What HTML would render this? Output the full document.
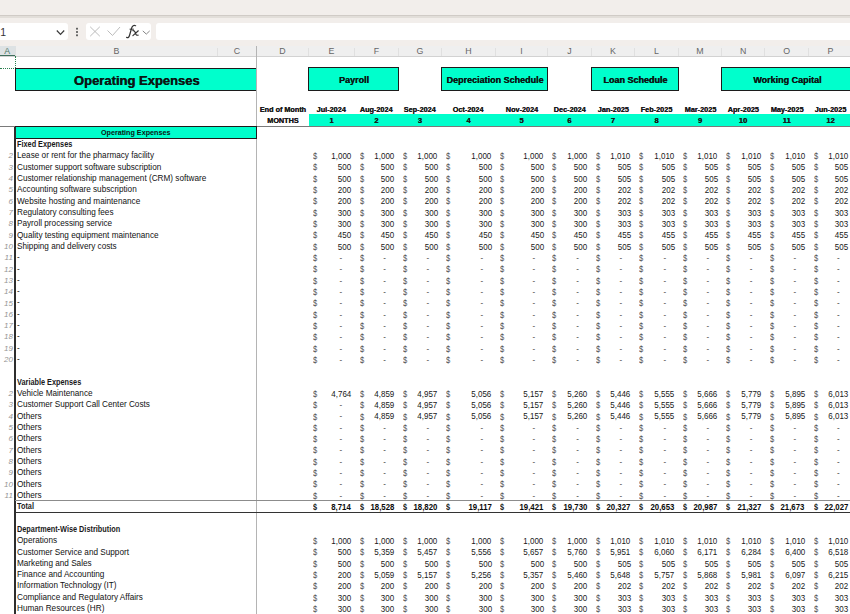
<!DOCTYPE html><html><head><meta charset="utf-8"><style>
*{margin:0;padding:0;box-sizing:border-box}
html,body{width:850px;height:614px;overflow:hidden;background:#fff;position:relative}
body{font-family:"Liberation Sans",sans-serif;color:#1a1a1a}
.a{position:absolute;white-space:pre}
.r{position:absolute}
</style></head><body>
<div class="r" style="left:0;top:0;width:850px;height:46px;background:#f2eeeb"></div>
<div class="r" style="left:0;top:14.6px;width:850px;height:1.4px;background:#d0cbc6"></div>
<div class="r" style="left:0;top:16px;width:850px;height:1.6px;background:#e2ded9"></div>
<div class="r" style="left:-6px;top:22.7px;width:74px;height:17.3px;background:#fff;border-radius:3px"></div>
<div class="a" style="left:0.20px;top:27.31px;font-size:10.5px;line-height:10.5px;color:#333;">1</div>
<svg class="r" style="left:55px;top:29px" width="11" height="7" viewBox="0 0 11 7"><path d="M1.8 1.5 L5.5 5.3 L9.2 1.5" fill="none" stroke="#3a3a3a" stroke-width="1.2"/></svg>
<svg class="r" style="left:75px;top:27px" width="4" height="10" viewBox="0 0 4 10"><rect x="1.1" y="0.8" width="1.8" height="1.8" fill="#555"/><rect x="1.1" y="4.1" width="1.8" height="1.8" fill="#555"/><rect x="1.1" y="7.4" width="1.8" height="1.8" fill="#555"/></svg>
<div class="r" style="left:86px;top:22.7px;width:65px;height:17.3px;background:#fff;border-radius:3px"></div>
<svg class="r" style="left:89px;top:26px" width="12" height="11" viewBox="0 0 12 11"><path d="M1.2 0.8 L10.8 10.2 M10.8 0.8 L1.2 10.2" fill="none" stroke="#b4b4b4" stroke-width="0.9"/></svg>
<svg class="r" style="left:106px;top:26px" width="15" height="11" viewBox="0 0 15 11"><path d="M1.5 4.5 L6.5 9.5 L14 1" fill="none" stroke="#b4b4b4" stroke-width="0.9"/></svg>
<svg class="r" style="left:120px;top:20px" width="35" height="22" viewBox="120 20 35 22"><path d="M126.6 37.3 C127.8 38.3 129 37.6 129.8 34.5 L131.6 28.2 C132.4 25.6 133.8 24.9 135.6 25.7" fill="none" stroke="#333" stroke-width="1.25" stroke-linecap="round"/><path d="M129.6 29.2 L133.9 29.2" stroke="#333" stroke-width="1"/><path d="M132.9 30.6 C134.4 30.2 134.9 31 135.4 32.8 C135.9 34.8 136.6 35.6 138.1 35.1 M138.3 30.8 L132.9 35.6" fill="none" stroke="#333" stroke-width="1.2" stroke-linecap="round"/></svg>
<svg class="r" style="left:142px;top:29.5px" width="9" height="6" viewBox="0 0 9 6"><path d="M0.8 0.9 L4.3 4.1 L7.7 0.9" fill="none" stroke="#777" stroke-width="0.9"/></svg>
<div class="r" style="left:156px;top:22.7px;width:700px;height:17.3px;background:#fff;border-radius:3px"></div>
<div class="r" style="left:0;top:46px;width:850px;height:10.4px;background:#efefef"></div>
<div class="r" style="left:0;top:55.6px;width:850px;height:0.8px;background:#d2d2d2"></div>
<div class="r" style="left:0;top:46px;width:15.6px;height:9.6px;background:#dde2e4"></div>
<div class="r" style="left:0;top:55.2px;width:15.6px;height:1.2px;background:#3f6e5c"></div>
<div class="a" style="left:-0.60px;top:46.55px;font-size:8.8px;line-height:8.8px;width:15.60px;text-align:center;color:#4a7566;">A</div>
<div class="a" style="left:15.60px;top:46.55px;font-size:8.8px;line-height:8.8px;width:201.70px;text-align:center;color:#666;">B</div>
<div class="r" style="left:15.30px;top:48px;width:0.6px;height:7.6px;background:#e0e0e0"></div>
<div class="a" style="left:217.30px;top:46.55px;font-size:8.8px;line-height:8.8px;width:39.20px;text-align:center;color:#666;">C</div>
<div class="r" style="left:217.00px;top:48px;width:0.6px;height:7.6px;background:#e0e0e0"></div>
<div class="a" style="left:256.50px;top:46.55px;font-size:8.8px;line-height:8.8px;width:52.00px;text-align:center;color:#666;">D</div>
<div class="r" style="left:256.20px;top:48px;width:0.6px;height:7.6px;background:#e0e0e0"></div>
<div class="a" style="left:308.50px;top:46.55px;font-size:8.8px;line-height:8.8px;width:46.10px;text-align:center;color:#666;">E</div>
<div class="r" style="left:308.20px;top:48px;width:0.6px;height:7.6px;background:#e0e0e0"></div>
<div class="a" style="left:354.60px;top:46.55px;font-size:8.8px;line-height:8.8px;width:43.70px;text-align:center;color:#666;">F</div>
<div class="r" style="left:354.30px;top:48px;width:0.6px;height:7.6px;background:#e0e0e0"></div>
<div class="a" style="left:398.30px;top:46.55px;font-size:8.8px;line-height:8.8px;width:43.20px;text-align:center;color:#666;">G</div>
<div class="r" style="left:398.00px;top:48px;width:0.6px;height:7.6px;background:#e0e0e0"></div>
<div class="a" style="left:441.50px;top:46.55px;font-size:8.8px;line-height:8.8px;width:54.00px;text-align:center;color:#666;">H</div>
<div class="r" style="left:441.20px;top:48px;width:0.6px;height:7.6px;background:#e0e0e0"></div>
<div class="a" style="left:495.50px;top:46.55px;font-size:8.8px;line-height:8.8px;width:52.00px;text-align:center;color:#666;">I</div>
<div class="r" style="left:495.20px;top:48px;width:0.6px;height:7.6px;background:#e0e0e0"></div>
<div class="a" style="left:547.50px;top:46.55px;font-size:8.8px;line-height:8.8px;width:43.70px;text-align:center;color:#666;">J</div>
<div class="r" style="left:547.20px;top:48px;width:0.6px;height:7.6px;background:#e0e0e0"></div>
<div class="a" style="left:591.20px;top:46.55px;font-size:8.8px;line-height:8.8px;width:43.30px;text-align:center;color:#666;">K</div>
<div class="r" style="left:590.90px;top:48px;width:0.6px;height:7.6px;background:#e0e0e0"></div>
<div class="a" style="left:634.50px;top:46.55px;font-size:8.8px;line-height:8.8px;width:44.00px;text-align:center;color:#666;">L</div>
<div class="r" style="left:634.20px;top:48px;width:0.6px;height:7.6px;background:#e0e0e0"></div>
<div class="a" style="left:678.50px;top:46.55px;font-size:8.8px;line-height:8.8px;width:43.00px;text-align:center;color:#666;">M</div>
<div class="r" style="left:678.20px;top:48px;width:0.6px;height:7.6px;background:#e0e0e0"></div>
<div class="a" style="left:721.50px;top:46.55px;font-size:8.8px;line-height:8.8px;width:43.20px;text-align:center;color:#666;">N</div>
<div class="r" style="left:721.20px;top:48px;width:0.6px;height:7.6px;background:#e0e0e0"></div>
<div class="a" style="left:764.70px;top:46.55px;font-size:8.8px;line-height:8.8px;width:44.00px;text-align:center;color:#666;">O</div>
<div class="r" style="left:764.40px;top:48px;width:0.6px;height:7.6px;background:#e0e0e0"></div>
<div class="a" style="left:808.70px;top:46.55px;font-size:8.8px;line-height:8.8px;width:43.50px;text-align:center;color:#666;">P</div>
<div class="r" style="left:808.40px;top:48px;width:0.6px;height:7.6px;background:#e0e0e0"></div>
<div class="r" style="left:14.8px;top:56.4px;width:0;height:12px;border-left:0.9px dotted #2a8050"></div>
<div class="r" style="left:0;top:67.8px;width:15.6px;height:0;border-top:0.9px dotted #2a8050"></div>
<div class="r" style="left:14.6px;top:67.5px;width:242.20px;height:23.2px;background:#00FFCC;border:1.2px solid #1c1c1c"></div>
<div class="a" style="left:15.60px;top:73.60px;font-size:13px;line-height:13px;width:242.20px;text-align:center;font-weight:bold;color:#0a1714;text-shadow:0.4px 0 0 #0a1714">Operating Expenses</div>
<div class="r" style="left:308.10px;top:67.4px;width:90.70px;height:23.3px;background:#00FFCC;border:1.2px solid #1c1c1c"></div>
<div class="a" style="left:309.00px;top:75.78px;font-size:9px;line-height:9px;width:89.80px;text-align:center;font-weight:bold;color:#0a1714;text-shadow:0.35px 0 0 #0a1714">Payroll</div>
<div class="r" style="left:441.10px;top:67.4px;width:106.90px;height:23.3px;background:#00FFCC;border:1.2px solid #1c1c1c"></div>
<div class="a" style="left:442.00px;top:75.78px;font-size:9px;line-height:9px;width:106.00px;text-align:center;font-weight:bold;color:#0a1714;text-shadow:0.35px 0 0 #0a1714">Depreciation Schedule</div>
<div class="r" style="left:590.80px;top:67.4px;width:88.20px;height:23.3px;background:#00FFCC;border:1.2px solid #1c1c1c"></div>
<div class="a" style="left:591.70px;top:75.78px;font-size:9px;line-height:9px;width:87.30px;text-align:center;font-weight:bold;color:#0a1714;text-shadow:0.35px 0 0 #0a1714">Loan Schedule</div>
<div class="r" style="left:721.10px;top:67.4px;width:131.60px;height:23.3px;background:#00FFCC;border:1.2px solid #1c1c1c"></div>
<div class="a" style="left:722.00px;top:75.78px;font-size:9px;line-height:9px;width:130.70px;text-align:center;font-weight:bold;color:#0a1714;text-shadow:0.35px 0 0 #0a1714">Working Capital</div>
<div class="r" style="left:308.5px;top:114.2px;width:541.5px;height:11.5px;background:#00FFCC"></div>
<div class="a" style="left:256.50px;top:105.60px;font-size:7.8px;line-height:7.8px;width:52.00px;text-align:center;font-weight:bold;text-shadow:0.2px 0 0 #1a1a1a"><span style="display:inline-block;transform:scaleX(0.93);transform-origin:50% 0">End of Month</span></div>
<div class="a" style="left:256.50px;top:116.80px;font-size:7.8px;line-height:7.8px;width:52.00px;text-align:center;font-weight:bold;text-shadow:0.2px 0 0 #1a1a1a"><span style="display:inline-block;transform:scaleX(0.93);transform-origin:50% 0">MONTHS</span></div>
<div class="a" style="left:308.50px;top:105.97px;font-size:7.6px;line-height:7.6px;width:46.10px;text-align:center;font-weight:bold;text-shadow:0.2px 0 0 #1a1a1a"><span style="display:inline-block;transform:scaleX(0.96);transform-origin:50% 0">Jul-2024</span></div>
<div class="a" style="left:308.50px;top:117.27px;font-size:7.6px;line-height:7.6px;width:46.10px;text-align:center;font-weight:bold;text-shadow:0.2px 0 0 #1a1a1a">1</div>
<div class="a" style="left:354.60px;top:105.97px;font-size:7.6px;line-height:7.6px;width:43.70px;text-align:center;font-weight:bold;text-shadow:0.2px 0 0 #1a1a1a"><span style="display:inline-block;transform:scaleX(0.96);transform-origin:50% 0">Aug-2024</span></div>
<div class="a" style="left:354.60px;top:117.27px;font-size:7.6px;line-height:7.6px;width:43.70px;text-align:center;font-weight:bold;text-shadow:0.2px 0 0 #1a1a1a">2</div>
<div class="a" style="left:398.30px;top:105.97px;font-size:7.6px;line-height:7.6px;width:43.20px;text-align:center;font-weight:bold;text-shadow:0.2px 0 0 #1a1a1a"><span style="display:inline-block;transform:scaleX(0.96);transform-origin:50% 0">Sep-2024</span></div>
<div class="a" style="left:398.30px;top:117.27px;font-size:7.6px;line-height:7.6px;width:43.20px;text-align:center;font-weight:bold;text-shadow:0.2px 0 0 #1a1a1a">3</div>
<div class="a" style="left:441.50px;top:105.97px;font-size:7.6px;line-height:7.6px;width:54.00px;text-align:center;font-weight:bold;text-shadow:0.2px 0 0 #1a1a1a"><span style="display:inline-block;transform:scaleX(0.96);transform-origin:50% 0">Oct-2024</span></div>
<div class="a" style="left:441.50px;top:117.27px;font-size:7.6px;line-height:7.6px;width:54.00px;text-align:center;font-weight:bold;text-shadow:0.2px 0 0 #1a1a1a">4</div>
<div class="a" style="left:495.50px;top:105.97px;font-size:7.6px;line-height:7.6px;width:52.00px;text-align:center;font-weight:bold;text-shadow:0.2px 0 0 #1a1a1a"><span style="display:inline-block;transform:scaleX(0.96);transform-origin:50% 0">Nov-2024</span></div>
<div class="a" style="left:495.50px;top:117.27px;font-size:7.6px;line-height:7.6px;width:52.00px;text-align:center;font-weight:bold;text-shadow:0.2px 0 0 #1a1a1a">5</div>
<div class="a" style="left:547.50px;top:105.97px;font-size:7.6px;line-height:7.6px;width:43.70px;text-align:center;font-weight:bold;text-shadow:0.2px 0 0 #1a1a1a"><span style="display:inline-block;transform:scaleX(0.96);transform-origin:50% 0">Dec-2024</span></div>
<div class="a" style="left:547.50px;top:117.27px;font-size:7.6px;line-height:7.6px;width:43.70px;text-align:center;font-weight:bold;text-shadow:0.2px 0 0 #1a1a1a">6</div>
<div class="a" style="left:591.20px;top:105.97px;font-size:7.6px;line-height:7.6px;width:43.30px;text-align:center;font-weight:bold;text-shadow:0.2px 0 0 #1a1a1a"><span style="display:inline-block;transform:scaleX(0.96);transform-origin:50% 0">Jan-2025</span></div>
<div class="a" style="left:591.20px;top:117.27px;font-size:7.6px;line-height:7.6px;width:43.30px;text-align:center;font-weight:bold;text-shadow:0.2px 0 0 #1a1a1a">7</div>
<div class="a" style="left:634.50px;top:105.97px;font-size:7.6px;line-height:7.6px;width:44.00px;text-align:center;font-weight:bold;text-shadow:0.2px 0 0 #1a1a1a"><span style="display:inline-block;transform:scaleX(0.96);transform-origin:50% 0">Feb-2025</span></div>
<div class="a" style="left:634.50px;top:117.27px;font-size:7.6px;line-height:7.6px;width:44.00px;text-align:center;font-weight:bold;text-shadow:0.2px 0 0 #1a1a1a">8</div>
<div class="a" style="left:678.50px;top:105.97px;font-size:7.6px;line-height:7.6px;width:43.00px;text-align:center;font-weight:bold;text-shadow:0.2px 0 0 #1a1a1a"><span style="display:inline-block;transform:scaleX(0.96);transform-origin:50% 0">Mar-2025</span></div>
<div class="a" style="left:678.50px;top:117.27px;font-size:7.6px;line-height:7.6px;width:43.00px;text-align:center;font-weight:bold;text-shadow:0.2px 0 0 #1a1a1a">9</div>
<div class="a" style="left:721.50px;top:105.97px;font-size:7.6px;line-height:7.6px;width:43.20px;text-align:center;font-weight:bold;text-shadow:0.2px 0 0 #1a1a1a"><span style="display:inline-block;transform:scaleX(0.96);transform-origin:50% 0">Apr-2025</span></div>
<div class="a" style="left:721.50px;top:117.27px;font-size:7.6px;line-height:7.6px;width:43.20px;text-align:center;font-weight:bold;text-shadow:0.2px 0 0 #1a1a1a">10</div>
<div class="a" style="left:764.70px;top:105.97px;font-size:7.6px;line-height:7.6px;width:44.00px;text-align:center;font-weight:bold;text-shadow:0.2px 0 0 #1a1a1a"><span style="display:inline-block;transform:scaleX(0.96);transform-origin:50% 0">May-2025</span></div>
<div class="a" style="left:764.70px;top:117.27px;font-size:7.6px;line-height:7.6px;width:44.00px;text-align:center;font-weight:bold;text-shadow:0.2px 0 0 #1a1a1a">11</div>
<div class="a" style="left:808.70px;top:105.97px;font-size:7.6px;line-height:7.6px;width:43.50px;text-align:center;font-weight:bold;text-shadow:0.2px 0 0 #1a1a1a"><span style="display:inline-block;transform:scaleX(0.96);transform-origin:50% 0">Jun-2025</span></div>
<div class="a" style="left:808.70px;top:117.27px;font-size:7.6px;line-height:7.6px;width:43.50px;text-align:center;font-weight:bold;text-shadow:0.2px 0 0 #1a1a1a">12</div>
<div class="r" style="left:256.1px;top:46px;width:0.9px;height:570px;background:#b4b4b4"></div>
<div class="r" style="left:0;top:125.6px;width:850px;height:1.1px;background:#7a7a7a"></div>
<div class="r" style="left:14.6px;top:126.30px;width:242.20px;height:12.32px;background:#00FFCC;border:1.1px solid #1c1c1c"></div>
<div class="a" style="left:14.60px;top:129.41px;font-size:7.2px;line-height:7.2px;width:242.20px;text-align:center;font-weight:bold;color:#0a1714;">Operating Expenses</div>
<div class="r" style="left:14.2px;top:126.60px;width:1.9px;height:487.40px;background:#2e2e2e"></div>
<div class="a" style="left:17.00px;top:140.12px;font-size:8.5px;line-height:8.5px;font-weight:bold;color:#1a1a1a;"><span style="display:inline-block;transform:scaleX(0.86);transform-origin:0 0">Fixed Expenses</span></div>
<div class="a" style="left:0.00px;top:152.37px;font-size:8px;line-height:8px;width:12.90px;text-align:right;color:#959595;font-style:italic;">2</div>
<div class="a" style="left:17.00px;top:152.30px;font-size:8.2px;line-height:8.2px;color:#111;">Lease or rent for the pharmacy facility</div>
<div class="a" style="left:313.40px;top:152.16px;font-size:8.6px;line-height:8.6px;color:#505050;"><span style="display:inline-block;transform:scaleX(0.88);transform-origin:0 0">$</span></div>
<div class="a" style="left:308.50px;top:152.04px;font-size:8.5px;line-height:8.5px;width:42.30px;text-align:right;color:#181818;"><span style="display:inline-block;transform:scaleX(0.94);transform-origin:100% 0">1,000</span></div>
<div class="a" style="left:359.50px;top:152.16px;font-size:8.6px;line-height:8.6px;color:#505050;"><span style="display:inline-block;transform:scaleX(0.88);transform-origin:0 0">$</span></div>
<div class="a" style="left:354.60px;top:152.04px;font-size:8.5px;line-height:8.5px;width:39.90px;text-align:right;color:#181818;"><span style="display:inline-block;transform:scaleX(0.94);transform-origin:100% 0">1,000</span></div>
<div class="a" style="left:403.20px;top:152.16px;font-size:8.6px;line-height:8.6px;color:#505050;"><span style="display:inline-block;transform:scaleX(0.88);transform-origin:0 0">$</span></div>
<div class="a" style="left:398.30px;top:152.04px;font-size:8.5px;line-height:8.5px;width:39.40px;text-align:right;color:#181818;"><span style="display:inline-block;transform:scaleX(0.94);transform-origin:100% 0">1,000</span></div>
<div class="a" style="left:446.40px;top:152.16px;font-size:8.6px;line-height:8.6px;color:#505050;"><span style="display:inline-block;transform:scaleX(0.88);transform-origin:0 0">$</span></div>
<div class="a" style="left:441.50px;top:152.04px;font-size:8.5px;line-height:8.5px;width:50.20px;text-align:right;color:#181818;"><span style="display:inline-block;transform:scaleX(0.94);transform-origin:100% 0">1,000</span></div>
<div class="a" style="left:500.40px;top:152.16px;font-size:8.6px;line-height:8.6px;color:#505050;"><span style="display:inline-block;transform:scaleX(0.88);transform-origin:0 0">$</span></div>
<div class="a" style="left:495.50px;top:152.04px;font-size:8.5px;line-height:8.5px;width:48.20px;text-align:right;color:#181818;"><span style="display:inline-block;transform:scaleX(0.94);transform-origin:100% 0">1,000</span></div>
<div class="a" style="left:552.40px;top:152.16px;font-size:8.6px;line-height:8.6px;color:#505050;"><span style="display:inline-block;transform:scaleX(0.88);transform-origin:0 0">$</span></div>
<div class="a" style="left:547.50px;top:152.04px;font-size:8.5px;line-height:8.5px;width:39.90px;text-align:right;color:#181818;"><span style="display:inline-block;transform:scaleX(0.94);transform-origin:100% 0">1,000</span></div>
<div class="a" style="left:596.10px;top:152.16px;font-size:8.6px;line-height:8.6px;color:#505050;"><span style="display:inline-block;transform:scaleX(0.88);transform-origin:0 0">$</span></div>
<div class="a" style="left:591.20px;top:152.04px;font-size:8.5px;line-height:8.5px;width:39.50px;text-align:right;color:#181818;"><span style="display:inline-block;transform:scaleX(0.94);transform-origin:100% 0">1,010</span></div>
<div class="a" style="left:639.40px;top:152.16px;font-size:8.6px;line-height:8.6px;color:#505050;"><span style="display:inline-block;transform:scaleX(0.88);transform-origin:0 0">$</span></div>
<div class="a" style="left:634.50px;top:152.04px;font-size:8.5px;line-height:8.5px;width:40.20px;text-align:right;color:#181818;"><span style="display:inline-block;transform:scaleX(0.94);transform-origin:100% 0">1,010</span></div>
<div class="a" style="left:683.40px;top:152.16px;font-size:8.6px;line-height:8.6px;color:#505050;"><span style="display:inline-block;transform:scaleX(0.88);transform-origin:0 0">$</span></div>
<div class="a" style="left:678.50px;top:152.04px;font-size:8.5px;line-height:8.5px;width:39.20px;text-align:right;color:#181818;"><span style="display:inline-block;transform:scaleX(0.94);transform-origin:100% 0">1,010</span></div>
<div class="a" style="left:726.40px;top:152.16px;font-size:8.6px;line-height:8.6px;color:#505050;"><span style="display:inline-block;transform:scaleX(0.88);transform-origin:0 0">$</span></div>
<div class="a" style="left:721.50px;top:152.04px;font-size:8.5px;line-height:8.5px;width:39.40px;text-align:right;color:#181818;"><span style="display:inline-block;transform:scaleX(0.94);transform-origin:100% 0">1,010</span></div>
<div class="a" style="left:769.60px;top:152.16px;font-size:8.6px;line-height:8.6px;color:#505050;"><span style="display:inline-block;transform:scaleX(0.88);transform-origin:0 0">$</span></div>
<div class="a" style="left:764.70px;top:152.04px;font-size:8.5px;line-height:8.5px;width:40.20px;text-align:right;color:#181818;"><span style="display:inline-block;transform:scaleX(0.94);transform-origin:100% 0">1,010</span></div>
<div class="a" style="left:813.60px;top:152.16px;font-size:8.6px;line-height:8.6px;color:#505050;"><span style="display:inline-block;transform:scaleX(0.88);transform-origin:0 0">$</span></div>
<div class="a" style="left:808.70px;top:152.04px;font-size:8.5px;line-height:8.5px;width:39.70px;text-align:right;color:#181818;"><span style="display:inline-block;transform:scaleX(0.94);transform-origin:100% 0">1,010</span></div>
<div class="a" style="left:0.00px;top:163.69px;font-size:8px;line-height:8px;width:12.90px;text-align:right;color:#959595;font-style:italic;">3</div>
<div class="a" style="left:17.00px;top:163.62px;font-size:8.2px;line-height:8.2px;color:#111;">Customer support software subscription</div>
<div class="a" style="left:313.40px;top:163.48px;font-size:8.6px;line-height:8.6px;color:#505050;"><span style="display:inline-block;transform:scaleX(0.88);transform-origin:0 0">$</span></div>
<div class="a" style="left:308.50px;top:163.36px;font-size:8.5px;line-height:8.5px;width:42.30px;text-align:right;color:#181818;"><span style="display:inline-block;transform:scaleX(0.94);transform-origin:100% 0">500</span></div>
<div class="a" style="left:359.50px;top:163.48px;font-size:8.6px;line-height:8.6px;color:#505050;"><span style="display:inline-block;transform:scaleX(0.88);transform-origin:0 0">$</span></div>
<div class="a" style="left:354.60px;top:163.36px;font-size:8.5px;line-height:8.5px;width:39.90px;text-align:right;color:#181818;"><span style="display:inline-block;transform:scaleX(0.94);transform-origin:100% 0">500</span></div>
<div class="a" style="left:403.20px;top:163.48px;font-size:8.6px;line-height:8.6px;color:#505050;"><span style="display:inline-block;transform:scaleX(0.88);transform-origin:0 0">$</span></div>
<div class="a" style="left:398.30px;top:163.36px;font-size:8.5px;line-height:8.5px;width:39.40px;text-align:right;color:#181818;"><span style="display:inline-block;transform:scaleX(0.94);transform-origin:100% 0">500</span></div>
<div class="a" style="left:446.40px;top:163.48px;font-size:8.6px;line-height:8.6px;color:#505050;"><span style="display:inline-block;transform:scaleX(0.88);transform-origin:0 0">$</span></div>
<div class="a" style="left:441.50px;top:163.36px;font-size:8.5px;line-height:8.5px;width:50.20px;text-align:right;color:#181818;"><span style="display:inline-block;transform:scaleX(0.94);transform-origin:100% 0">500</span></div>
<div class="a" style="left:500.40px;top:163.48px;font-size:8.6px;line-height:8.6px;color:#505050;"><span style="display:inline-block;transform:scaleX(0.88);transform-origin:0 0">$</span></div>
<div class="a" style="left:495.50px;top:163.36px;font-size:8.5px;line-height:8.5px;width:48.20px;text-align:right;color:#181818;"><span style="display:inline-block;transform:scaleX(0.94);transform-origin:100% 0">500</span></div>
<div class="a" style="left:552.40px;top:163.48px;font-size:8.6px;line-height:8.6px;color:#505050;"><span style="display:inline-block;transform:scaleX(0.88);transform-origin:0 0">$</span></div>
<div class="a" style="left:547.50px;top:163.36px;font-size:8.5px;line-height:8.5px;width:39.90px;text-align:right;color:#181818;"><span style="display:inline-block;transform:scaleX(0.94);transform-origin:100% 0">500</span></div>
<div class="a" style="left:596.10px;top:163.48px;font-size:8.6px;line-height:8.6px;color:#505050;"><span style="display:inline-block;transform:scaleX(0.88);transform-origin:0 0">$</span></div>
<div class="a" style="left:591.20px;top:163.36px;font-size:8.5px;line-height:8.5px;width:39.50px;text-align:right;color:#181818;"><span style="display:inline-block;transform:scaleX(0.94);transform-origin:100% 0">505</span></div>
<div class="a" style="left:639.40px;top:163.48px;font-size:8.6px;line-height:8.6px;color:#505050;"><span style="display:inline-block;transform:scaleX(0.88);transform-origin:0 0">$</span></div>
<div class="a" style="left:634.50px;top:163.36px;font-size:8.5px;line-height:8.5px;width:40.20px;text-align:right;color:#181818;"><span style="display:inline-block;transform:scaleX(0.94);transform-origin:100% 0">505</span></div>
<div class="a" style="left:683.40px;top:163.48px;font-size:8.6px;line-height:8.6px;color:#505050;"><span style="display:inline-block;transform:scaleX(0.88);transform-origin:0 0">$</span></div>
<div class="a" style="left:678.50px;top:163.36px;font-size:8.5px;line-height:8.5px;width:39.20px;text-align:right;color:#181818;"><span style="display:inline-block;transform:scaleX(0.94);transform-origin:100% 0">505</span></div>
<div class="a" style="left:726.40px;top:163.48px;font-size:8.6px;line-height:8.6px;color:#505050;"><span style="display:inline-block;transform:scaleX(0.88);transform-origin:0 0">$</span></div>
<div class="a" style="left:721.50px;top:163.36px;font-size:8.5px;line-height:8.5px;width:39.40px;text-align:right;color:#181818;"><span style="display:inline-block;transform:scaleX(0.94);transform-origin:100% 0">505</span></div>
<div class="a" style="left:769.60px;top:163.48px;font-size:8.6px;line-height:8.6px;color:#505050;"><span style="display:inline-block;transform:scaleX(0.88);transform-origin:0 0">$</span></div>
<div class="a" style="left:764.70px;top:163.36px;font-size:8.5px;line-height:8.5px;width:40.20px;text-align:right;color:#181818;"><span style="display:inline-block;transform:scaleX(0.94);transform-origin:100% 0">505</span></div>
<div class="a" style="left:813.60px;top:163.48px;font-size:8.6px;line-height:8.6px;color:#505050;"><span style="display:inline-block;transform:scaleX(0.88);transform-origin:0 0">$</span></div>
<div class="a" style="left:808.70px;top:163.36px;font-size:8.5px;line-height:8.5px;width:39.70px;text-align:right;color:#181818;"><span style="display:inline-block;transform:scaleX(0.94);transform-origin:100% 0">505</span></div>
<div class="a" style="left:0.00px;top:175.01px;font-size:8px;line-height:8px;width:12.90px;text-align:right;color:#959595;font-style:italic;">4</div>
<div class="a" style="left:17.00px;top:174.94px;font-size:8.2px;line-height:8.2px;color:#111;">Customer relationship management (CRM) software</div>
<div class="a" style="left:313.40px;top:174.80px;font-size:8.6px;line-height:8.6px;color:#505050;"><span style="display:inline-block;transform:scaleX(0.88);transform-origin:0 0">$</span></div>
<div class="a" style="left:308.50px;top:174.68px;font-size:8.5px;line-height:8.5px;width:42.30px;text-align:right;color:#181818;"><span style="display:inline-block;transform:scaleX(0.94);transform-origin:100% 0">500</span></div>
<div class="a" style="left:359.50px;top:174.80px;font-size:8.6px;line-height:8.6px;color:#505050;"><span style="display:inline-block;transform:scaleX(0.88);transform-origin:0 0">$</span></div>
<div class="a" style="left:354.60px;top:174.68px;font-size:8.5px;line-height:8.5px;width:39.90px;text-align:right;color:#181818;"><span style="display:inline-block;transform:scaleX(0.94);transform-origin:100% 0">500</span></div>
<div class="a" style="left:403.20px;top:174.80px;font-size:8.6px;line-height:8.6px;color:#505050;"><span style="display:inline-block;transform:scaleX(0.88);transform-origin:0 0">$</span></div>
<div class="a" style="left:398.30px;top:174.68px;font-size:8.5px;line-height:8.5px;width:39.40px;text-align:right;color:#181818;"><span style="display:inline-block;transform:scaleX(0.94);transform-origin:100% 0">500</span></div>
<div class="a" style="left:446.40px;top:174.80px;font-size:8.6px;line-height:8.6px;color:#505050;"><span style="display:inline-block;transform:scaleX(0.88);transform-origin:0 0">$</span></div>
<div class="a" style="left:441.50px;top:174.68px;font-size:8.5px;line-height:8.5px;width:50.20px;text-align:right;color:#181818;"><span style="display:inline-block;transform:scaleX(0.94);transform-origin:100% 0">500</span></div>
<div class="a" style="left:500.40px;top:174.80px;font-size:8.6px;line-height:8.6px;color:#505050;"><span style="display:inline-block;transform:scaleX(0.88);transform-origin:0 0">$</span></div>
<div class="a" style="left:495.50px;top:174.68px;font-size:8.5px;line-height:8.5px;width:48.20px;text-align:right;color:#181818;"><span style="display:inline-block;transform:scaleX(0.94);transform-origin:100% 0">500</span></div>
<div class="a" style="left:552.40px;top:174.80px;font-size:8.6px;line-height:8.6px;color:#505050;"><span style="display:inline-block;transform:scaleX(0.88);transform-origin:0 0">$</span></div>
<div class="a" style="left:547.50px;top:174.68px;font-size:8.5px;line-height:8.5px;width:39.90px;text-align:right;color:#181818;"><span style="display:inline-block;transform:scaleX(0.94);transform-origin:100% 0">500</span></div>
<div class="a" style="left:596.10px;top:174.80px;font-size:8.6px;line-height:8.6px;color:#505050;"><span style="display:inline-block;transform:scaleX(0.88);transform-origin:0 0">$</span></div>
<div class="a" style="left:591.20px;top:174.68px;font-size:8.5px;line-height:8.5px;width:39.50px;text-align:right;color:#181818;"><span style="display:inline-block;transform:scaleX(0.94);transform-origin:100% 0">505</span></div>
<div class="a" style="left:639.40px;top:174.80px;font-size:8.6px;line-height:8.6px;color:#505050;"><span style="display:inline-block;transform:scaleX(0.88);transform-origin:0 0">$</span></div>
<div class="a" style="left:634.50px;top:174.68px;font-size:8.5px;line-height:8.5px;width:40.20px;text-align:right;color:#181818;"><span style="display:inline-block;transform:scaleX(0.94);transform-origin:100% 0">505</span></div>
<div class="a" style="left:683.40px;top:174.80px;font-size:8.6px;line-height:8.6px;color:#505050;"><span style="display:inline-block;transform:scaleX(0.88);transform-origin:0 0">$</span></div>
<div class="a" style="left:678.50px;top:174.68px;font-size:8.5px;line-height:8.5px;width:39.20px;text-align:right;color:#181818;"><span style="display:inline-block;transform:scaleX(0.94);transform-origin:100% 0">505</span></div>
<div class="a" style="left:726.40px;top:174.80px;font-size:8.6px;line-height:8.6px;color:#505050;"><span style="display:inline-block;transform:scaleX(0.88);transform-origin:0 0">$</span></div>
<div class="a" style="left:721.50px;top:174.68px;font-size:8.5px;line-height:8.5px;width:39.40px;text-align:right;color:#181818;"><span style="display:inline-block;transform:scaleX(0.94);transform-origin:100% 0">505</span></div>
<div class="a" style="left:769.60px;top:174.80px;font-size:8.6px;line-height:8.6px;color:#505050;"><span style="display:inline-block;transform:scaleX(0.88);transform-origin:0 0">$</span></div>
<div class="a" style="left:764.70px;top:174.68px;font-size:8.5px;line-height:8.5px;width:40.20px;text-align:right;color:#181818;"><span style="display:inline-block;transform:scaleX(0.94);transform-origin:100% 0">505</span></div>
<div class="a" style="left:813.60px;top:174.80px;font-size:8.6px;line-height:8.6px;color:#505050;"><span style="display:inline-block;transform:scaleX(0.88);transform-origin:0 0">$</span></div>
<div class="a" style="left:808.70px;top:174.68px;font-size:8.5px;line-height:8.5px;width:39.70px;text-align:right;color:#181818;"><span style="display:inline-block;transform:scaleX(0.94);transform-origin:100% 0">505</span></div>
<div class="a" style="left:0.00px;top:186.33px;font-size:8px;line-height:8px;width:12.90px;text-align:right;color:#959595;font-style:italic;">5</div>
<div class="a" style="left:17.00px;top:186.26px;font-size:8.2px;line-height:8.2px;color:#111;">Accounting software subscription</div>
<div class="a" style="left:313.40px;top:186.12px;font-size:8.6px;line-height:8.6px;color:#505050;"><span style="display:inline-block;transform:scaleX(0.88);transform-origin:0 0">$</span></div>
<div class="a" style="left:308.50px;top:186.00px;font-size:8.5px;line-height:8.5px;width:42.30px;text-align:right;color:#181818;"><span style="display:inline-block;transform:scaleX(0.94);transform-origin:100% 0">200</span></div>
<div class="a" style="left:359.50px;top:186.12px;font-size:8.6px;line-height:8.6px;color:#505050;"><span style="display:inline-block;transform:scaleX(0.88);transform-origin:0 0">$</span></div>
<div class="a" style="left:354.60px;top:186.00px;font-size:8.5px;line-height:8.5px;width:39.90px;text-align:right;color:#181818;"><span style="display:inline-block;transform:scaleX(0.94);transform-origin:100% 0">200</span></div>
<div class="a" style="left:403.20px;top:186.12px;font-size:8.6px;line-height:8.6px;color:#505050;"><span style="display:inline-block;transform:scaleX(0.88);transform-origin:0 0">$</span></div>
<div class="a" style="left:398.30px;top:186.00px;font-size:8.5px;line-height:8.5px;width:39.40px;text-align:right;color:#181818;"><span style="display:inline-block;transform:scaleX(0.94);transform-origin:100% 0">200</span></div>
<div class="a" style="left:446.40px;top:186.12px;font-size:8.6px;line-height:8.6px;color:#505050;"><span style="display:inline-block;transform:scaleX(0.88);transform-origin:0 0">$</span></div>
<div class="a" style="left:441.50px;top:186.00px;font-size:8.5px;line-height:8.5px;width:50.20px;text-align:right;color:#181818;"><span style="display:inline-block;transform:scaleX(0.94);transform-origin:100% 0">200</span></div>
<div class="a" style="left:500.40px;top:186.12px;font-size:8.6px;line-height:8.6px;color:#505050;"><span style="display:inline-block;transform:scaleX(0.88);transform-origin:0 0">$</span></div>
<div class="a" style="left:495.50px;top:186.00px;font-size:8.5px;line-height:8.5px;width:48.20px;text-align:right;color:#181818;"><span style="display:inline-block;transform:scaleX(0.94);transform-origin:100% 0">200</span></div>
<div class="a" style="left:552.40px;top:186.12px;font-size:8.6px;line-height:8.6px;color:#505050;"><span style="display:inline-block;transform:scaleX(0.88);transform-origin:0 0">$</span></div>
<div class="a" style="left:547.50px;top:186.00px;font-size:8.5px;line-height:8.5px;width:39.90px;text-align:right;color:#181818;"><span style="display:inline-block;transform:scaleX(0.94);transform-origin:100% 0">200</span></div>
<div class="a" style="left:596.10px;top:186.12px;font-size:8.6px;line-height:8.6px;color:#505050;"><span style="display:inline-block;transform:scaleX(0.88);transform-origin:0 0">$</span></div>
<div class="a" style="left:591.20px;top:186.00px;font-size:8.5px;line-height:8.5px;width:39.50px;text-align:right;color:#181818;"><span style="display:inline-block;transform:scaleX(0.94);transform-origin:100% 0">202</span></div>
<div class="a" style="left:639.40px;top:186.12px;font-size:8.6px;line-height:8.6px;color:#505050;"><span style="display:inline-block;transform:scaleX(0.88);transform-origin:0 0">$</span></div>
<div class="a" style="left:634.50px;top:186.00px;font-size:8.5px;line-height:8.5px;width:40.20px;text-align:right;color:#181818;"><span style="display:inline-block;transform:scaleX(0.94);transform-origin:100% 0">202</span></div>
<div class="a" style="left:683.40px;top:186.12px;font-size:8.6px;line-height:8.6px;color:#505050;"><span style="display:inline-block;transform:scaleX(0.88);transform-origin:0 0">$</span></div>
<div class="a" style="left:678.50px;top:186.00px;font-size:8.5px;line-height:8.5px;width:39.20px;text-align:right;color:#181818;"><span style="display:inline-block;transform:scaleX(0.94);transform-origin:100% 0">202</span></div>
<div class="a" style="left:726.40px;top:186.12px;font-size:8.6px;line-height:8.6px;color:#505050;"><span style="display:inline-block;transform:scaleX(0.88);transform-origin:0 0">$</span></div>
<div class="a" style="left:721.50px;top:186.00px;font-size:8.5px;line-height:8.5px;width:39.40px;text-align:right;color:#181818;"><span style="display:inline-block;transform:scaleX(0.94);transform-origin:100% 0">202</span></div>
<div class="a" style="left:769.60px;top:186.12px;font-size:8.6px;line-height:8.6px;color:#505050;"><span style="display:inline-block;transform:scaleX(0.88);transform-origin:0 0">$</span></div>
<div class="a" style="left:764.70px;top:186.00px;font-size:8.5px;line-height:8.5px;width:40.20px;text-align:right;color:#181818;"><span style="display:inline-block;transform:scaleX(0.94);transform-origin:100% 0">202</span></div>
<div class="a" style="left:813.60px;top:186.12px;font-size:8.6px;line-height:8.6px;color:#505050;"><span style="display:inline-block;transform:scaleX(0.88);transform-origin:0 0">$</span></div>
<div class="a" style="left:808.70px;top:186.00px;font-size:8.5px;line-height:8.5px;width:39.70px;text-align:right;color:#181818;"><span style="display:inline-block;transform:scaleX(0.94);transform-origin:100% 0">202</span></div>
<div class="a" style="left:0.00px;top:197.65px;font-size:8px;line-height:8px;width:12.90px;text-align:right;color:#959595;font-style:italic;">6</div>
<div class="a" style="left:17.00px;top:197.58px;font-size:8.2px;line-height:8.2px;color:#111;">Website hosting and maintenance</div>
<div class="a" style="left:313.40px;top:197.44px;font-size:8.6px;line-height:8.6px;color:#505050;"><span style="display:inline-block;transform:scaleX(0.88);transform-origin:0 0">$</span></div>
<div class="a" style="left:308.50px;top:197.32px;font-size:8.5px;line-height:8.5px;width:42.30px;text-align:right;color:#181818;"><span style="display:inline-block;transform:scaleX(0.94);transform-origin:100% 0">200</span></div>
<div class="a" style="left:359.50px;top:197.44px;font-size:8.6px;line-height:8.6px;color:#505050;"><span style="display:inline-block;transform:scaleX(0.88);transform-origin:0 0">$</span></div>
<div class="a" style="left:354.60px;top:197.32px;font-size:8.5px;line-height:8.5px;width:39.90px;text-align:right;color:#181818;"><span style="display:inline-block;transform:scaleX(0.94);transform-origin:100% 0">200</span></div>
<div class="a" style="left:403.20px;top:197.44px;font-size:8.6px;line-height:8.6px;color:#505050;"><span style="display:inline-block;transform:scaleX(0.88);transform-origin:0 0">$</span></div>
<div class="a" style="left:398.30px;top:197.32px;font-size:8.5px;line-height:8.5px;width:39.40px;text-align:right;color:#181818;"><span style="display:inline-block;transform:scaleX(0.94);transform-origin:100% 0">200</span></div>
<div class="a" style="left:446.40px;top:197.44px;font-size:8.6px;line-height:8.6px;color:#505050;"><span style="display:inline-block;transform:scaleX(0.88);transform-origin:0 0">$</span></div>
<div class="a" style="left:441.50px;top:197.32px;font-size:8.5px;line-height:8.5px;width:50.20px;text-align:right;color:#181818;"><span style="display:inline-block;transform:scaleX(0.94);transform-origin:100% 0">200</span></div>
<div class="a" style="left:500.40px;top:197.44px;font-size:8.6px;line-height:8.6px;color:#505050;"><span style="display:inline-block;transform:scaleX(0.88);transform-origin:0 0">$</span></div>
<div class="a" style="left:495.50px;top:197.32px;font-size:8.5px;line-height:8.5px;width:48.20px;text-align:right;color:#181818;"><span style="display:inline-block;transform:scaleX(0.94);transform-origin:100% 0">200</span></div>
<div class="a" style="left:552.40px;top:197.44px;font-size:8.6px;line-height:8.6px;color:#505050;"><span style="display:inline-block;transform:scaleX(0.88);transform-origin:0 0">$</span></div>
<div class="a" style="left:547.50px;top:197.32px;font-size:8.5px;line-height:8.5px;width:39.90px;text-align:right;color:#181818;"><span style="display:inline-block;transform:scaleX(0.94);transform-origin:100% 0">200</span></div>
<div class="a" style="left:596.10px;top:197.44px;font-size:8.6px;line-height:8.6px;color:#505050;"><span style="display:inline-block;transform:scaleX(0.88);transform-origin:0 0">$</span></div>
<div class="a" style="left:591.20px;top:197.32px;font-size:8.5px;line-height:8.5px;width:39.50px;text-align:right;color:#181818;"><span style="display:inline-block;transform:scaleX(0.94);transform-origin:100% 0">202</span></div>
<div class="a" style="left:639.40px;top:197.44px;font-size:8.6px;line-height:8.6px;color:#505050;"><span style="display:inline-block;transform:scaleX(0.88);transform-origin:0 0">$</span></div>
<div class="a" style="left:634.50px;top:197.32px;font-size:8.5px;line-height:8.5px;width:40.20px;text-align:right;color:#181818;"><span style="display:inline-block;transform:scaleX(0.94);transform-origin:100% 0">202</span></div>
<div class="a" style="left:683.40px;top:197.44px;font-size:8.6px;line-height:8.6px;color:#505050;"><span style="display:inline-block;transform:scaleX(0.88);transform-origin:0 0">$</span></div>
<div class="a" style="left:678.50px;top:197.32px;font-size:8.5px;line-height:8.5px;width:39.20px;text-align:right;color:#181818;"><span style="display:inline-block;transform:scaleX(0.94);transform-origin:100% 0">202</span></div>
<div class="a" style="left:726.40px;top:197.44px;font-size:8.6px;line-height:8.6px;color:#505050;"><span style="display:inline-block;transform:scaleX(0.88);transform-origin:0 0">$</span></div>
<div class="a" style="left:721.50px;top:197.32px;font-size:8.5px;line-height:8.5px;width:39.40px;text-align:right;color:#181818;"><span style="display:inline-block;transform:scaleX(0.94);transform-origin:100% 0">202</span></div>
<div class="a" style="left:769.60px;top:197.44px;font-size:8.6px;line-height:8.6px;color:#505050;"><span style="display:inline-block;transform:scaleX(0.88);transform-origin:0 0">$</span></div>
<div class="a" style="left:764.70px;top:197.32px;font-size:8.5px;line-height:8.5px;width:40.20px;text-align:right;color:#181818;"><span style="display:inline-block;transform:scaleX(0.94);transform-origin:100% 0">202</span></div>
<div class="a" style="left:813.60px;top:197.44px;font-size:8.6px;line-height:8.6px;color:#505050;"><span style="display:inline-block;transform:scaleX(0.88);transform-origin:0 0">$</span></div>
<div class="a" style="left:808.70px;top:197.32px;font-size:8.5px;line-height:8.5px;width:39.70px;text-align:right;color:#181818;"><span style="display:inline-block;transform:scaleX(0.94);transform-origin:100% 0">202</span></div>
<div class="a" style="left:0.00px;top:208.97px;font-size:8px;line-height:8px;width:12.90px;text-align:right;color:#959595;font-style:italic;">7</div>
<div class="a" style="left:17.00px;top:208.90px;font-size:8.2px;line-height:8.2px;color:#111;">Regulatory consulting fees</div>
<div class="a" style="left:313.40px;top:208.76px;font-size:8.6px;line-height:8.6px;color:#505050;"><span style="display:inline-block;transform:scaleX(0.88);transform-origin:0 0">$</span></div>
<div class="a" style="left:308.50px;top:208.64px;font-size:8.5px;line-height:8.5px;width:42.30px;text-align:right;color:#181818;"><span style="display:inline-block;transform:scaleX(0.94);transform-origin:100% 0">300</span></div>
<div class="a" style="left:359.50px;top:208.76px;font-size:8.6px;line-height:8.6px;color:#505050;"><span style="display:inline-block;transform:scaleX(0.88);transform-origin:0 0">$</span></div>
<div class="a" style="left:354.60px;top:208.64px;font-size:8.5px;line-height:8.5px;width:39.90px;text-align:right;color:#181818;"><span style="display:inline-block;transform:scaleX(0.94);transform-origin:100% 0">300</span></div>
<div class="a" style="left:403.20px;top:208.76px;font-size:8.6px;line-height:8.6px;color:#505050;"><span style="display:inline-block;transform:scaleX(0.88);transform-origin:0 0">$</span></div>
<div class="a" style="left:398.30px;top:208.64px;font-size:8.5px;line-height:8.5px;width:39.40px;text-align:right;color:#181818;"><span style="display:inline-block;transform:scaleX(0.94);transform-origin:100% 0">300</span></div>
<div class="a" style="left:446.40px;top:208.76px;font-size:8.6px;line-height:8.6px;color:#505050;"><span style="display:inline-block;transform:scaleX(0.88);transform-origin:0 0">$</span></div>
<div class="a" style="left:441.50px;top:208.64px;font-size:8.5px;line-height:8.5px;width:50.20px;text-align:right;color:#181818;"><span style="display:inline-block;transform:scaleX(0.94);transform-origin:100% 0">300</span></div>
<div class="a" style="left:500.40px;top:208.76px;font-size:8.6px;line-height:8.6px;color:#505050;"><span style="display:inline-block;transform:scaleX(0.88);transform-origin:0 0">$</span></div>
<div class="a" style="left:495.50px;top:208.64px;font-size:8.5px;line-height:8.5px;width:48.20px;text-align:right;color:#181818;"><span style="display:inline-block;transform:scaleX(0.94);transform-origin:100% 0">300</span></div>
<div class="a" style="left:552.40px;top:208.76px;font-size:8.6px;line-height:8.6px;color:#505050;"><span style="display:inline-block;transform:scaleX(0.88);transform-origin:0 0">$</span></div>
<div class="a" style="left:547.50px;top:208.64px;font-size:8.5px;line-height:8.5px;width:39.90px;text-align:right;color:#181818;"><span style="display:inline-block;transform:scaleX(0.94);transform-origin:100% 0">300</span></div>
<div class="a" style="left:596.10px;top:208.76px;font-size:8.6px;line-height:8.6px;color:#505050;"><span style="display:inline-block;transform:scaleX(0.88);transform-origin:0 0">$</span></div>
<div class="a" style="left:591.20px;top:208.64px;font-size:8.5px;line-height:8.5px;width:39.50px;text-align:right;color:#181818;"><span style="display:inline-block;transform:scaleX(0.94);transform-origin:100% 0">303</span></div>
<div class="a" style="left:639.40px;top:208.76px;font-size:8.6px;line-height:8.6px;color:#505050;"><span style="display:inline-block;transform:scaleX(0.88);transform-origin:0 0">$</span></div>
<div class="a" style="left:634.50px;top:208.64px;font-size:8.5px;line-height:8.5px;width:40.20px;text-align:right;color:#181818;"><span style="display:inline-block;transform:scaleX(0.94);transform-origin:100% 0">303</span></div>
<div class="a" style="left:683.40px;top:208.76px;font-size:8.6px;line-height:8.6px;color:#505050;"><span style="display:inline-block;transform:scaleX(0.88);transform-origin:0 0">$</span></div>
<div class="a" style="left:678.50px;top:208.64px;font-size:8.5px;line-height:8.5px;width:39.20px;text-align:right;color:#181818;"><span style="display:inline-block;transform:scaleX(0.94);transform-origin:100% 0">303</span></div>
<div class="a" style="left:726.40px;top:208.76px;font-size:8.6px;line-height:8.6px;color:#505050;"><span style="display:inline-block;transform:scaleX(0.88);transform-origin:0 0">$</span></div>
<div class="a" style="left:721.50px;top:208.64px;font-size:8.5px;line-height:8.5px;width:39.40px;text-align:right;color:#181818;"><span style="display:inline-block;transform:scaleX(0.94);transform-origin:100% 0">303</span></div>
<div class="a" style="left:769.60px;top:208.76px;font-size:8.6px;line-height:8.6px;color:#505050;"><span style="display:inline-block;transform:scaleX(0.88);transform-origin:0 0">$</span></div>
<div class="a" style="left:764.70px;top:208.64px;font-size:8.5px;line-height:8.5px;width:40.20px;text-align:right;color:#181818;"><span style="display:inline-block;transform:scaleX(0.94);transform-origin:100% 0">303</span></div>
<div class="a" style="left:813.60px;top:208.76px;font-size:8.6px;line-height:8.6px;color:#505050;"><span style="display:inline-block;transform:scaleX(0.88);transform-origin:0 0">$</span></div>
<div class="a" style="left:808.70px;top:208.64px;font-size:8.5px;line-height:8.5px;width:39.70px;text-align:right;color:#181818;"><span style="display:inline-block;transform:scaleX(0.94);transform-origin:100% 0">303</span></div>
<div class="a" style="left:0.00px;top:220.29px;font-size:8px;line-height:8px;width:12.90px;text-align:right;color:#959595;font-style:italic;">8</div>
<div class="a" style="left:17.00px;top:220.22px;font-size:8.2px;line-height:8.2px;color:#111;">Payroll processing service</div>
<div class="a" style="left:313.40px;top:220.08px;font-size:8.6px;line-height:8.6px;color:#505050;"><span style="display:inline-block;transform:scaleX(0.88);transform-origin:0 0">$</span></div>
<div class="a" style="left:308.50px;top:219.96px;font-size:8.5px;line-height:8.5px;width:42.30px;text-align:right;color:#181818;"><span style="display:inline-block;transform:scaleX(0.94);transform-origin:100% 0">300</span></div>
<div class="a" style="left:359.50px;top:220.08px;font-size:8.6px;line-height:8.6px;color:#505050;"><span style="display:inline-block;transform:scaleX(0.88);transform-origin:0 0">$</span></div>
<div class="a" style="left:354.60px;top:219.96px;font-size:8.5px;line-height:8.5px;width:39.90px;text-align:right;color:#181818;"><span style="display:inline-block;transform:scaleX(0.94);transform-origin:100% 0">300</span></div>
<div class="a" style="left:403.20px;top:220.08px;font-size:8.6px;line-height:8.6px;color:#505050;"><span style="display:inline-block;transform:scaleX(0.88);transform-origin:0 0">$</span></div>
<div class="a" style="left:398.30px;top:219.96px;font-size:8.5px;line-height:8.5px;width:39.40px;text-align:right;color:#181818;"><span style="display:inline-block;transform:scaleX(0.94);transform-origin:100% 0">300</span></div>
<div class="a" style="left:446.40px;top:220.08px;font-size:8.6px;line-height:8.6px;color:#505050;"><span style="display:inline-block;transform:scaleX(0.88);transform-origin:0 0">$</span></div>
<div class="a" style="left:441.50px;top:219.96px;font-size:8.5px;line-height:8.5px;width:50.20px;text-align:right;color:#181818;"><span style="display:inline-block;transform:scaleX(0.94);transform-origin:100% 0">300</span></div>
<div class="a" style="left:500.40px;top:220.08px;font-size:8.6px;line-height:8.6px;color:#505050;"><span style="display:inline-block;transform:scaleX(0.88);transform-origin:0 0">$</span></div>
<div class="a" style="left:495.50px;top:219.96px;font-size:8.5px;line-height:8.5px;width:48.20px;text-align:right;color:#181818;"><span style="display:inline-block;transform:scaleX(0.94);transform-origin:100% 0">300</span></div>
<div class="a" style="left:552.40px;top:220.08px;font-size:8.6px;line-height:8.6px;color:#505050;"><span style="display:inline-block;transform:scaleX(0.88);transform-origin:0 0">$</span></div>
<div class="a" style="left:547.50px;top:219.96px;font-size:8.5px;line-height:8.5px;width:39.90px;text-align:right;color:#181818;"><span style="display:inline-block;transform:scaleX(0.94);transform-origin:100% 0">300</span></div>
<div class="a" style="left:596.10px;top:220.08px;font-size:8.6px;line-height:8.6px;color:#505050;"><span style="display:inline-block;transform:scaleX(0.88);transform-origin:0 0">$</span></div>
<div class="a" style="left:591.20px;top:219.96px;font-size:8.5px;line-height:8.5px;width:39.50px;text-align:right;color:#181818;"><span style="display:inline-block;transform:scaleX(0.94);transform-origin:100% 0">303</span></div>
<div class="a" style="left:639.40px;top:220.08px;font-size:8.6px;line-height:8.6px;color:#505050;"><span style="display:inline-block;transform:scaleX(0.88);transform-origin:0 0">$</span></div>
<div class="a" style="left:634.50px;top:219.96px;font-size:8.5px;line-height:8.5px;width:40.20px;text-align:right;color:#181818;"><span style="display:inline-block;transform:scaleX(0.94);transform-origin:100% 0">303</span></div>
<div class="a" style="left:683.40px;top:220.08px;font-size:8.6px;line-height:8.6px;color:#505050;"><span style="display:inline-block;transform:scaleX(0.88);transform-origin:0 0">$</span></div>
<div class="a" style="left:678.50px;top:219.96px;font-size:8.5px;line-height:8.5px;width:39.20px;text-align:right;color:#181818;"><span style="display:inline-block;transform:scaleX(0.94);transform-origin:100% 0">303</span></div>
<div class="a" style="left:726.40px;top:220.08px;font-size:8.6px;line-height:8.6px;color:#505050;"><span style="display:inline-block;transform:scaleX(0.88);transform-origin:0 0">$</span></div>
<div class="a" style="left:721.50px;top:219.96px;font-size:8.5px;line-height:8.5px;width:39.40px;text-align:right;color:#181818;"><span style="display:inline-block;transform:scaleX(0.94);transform-origin:100% 0">303</span></div>
<div class="a" style="left:769.60px;top:220.08px;font-size:8.6px;line-height:8.6px;color:#505050;"><span style="display:inline-block;transform:scaleX(0.88);transform-origin:0 0">$</span></div>
<div class="a" style="left:764.70px;top:219.96px;font-size:8.5px;line-height:8.5px;width:40.20px;text-align:right;color:#181818;"><span style="display:inline-block;transform:scaleX(0.94);transform-origin:100% 0">303</span></div>
<div class="a" style="left:813.60px;top:220.08px;font-size:8.6px;line-height:8.6px;color:#505050;"><span style="display:inline-block;transform:scaleX(0.88);transform-origin:0 0">$</span></div>
<div class="a" style="left:808.70px;top:219.96px;font-size:8.5px;line-height:8.5px;width:39.70px;text-align:right;color:#181818;"><span style="display:inline-block;transform:scaleX(0.94);transform-origin:100% 0">303</span></div>
<div class="a" style="left:0.00px;top:231.61px;font-size:8px;line-height:8px;width:12.90px;text-align:right;color:#959595;font-style:italic;">9</div>
<div class="a" style="left:17.00px;top:231.54px;font-size:8.2px;line-height:8.2px;color:#111;">Quality testing equipment maintenance</div>
<div class="a" style="left:313.40px;top:231.40px;font-size:8.6px;line-height:8.6px;color:#505050;"><span style="display:inline-block;transform:scaleX(0.88);transform-origin:0 0">$</span></div>
<div class="a" style="left:308.50px;top:231.28px;font-size:8.5px;line-height:8.5px;width:42.30px;text-align:right;color:#181818;"><span style="display:inline-block;transform:scaleX(0.94);transform-origin:100% 0">450</span></div>
<div class="a" style="left:359.50px;top:231.40px;font-size:8.6px;line-height:8.6px;color:#505050;"><span style="display:inline-block;transform:scaleX(0.88);transform-origin:0 0">$</span></div>
<div class="a" style="left:354.60px;top:231.28px;font-size:8.5px;line-height:8.5px;width:39.90px;text-align:right;color:#181818;"><span style="display:inline-block;transform:scaleX(0.94);transform-origin:100% 0">450</span></div>
<div class="a" style="left:403.20px;top:231.40px;font-size:8.6px;line-height:8.6px;color:#505050;"><span style="display:inline-block;transform:scaleX(0.88);transform-origin:0 0">$</span></div>
<div class="a" style="left:398.30px;top:231.28px;font-size:8.5px;line-height:8.5px;width:39.40px;text-align:right;color:#181818;"><span style="display:inline-block;transform:scaleX(0.94);transform-origin:100% 0">450</span></div>
<div class="a" style="left:446.40px;top:231.40px;font-size:8.6px;line-height:8.6px;color:#505050;"><span style="display:inline-block;transform:scaleX(0.88);transform-origin:0 0">$</span></div>
<div class="a" style="left:441.50px;top:231.28px;font-size:8.5px;line-height:8.5px;width:50.20px;text-align:right;color:#181818;"><span style="display:inline-block;transform:scaleX(0.94);transform-origin:100% 0">450</span></div>
<div class="a" style="left:500.40px;top:231.40px;font-size:8.6px;line-height:8.6px;color:#505050;"><span style="display:inline-block;transform:scaleX(0.88);transform-origin:0 0">$</span></div>
<div class="a" style="left:495.50px;top:231.28px;font-size:8.5px;line-height:8.5px;width:48.20px;text-align:right;color:#181818;"><span style="display:inline-block;transform:scaleX(0.94);transform-origin:100% 0">450</span></div>
<div class="a" style="left:552.40px;top:231.40px;font-size:8.6px;line-height:8.6px;color:#505050;"><span style="display:inline-block;transform:scaleX(0.88);transform-origin:0 0">$</span></div>
<div class="a" style="left:547.50px;top:231.28px;font-size:8.5px;line-height:8.5px;width:39.90px;text-align:right;color:#181818;"><span style="display:inline-block;transform:scaleX(0.94);transform-origin:100% 0">450</span></div>
<div class="a" style="left:596.10px;top:231.40px;font-size:8.6px;line-height:8.6px;color:#505050;"><span style="display:inline-block;transform:scaleX(0.88);transform-origin:0 0">$</span></div>
<div class="a" style="left:591.20px;top:231.28px;font-size:8.5px;line-height:8.5px;width:39.50px;text-align:right;color:#181818;"><span style="display:inline-block;transform:scaleX(0.94);transform-origin:100% 0">455</span></div>
<div class="a" style="left:639.40px;top:231.40px;font-size:8.6px;line-height:8.6px;color:#505050;"><span style="display:inline-block;transform:scaleX(0.88);transform-origin:0 0">$</span></div>
<div class="a" style="left:634.50px;top:231.28px;font-size:8.5px;line-height:8.5px;width:40.20px;text-align:right;color:#181818;"><span style="display:inline-block;transform:scaleX(0.94);transform-origin:100% 0">455</span></div>
<div class="a" style="left:683.40px;top:231.40px;font-size:8.6px;line-height:8.6px;color:#505050;"><span style="display:inline-block;transform:scaleX(0.88);transform-origin:0 0">$</span></div>
<div class="a" style="left:678.50px;top:231.28px;font-size:8.5px;line-height:8.5px;width:39.20px;text-align:right;color:#181818;"><span style="display:inline-block;transform:scaleX(0.94);transform-origin:100% 0">455</span></div>
<div class="a" style="left:726.40px;top:231.40px;font-size:8.6px;line-height:8.6px;color:#505050;"><span style="display:inline-block;transform:scaleX(0.88);transform-origin:0 0">$</span></div>
<div class="a" style="left:721.50px;top:231.28px;font-size:8.5px;line-height:8.5px;width:39.40px;text-align:right;color:#181818;"><span style="display:inline-block;transform:scaleX(0.94);transform-origin:100% 0">455</span></div>
<div class="a" style="left:769.60px;top:231.40px;font-size:8.6px;line-height:8.6px;color:#505050;"><span style="display:inline-block;transform:scaleX(0.88);transform-origin:0 0">$</span></div>
<div class="a" style="left:764.70px;top:231.28px;font-size:8.5px;line-height:8.5px;width:40.20px;text-align:right;color:#181818;"><span style="display:inline-block;transform:scaleX(0.94);transform-origin:100% 0">455</span></div>
<div class="a" style="left:813.60px;top:231.40px;font-size:8.6px;line-height:8.6px;color:#505050;"><span style="display:inline-block;transform:scaleX(0.88);transform-origin:0 0">$</span></div>
<div class="a" style="left:808.70px;top:231.28px;font-size:8.5px;line-height:8.5px;width:39.70px;text-align:right;color:#181818;"><span style="display:inline-block;transform:scaleX(0.94);transform-origin:100% 0">455</span></div>
<div class="a" style="left:0.00px;top:242.93px;font-size:8px;line-height:8px;width:12.90px;text-align:right;color:#959595;font-style:italic;">10</div>
<div class="a" style="left:17.00px;top:242.86px;font-size:8.2px;line-height:8.2px;color:#111;">Shipping and delivery costs</div>
<div class="a" style="left:313.40px;top:242.72px;font-size:8.6px;line-height:8.6px;color:#505050;"><span style="display:inline-block;transform:scaleX(0.88);transform-origin:0 0">$</span></div>
<div class="a" style="left:308.50px;top:242.60px;font-size:8.5px;line-height:8.5px;width:42.30px;text-align:right;color:#181818;"><span style="display:inline-block;transform:scaleX(0.94);transform-origin:100% 0">500</span></div>
<div class="a" style="left:359.50px;top:242.72px;font-size:8.6px;line-height:8.6px;color:#505050;"><span style="display:inline-block;transform:scaleX(0.88);transform-origin:0 0">$</span></div>
<div class="a" style="left:354.60px;top:242.60px;font-size:8.5px;line-height:8.5px;width:39.90px;text-align:right;color:#181818;"><span style="display:inline-block;transform:scaleX(0.94);transform-origin:100% 0">500</span></div>
<div class="a" style="left:403.20px;top:242.72px;font-size:8.6px;line-height:8.6px;color:#505050;"><span style="display:inline-block;transform:scaleX(0.88);transform-origin:0 0">$</span></div>
<div class="a" style="left:398.30px;top:242.60px;font-size:8.5px;line-height:8.5px;width:39.40px;text-align:right;color:#181818;"><span style="display:inline-block;transform:scaleX(0.94);transform-origin:100% 0">500</span></div>
<div class="a" style="left:446.40px;top:242.72px;font-size:8.6px;line-height:8.6px;color:#505050;"><span style="display:inline-block;transform:scaleX(0.88);transform-origin:0 0">$</span></div>
<div class="a" style="left:441.50px;top:242.60px;font-size:8.5px;line-height:8.5px;width:50.20px;text-align:right;color:#181818;"><span style="display:inline-block;transform:scaleX(0.94);transform-origin:100% 0">500</span></div>
<div class="a" style="left:500.40px;top:242.72px;font-size:8.6px;line-height:8.6px;color:#505050;"><span style="display:inline-block;transform:scaleX(0.88);transform-origin:0 0">$</span></div>
<div class="a" style="left:495.50px;top:242.60px;font-size:8.5px;line-height:8.5px;width:48.20px;text-align:right;color:#181818;"><span style="display:inline-block;transform:scaleX(0.94);transform-origin:100% 0">500</span></div>
<div class="a" style="left:552.40px;top:242.72px;font-size:8.6px;line-height:8.6px;color:#505050;"><span style="display:inline-block;transform:scaleX(0.88);transform-origin:0 0">$</span></div>
<div class="a" style="left:547.50px;top:242.60px;font-size:8.5px;line-height:8.5px;width:39.90px;text-align:right;color:#181818;"><span style="display:inline-block;transform:scaleX(0.94);transform-origin:100% 0">500</span></div>
<div class="a" style="left:596.10px;top:242.72px;font-size:8.6px;line-height:8.6px;color:#505050;"><span style="display:inline-block;transform:scaleX(0.88);transform-origin:0 0">$</span></div>
<div class="a" style="left:591.20px;top:242.60px;font-size:8.5px;line-height:8.5px;width:39.50px;text-align:right;color:#181818;"><span style="display:inline-block;transform:scaleX(0.94);transform-origin:100% 0">505</span></div>
<div class="a" style="left:639.40px;top:242.72px;font-size:8.6px;line-height:8.6px;color:#505050;"><span style="display:inline-block;transform:scaleX(0.88);transform-origin:0 0">$</span></div>
<div class="a" style="left:634.50px;top:242.60px;font-size:8.5px;line-height:8.5px;width:40.20px;text-align:right;color:#181818;"><span style="display:inline-block;transform:scaleX(0.94);transform-origin:100% 0">505</span></div>
<div class="a" style="left:683.40px;top:242.72px;font-size:8.6px;line-height:8.6px;color:#505050;"><span style="display:inline-block;transform:scaleX(0.88);transform-origin:0 0">$</span></div>
<div class="a" style="left:678.50px;top:242.60px;font-size:8.5px;line-height:8.5px;width:39.20px;text-align:right;color:#181818;"><span style="display:inline-block;transform:scaleX(0.94);transform-origin:100% 0">505</span></div>
<div class="a" style="left:726.40px;top:242.72px;font-size:8.6px;line-height:8.6px;color:#505050;"><span style="display:inline-block;transform:scaleX(0.88);transform-origin:0 0">$</span></div>
<div class="a" style="left:721.50px;top:242.60px;font-size:8.5px;line-height:8.5px;width:39.40px;text-align:right;color:#181818;"><span style="display:inline-block;transform:scaleX(0.94);transform-origin:100% 0">505</span></div>
<div class="a" style="left:769.60px;top:242.72px;font-size:8.6px;line-height:8.6px;color:#505050;"><span style="display:inline-block;transform:scaleX(0.88);transform-origin:0 0">$</span></div>
<div class="a" style="left:764.70px;top:242.60px;font-size:8.5px;line-height:8.5px;width:40.20px;text-align:right;color:#181818;"><span style="display:inline-block;transform:scaleX(0.94);transform-origin:100% 0">505</span></div>
<div class="a" style="left:813.60px;top:242.72px;font-size:8.6px;line-height:8.6px;color:#505050;"><span style="display:inline-block;transform:scaleX(0.88);transform-origin:0 0">$</span></div>
<div class="a" style="left:808.70px;top:242.60px;font-size:8.5px;line-height:8.5px;width:39.70px;text-align:right;color:#181818;"><span style="display:inline-block;transform:scaleX(0.94);transform-origin:100% 0">505</span></div>
<div class="a" style="left:0.00px;top:254.25px;font-size:8px;line-height:8px;width:12.90px;text-align:right;color:#959595;font-style:italic;">11</div>
<div class="a" style="left:17.00px;top:254.18px;font-size:8.2px;line-height:8.2px;color:#111;">-</div>
<div class="a" style="left:313.40px;top:254.04px;font-size:8.6px;line-height:8.6px;color:#505050;"><span style="display:inline-block;transform:scaleX(0.88);transform-origin:0 0">$</span></div>
<div class="a" style="left:308.50px;top:253.95px;font-size:8.0px;line-height:8.0px;width:33.70px;text-align:right;color:#181818;">-</div>
<div class="a" style="left:359.50px;top:254.04px;font-size:8.6px;line-height:8.6px;color:#505050;"><span style="display:inline-block;transform:scaleX(0.88);transform-origin:0 0">$</span></div>
<div class="a" style="left:354.60px;top:253.95px;font-size:8.0px;line-height:8.0px;width:31.30px;text-align:right;color:#181818;">-</div>
<div class="a" style="left:403.20px;top:254.04px;font-size:8.6px;line-height:8.6px;color:#505050;"><span style="display:inline-block;transform:scaleX(0.88);transform-origin:0 0">$</span></div>
<div class="a" style="left:398.30px;top:253.95px;font-size:8.0px;line-height:8.0px;width:30.80px;text-align:right;color:#181818;">-</div>
<div class="a" style="left:446.40px;top:254.04px;font-size:8.6px;line-height:8.6px;color:#505050;"><span style="display:inline-block;transform:scaleX(0.88);transform-origin:0 0">$</span></div>
<div class="a" style="left:441.50px;top:253.95px;font-size:8.0px;line-height:8.0px;width:41.60px;text-align:right;color:#181818;">-</div>
<div class="a" style="left:500.40px;top:254.04px;font-size:8.6px;line-height:8.6px;color:#505050;"><span style="display:inline-block;transform:scaleX(0.88);transform-origin:0 0">$</span></div>
<div class="a" style="left:495.50px;top:253.95px;font-size:8.0px;line-height:8.0px;width:39.60px;text-align:right;color:#181818;">-</div>
<div class="a" style="left:552.40px;top:254.04px;font-size:8.6px;line-height:8.6px;color:#505050;"><span style="display:inline-block;transform:scaleX(0.88);transform-origin:0 0">$</span></div>
<div class="a" style="left:547.50px;top:253.95px;font-size:8.0px;line-height:8.0px;width:31.30px;text-align:right;color:#181818;">-</div>
<div class="a" style="left:596.10px;top:254.04px;font-size:8.6px;line-height:8.6px;color:#505050;"><span style="display:inline-block;transform:scaleX(0.88);transform-origin:0 0">$</span></div>
<div class="a" style="left:591.20px;top:253.95px;font-size:8.0px;line-height:8.0px;width:30.90px;text-align:right;color:#181818;">-</div>
<div class="a" style="left:639.40px;top:254.04px;font-size:8.6px;line-height:8.6px;color:#505050;"><span style="display:inline-block;transform:scaleX(0.88);transform-origin:0 0">$</span></div>
<div class="a" style="left:634.50px;top:253.95px;font-size:8.0px;line-height:8.0px;width:31.60px;text-align:right;color:#181818;">-</div>
<div class="a" style="left:683.40px;top:254.04px;font-size:8.6px;line-height:8.6px;color:#505050;"><span style="display:inline-block;transform:scaleX(0.88);transform-origin:0 0">$</span></div>
<div class="a" style="left:678.50px;top:253.95px;font-size:8.0px;line-height:8.0px;width:30.60px;text-align:right;color:#181818;">-</div>
<div class="a" style="left:726.40px;top:254.04px;font-size:8.6px;line-height:8.6px;color:#505050;"><span style="display:inline-block;transform:scaleX(0.88);transform-origin:0 0">$</span></div>
<div class="a" style="left:721.50px;top:253.95px;font-size:8.0px;line-height:8.0px;width:30.80px;text-align:right;color:#181818;">-</div>
<div class="a" style="left:769.60px;top:254.04px;font-size:8.6px;line-height:8.6px;color:#505050;"><span style="display:inline-block;transform:scaleX(0.88);transform-origin:0 0">$</span></div>
<div class="a" style="left:764.70px;top:253.95px;font-size:8.0px;line-height:8.0px;width:31.60px;text-align:right;color:#181818;">-</div>
<div class="a" style="left:813.60px;top:254.04px;font-size:8.6px;line-height:8.6px;color:#505050;"><span style="display:inline-block;transform:scaleX(0.88);transform-origin:0 0">$</span></div>
<div class="a" style="left:808.70px;top:253.95px;font-size:8.0px;line-height:8.0px;width:31.10px;text-align:right;color:#181818;">-</div>
<div class="a" style="left:0.00px;top:265.57px;font-size:8px;line-height:8px;width:12.90px;text-align:right;color:#959595;font-style:italic;">12</div>
<div class="a" style="left:17.00px;top:265.50px;font-size:8.2px;line-height:8.2px;color:#111;">-</div>
<div class="a" style="left:313.40px;top:265.36px;font-size:8.6px;line-height:8.6px;color:#505050;"><span style="display:inline-block;transform:scaleX(0.88);transform-origin:0 0">$</span></div>
<div class="a" style="left:308.50px;top:265.27px;font-size:8.0px;line-height:8.0px;width:33.70px;text-align:right;color:#181818;">-</div>
<div class="a" style="left:359.50px;top:265.36px;font-size:8.6px;line-height:8.6px;color:#505050;"><span style="display:inline-block;transform:scaleX(0.88);transform-origin:0 0">$</span></div>
<div class="a" style="left:354.60px;top:265.27px;font-size:8.0px;line-height:8.0px;width:31.30px;text-align:right;color:#181818;">-</div>
<div class="a" style="left:403.20px;top:265.36px;font-size:8.6px;line-height:8.6px;color:#505050;"><span style="display:inline-block;transform:scaleX(0.88);transform-origin:0 0">$</span></div>
<div class="a" style="left:398.30px;top:265.27px;font-size:8.0px;line-height:8.0px;width:30.80px;text-align:right;color:#181818;">-</div>
<div class="a" style="left:446.40px;top:265.36px;font-size:8.6px;line-height:8.6px;color:#505050;"><span style="display:inline-block;transform:scaleX(0.88);transform-origin:0 0">$</span></div>
<div class="a" style="left:441.50px;top:265.27px;font-size:8.0px;line-height:8.0px;width:41.60px;text-align:right;color:#181818;">-</div>
<div class="a" style="left:500.40px;top:265.36px;font-size:8.6px;line-height:8.6px;color:#505050;"><span style="display:inline-block;transform:scaleX(0.88);transform-origin:0 0">$</span></div>
<div class="a" style="left:495.50px;top:265.27px;font-size:8.0px;line-height:8.0px;width:39.60px;text-align:right;color:#181818;">-</div>
<div class="a" style="left:552.40px;top:265.36px;font-size:8.6px;line-height:8.6px;color:#505050;"><span style="display:inline-block;transform:scaleX(0.88);transform-origin:0 0">$</span></div>
<div class="a" style="left:547.50px;top:265.27px;font-size:8.0px;line-height:8.0px;width:31.30px;text-align:right;color:#181818;">-</div>
<div class="a" style="left:596.10px;top:265.36px;font-size:8.6px;line-height:8.6px;color:#505050;"><span style="display:inline-block;transform:scaleX(0.88);transform-origin:0 0">$</span></div>
<div class="a" style="left:591.20px;top:265.27px;font-size:8.0px;line-height:8.0px;width:30.90px;text-align:right;color:#181818;">-</div>
<div class="a" style="left:639.40px;top:265.36px;font-size:8.6px;line-height:8.6px;color:#505050;"><span style="display:inline-block;transform:scaleX(0.88);transform-origin:0 0">$</span></div>
<div class="a" style="left:634.50px;top:265.27px;font-size:8.0px;line-height:8.0px;width:31.60px;text-align:right;color:#181818;">-</div>
<div class="a" style="left:683.40px;top:265.36px;font-size:8.6px;line-height:8.6px;color:#505050;"><span style="display:inline-block;transform:scaleX(0.88);transform-origin:0 0">$</span></div>
<div class="a" style="left:678.50px;top:265.27px;font-size:8.0px;line-height:8.0px;width:30.60px;text-align:right;color:#181818;">-</div>
<div class="a" style="left:726.40px;top:265.36px;font-size:8.6px;line-height:8.6px;color:#505050;"><span style="display:inline-block;transform:scaleX(0.88);transform-origin:0 0">$</span></div>
<div class="a" style="left:721.50px;top:265.27px;font-size:8.0px;line-height:8.0px;width:30.80px;text-align:right;color:#181818;">-</div>
<div class="a" style="left:769.60px;top:265.36px;font-size:8.6px;line-height:8.6px;color:#505050;"><span style="display:inline-block;transform:scaleX(0.88);transform-origin:0 0">$</span></div>
<div class="a" style="left:764.70px;top:265.27px;font-size:8.0px;line-height:8.0px;width:31.60px;text-align:right;color:#181818;">-</div>
<div class="a" style="left:813.60px;top:265.36px;font-size:8.6px;line-height:8.6px;color:#505050;"><span style="display:inline-block;transform:scaleX(0.88);transform-origin:0 0">$</span></div>
<div class="a" style="left:808.70px;top:265.27px;font-size:8.0px;line-height:8.0px;width:31.10px;text-align:right;color:#181818;">-</div>
<div class="a" style="left:0.00px;top:276.89px;font-size:8px;line-height:8px;width:12.90px;text-align:right;color:#959595;font-style:italic;">13</div>
<div class="a" style="left:17.00px;top:276.82px;font-size:8.2px;line-height:8.2px;color:#111;">-</div>
<div class="a" style="left:313.40px;top:276.68px;font-size:8.6px;line-height:8.6px;color:#505050;"><span style="display:inline-block;transform:scaleX(0.88);transform-origin:0 0">$</span></div>
<div class="a" style="left:308.50px;top:276.59px;font-size:8.0px;line-height:8.0px;width:33.70px;text-align:right;color:#181818;">-</div>
<div class="a" style="left:359.50px;top:276.68px;font-size:8.6px;line-height:8.6px;color:#505050;"><span style="display:inline-block;transform:scaleX(0.88);transform-origin:0 0">$</span></div>
<div class="a" style="left:354.60px;top:276.59px;font-size:8.0px;line-height:8.0px;width:31.30px;text-align:right;color:#181818;">-</div>
<div class="a" style="left:403.20px;top:276.68px;font-size:8.6px;line-height:8.6px;color:#505050;"><span style="display:inline-block;transform:scaleX(0.88);transform-origin:0 0">$</span></div>
<div class="a" style="left:398.30px;top:276.59px;font-size:8.0px;line-height:8.0px;width:30.80px;text-align:right;color:#181818;">-</div>
<div class="a" style="left:446.40px;top:276.68px;font-size:8.6px;line-height:8.6px;color:#505050;"><span style="display:inline-block;transform:scaleX(0.88);transform-origin:0 0">$</span></div>
<div class="a" style="left:441.50px;top:276.59px;font-size:8.0px;line-height:8.0px;width:41.60px;text-align:right;color:#181818;">-</div>
<div class="a" style="left:500.40px;top:276.68px;font-size:8.6px;line-height:8.6px;color:#505050;"><span style="display:inline-block;transform:scaleX(0.88);transform-origin:0 0">$</span></div>
<div class="a" style="left:495.50px;top:276.59px;font-size:8.0px;line-height:8.0px;width:39.60px;text-align:right;color:#181818;">-</div>
<div class="a" style="left:552.40px;top:276.68px;font-size:8.6px;line-height:8.6px;color:#505050;"><span style="display:inline-block;transform:scaleX(0.88);transform-origin:0 0">$</span></div>
<div class="a" style="left:547.50px;top:276.59px;font-size:8.0px;line-height:8.0px;width:31.30px;text-align:right;color:#181818;">-</div>
<div class="a" style="left:596.10px;top:276.68px;font-size:8.6px;line-height:8.6px;color:#505050;"><span style="display:inline-block;transform:scaleX(0.88);transform-origin:0 0">$</span></div>
<div class="a" style="left:591.20px;top:276.59px;font-size:8.0px;line-height:8.0px;width:30.90px;text-align:right;color:#181818;">-</div>
<div class="a" style="left:639.40px;top:276.68px;font-size:8.6px;line-height:8.6px;color:#505050;"><span style="display:inline-block;transform:scaleX(0.88);transform-origin:0 0">$</span></div>
<div class="a" style="left:634.50px;top:276.59px;font-size:8.0px;line-height:8.0px;width:31.60px;text-align:right;color:#181818;">-</div>
<div class="a" style="left:683.40px;top:276.68px;font-size:8.6px;line-height:8.6px;color:#505050;"><span style="display:inline-block;transform:scaleX(0.88);transform-origin:0 0">$</span></div>
<div class="a" style="left:678.50px;top:276.59px;font-size:8.0px;line-height:8.0px;width:30.60px;text-align:right;color:#181818;">-</div>
<div class="a" style="left:726.40px;top:276.68px;font-size:8.6px;line-height:8.6px;color:#505050;"><span style="display:inline-block;transform:scaleX(0.88);transform-origin:0 0">$</span></div>
<div class="a" style="left:721.50px;top:276.59px;font-size:8.0px;line-height:8.0px;width:30.80px;text-align:right;color:#181818;">-</div>
<div class="a" style="left:769.60px;top:276.68px;font-size:8.6px;line-height:8.6px;color:#505050;"><span style="display:inline-block;transform:scaleX(0.88);transform-origin:0 0">$</span></div>
<div class="a" style="left:764.70px;top:276.59px;font-size:8.0px;line-height:8.0px;width:31.60px;text-align:right;color:#181818;">-</div>
<div class="a" style="left:813.60px;top:276.68px;font-size:8.6px;line-height:8.6px;color:#505050;"><span style="display:inline-block;transform:scaleX(0.88);transform-origin:0 0">$</span></div>
<div class="a" style="left:808.70px;top:276.59px;font-size:8.0px;line-height:8.0px;width:31.10px;text-align:right;color:#181818;">-</div>
<div class="a" style="left:0.00px;top:288.21px;font-size:8px;line-height:8px;width:12.90px;text-align:right;color:#959595;font-style:italic;">14</div>
<div class="a" style="left:17.00px;top:288.14px;font-size:8.2px;line-height:8.2px;color:#111;">-</div>
<div class="a" style="left:313.40px;top:288.00px;font-size:8.6px;line-height:8.6px;color:#505050;"><span style="display:inline-block;transform:scaleX(0.88);transform-origin:0 0">$</span></div>
<div class="a" style="left:308.50px;top:287.91px;font-size:8.0px;line-height:8.0px;width:33.70px;text-align:right;color:#181818;">-</div>
<div class="a" style="left:359.50px;top:288.00px;font-size:8.6px;line-height:8.6px;color:#505050;"><span style="display:inline-block;transform:scaleX(0.88);transform-origin:0 0">$</span></div>
<div class="a" style="left:354.60px;top:287.91px;font-size:8.0px;line-height:8.0px;width:31.30px;text-align:right;color:#181818;">-</div>
<div class="a" style="left:403.20px;top:288.00px;font-size:8.6px;line-height:8.6px;color:#505050;"><span style="display:inline-block;transform:scaleX(0.88);transform-origin:0 0">$</span></div>
<div class="a" style="left:398.30px;top:287.91px;font-size:8.0px;line-height:8.0px;width:30.80px;text-align:right;color:#181818;">-</div>
<div class="a" style="left:446.40px;top:288.00px;font-size:8.6px;line-height:8.6px;color:#505050;"><span style="display:inline-block;transform:scaleX(0.88);transform-origin:0 0">$</span></div>
<div class="a" style="left:441.50px;top:287.91px;font-size:8.0px;line-height:8.0px;width:41.60px;text-align:right;color:#181818;">-</div>
<div class="a" style="left:500.40px;top:288.00px;font-size:8.6px;line-height:8.6px;color:#505050;"><span style="display:inline-block;transform:scaleX(0.88);transform-origin:0 0">$</span></div>
<div class="a" style="left:495.50px;top:287.91px;font-size:8.0px;line-height:8.0px;width:39.60px;text-align:right;color:#181818;">-</div>
<div class="a" style="left:552.40px;top:288.00px;font-size:8.6px;line-height:8.6px;color:#505050;"><span style="display:inline-block;transform:scaleX(0.88);transform-origin:0 0">$</span></div>
<div class="a" style="left:547.50px;top:287.91px;font-size:8.0px;line-height:8.0px;width:31.30px;text-align:right;color:#181818;">-</div>
<div class="a" style="left:596.10px;top:288.00px;font-size:8.6px;line-height:8.6px;color:#505050;"><span style="display:inline-block;transform:scaleX(0.88);transform-origin:0 0">$</span></div>
<div class="a" style="left:591.20px;top:287.91px;font-size:8.0px;line-height:8.0px;width:30.90px;text-align:right;color:#181818;">-</div>
<div class="a" style="left:639.40px;top:288.00px;font-size:8.6px;line-height:8.6px;color:#505050;"><span style="display:inline-block;transform:scaleX(0.88);transform-origin:0 0">$</span></div>
<div class="a" style="left:634.50px;top:287.91px;font-size:8.0px;line-height:8.0px;width:31.60px;text-align:right;color:#181818;">-</div>
<div class="a" style="left:683.40px;top:288.00px;font-size:8.6px;line-height:8.6px;color:#505050;"><span style="display:inline-block;transform:scaleX(0.88);transform-origin:0 0">$</span></div>
<div class="a" style="left:678.50px;top:287.91px;font-size:8.0px;line-height:8.0px;width:30.60px;text-align:right;color:#181818;">-</div>
<div class="a" style="left:726.40px;top:288.00px;font-size:8.6px;line-height:8.6px;color:#505050;"><span style="display:inline-block;transform:scaleX(0.88);transform-origin:0 0">$</span></div>
<div class="a" style="left:721.50px;top:287.91px;font-size:8.0px;line-height:8.0px;width:30.80px;text-align:right;color:#181818;">-</div>
<div class="a" style="left:769.60px;top:288.00px;font-size:8.6px;line-height:8.6px;color:#505050;"><span style="display:inline-block;transform:scaleX(0.88);transform-origin:0 0">$</span></div>
<div class="a" style="left:764.70px;top:287.91px;font-size:8.0px;line-height:8.0px;width:31.60px;text-align:right;color:#181818;">-</div>
<div class="a" style="left:813.60px;top:288.00px;font-size:8.6px;line-height:8.6px;color:#505050;"><span style="display:inline-block;transform:scaleX(0.88);transform-origin:0 0">$</span></div>
<div class="a" style="left:808.70px;top:287.91px;font-size:8.0px;line-height:8.0px;width:31.10px;text-align:right;color:#181818;">-</div>
<div class="a" style="left:0.00px;top:299.53px;font-size:8px;line-height:8px;width:12.90px;text-align:right;color:#959595;font-style:italic;">15</div>
<div class="a" style="left:17.00px;top:299.46px;font-size:8.2px;line-height:8.2px;color:#111;">-</div>
<div class="a" style="left:313.40px;top:299.32px;font-size:8.6px;line-height:8.6px;color:#505050;"><span style="display:inline-block;transform:scaleX(0.88);transform-origin:0 0">$</span></div>
<div class="a" style="left:308.50px;top:299.23px;font-size:8.0px;line-height:8.0px;width:33.70px;text-align:right;color:#181818;">-</div>
<div class="a" style="left:359.50px;top:299.32px;font-size:8.6px;line-height:8.6px;color:#505050;"><span style="display:inline-block;transform:scaleX(0.88);transform-origin:0 0">$</span></div>
<div class="a" style="left:354.60px;top:299.23px;font-size:8.0px;line-height:8.0px;width:31.30px;text-align:right;color:#181818;">-</div>
<div class="a" style="left:403.20px;top:299.32px;font-size:8.6px;line-height:8.6px;color:#505050;"><span style="display:inline-block;transform:scaleX(0.88);transform-origin:0 0">$</span></div>
<div class="a" style="left:398.30px;top:299.23px;font-size:8.0px;line-height:8.0px;width:30.80px;text-align:right;color:#181818;">-</div>
<div class="a" style="left:446.40px;top:299.32px;font-size:8.6px;line-height:8.6px;color:#505050;"><span style="display:inline-block;transform:scaleX(0.88);transform-origin:0 0">$</span></div>
<div class="a" style="left:441.50px;top:299.23px;font-size:8.0px;line-height:8.0px;width:41.60px;text-align:right;color:#181818;">-</div>
<div class="a" style="left:500.40px;top:299.32px;font-size:8.6px;line-height:8.6px;color:#505050;"><span style="display:inline-block;transform:scaleX(0.88);transform-origin:0 0">$</span></div>
<div class="a" style="left:495.50px;top:299.23px;font-size:8.0px;line-height:8.0px;width:39.60px;text-align:right;color:#181818;">-</div>
<div class="a" style="left:552.40px;top:299.32px;font-size:8.6px;line-height:8.6px;color:#505050;"><span style="display:inline-block;transform:scaleX(0.88);transform-origin:0 0">$</span></div>
<div class="a" style="left:547.50px;top:299.23px;font-size:8.0px;line-height:8.0px;width:31.30px;text-align:right;color:#181818;">-</div>
<div class="a" style="left:596.10px;top:299.32px;font-size:8.6px;line-height:8.6px;color:#505050;"><span style="display:inline-block;transform:scaleX(0.88);transform-origin:0 0">$</span></div>
<div class="a" style="left:591.20px;top:299.23px;font-size:8.0px;line-height:8.0px;width:30.90px;text-align:right;color:#181818;">-</div>
<div class="a" style="left:639.40px;top:299.32px;font-size:8.6px;line-height:8.6px;color:#505050;"><span style="display:inline-block;transform:scaleX(0.88);transform-origin:0 0">$</span></div>
<div class="a" style="left:634.50px;top:299.23px;font-size:8.0px;line-height:8.0px;width:31.60px;text-align:right;color:#181818;">-</div>
<div class="a" style="left:683.40px;top:299.32px;font-size:8.6px;line-height:8.6px;color:#505050;"><span style="display:inline-block;transform:scaleX(0.88);transform-origin:0 0">$</span></div>
<div class="a" style="left:678.50px;top:299.23px;font-size:8.0px;line-height:8.0px;width:30.60px;text-align:right;color:#181818;">-</div>
<div class="a" style="left:726.40px;top:299.32px;font-size:8.6px;line-height:8.6px;color:#505050;"><span style="display:inline-block;transform:scaleX(0.88);transform-origin:0 0">$</span></div>
<div class="a" style="left:721.50px;top:299.23px;font-size:8.0px;line-height:8.0px;width:30.80px;text-align:right;color:#181818;">-</div>
<div class="a" style="left:769.60px;top:299.32px;font-size:8.6px;line-height:8.6px;color:#505050;"><span style="display:inline-block;transform:scaleX(0.88);transform-origin:0 0">$</span></div>
<div class="a" style="left:764.70px;top:299.23px;font-size:8.0px;line-height:8.0px;width:31.60px;text-align:right;color:#181818;">-</div>
<div class="a" style="left:813.60px;top:299.32px;font-size:8.6px;line-height:8.6px;color:#505050;"><span style="display:inline-block;transform:scaleX(0.88);transform-origin:0 0">$</span></div>
<div class="a" style="left:808.70px;top:299.23px;font-size:8.0px;line-height:8.0px;width:31.10px;text-align:right;color:#181818;">-</div>
<div class="a" style="left:0.00px;top:310.85px;font-size:8px;line-height:8px;width:12.90px;text-align:right;color:#959595;font-style:italic;">16</div>
<div class="a" style="left:17.00px;top:310.78px;font-size:8.2px;line-height:8.2px;color:#111;">-</div>
<div class="a" style="left:313.40px;top:310.64px;font-size:8.6px;line-height:8.6px;color:#505050;"><span style="display:inline-block;transform:scaleX(0.88);transform-origin:0 0">$</span></div>
<div class="a" style="left:308.50px;top:310.55px;font-size:8.0px;line-height:8.0px;width:33.70px;text-align:right;color:#181818;">-</div>
<div class="a" style="left:359.50px;top:310.64px;font-size:8.6px;line-height:8.6px;color:#505050;"><span style="display:inline-block;transform:scaleX(0.88);transform-origin:0 0">$</span></div>
<div class="a" style="left:354.60px;top:310.55px;font-size:8.0px;line-height:8.0px;width:31.30px;text-align:right;color:#181818;">-</div>
<div class="a" style="left:403.20px;top:310.64px;font-size:8.6px;line-height:8.6px;color:#505050;"><span style="display:inline-block;transform:scaleX(0.88);transform-origin:0 0">$</span></div>
<div class="a" style="left:398.30px;top:310.55px;font-size:8.0px;line-height:8.0px;width:30.80px;text-align:right;color:#181818;">-</div>
<div class="a" style="left:446.40px;top:310.64px;font-size:8.6px;line-height:8.6px;color:#505050;"><span style="display:inline-block;transform:scaleX(0.88);transform-origin:0 0">$</span></div>
<div class="a" style="left:441.50px;top:310.55px;font-size:8.0px;line-height:8.0px;width:41.60px;text-align:right;color:#181818;">-</div>
<div class="a" style="left:500.40px;top:310.64px;font-size:8.6px;line-height:8.6px;color:#505050;"><span style="display:inline-block;transform:scaleX(0.88);transform-origin:0 0">$</span></div>
<div class="a" style="left:495.50px;top:310.55px;font-size:8.0px;line-height:8.0px;width:39.60px;text-align:right;color:#181818;">-</div>
<div class="a" style="left:552.40px;top:310.64px;font-size:8.6px;line-height:8.6px;color:#505050;"><span style="display:inline-block;transform:scaleX(0.88);transform-origin:0 0">$</span></div>
<div class="a" style="left:547.50px;top:310.55px;font-size:8.0px;line-height:8.0px;width:31.30px;text-align:right;color:#181818;">-</div>
<div class="a" style="left:596.10px;top:310.64px;font-size:8.6px;line-height:8.6px;color:#505050;"><span style="display:inline-block;transform:scaleX(0.88);transform-origin:0 0">$</span></div>
<div class="a" style="left:591.20px;top:310.55px;font-size:8.0px;line-height:8.0px;width:30.90px;text-align:right;color:#181818;">-</div>
<div class="a" style="left:639.40px;top:310.64px;font-size:8.6px;line-height:8.6px;color:#505050;"><span style="display:inline-block;transform:scaleX(0.88);transform-origin:0 0">$</span></div>
<div class="a" style="left:634.50px;top:310.55px;font-size:8.0px;line-height:8.0px;width:31.60px;text-align:right;color:#181818;">-</div>
<div class="a" style="left:683.40px;top:310.64px;font-size:8.6px;line-height:8.6px;color:#505050;"><span style="display:inline-block;transform:scaleX(0.88);transform-origin:0 0">$</span></div>
<div class="a" style="left:678.50px;top:310.55px;font-size:8.0px;line-height:8.0px;width:30.60px;text-align:right;color:#181818;">-</div>
<div class="a" style="left:726.40px;top:310.64px;font-size:8.6px;line-height:8.6px;color:#505050;"><span style="display:inline-block;transform:scaleX(0.88);transform-origin:0 0">$</span></div>
<div class="a" style="left:721.50px;top:310.55px;font-size:8.0px;line-height:8.0px;width:30.80px;text-align:right;color:#181818;">-</div>
<div class="a" style="left:769.60px;top:310.64px;font-size:8.6px;line-height:8.6px;color:#505050;"><span style="display:inline-block;transform:scaleX(0.88);transform-origin:0 0">$</span></div>
<div class="a" style="left:764.70px;top:310.55px;font-size:8.0px;line-height:8.0px;width:31.60px;text-align:right;color:#181818;">-</div>
<div class="a" style="left:813.60px;top:310.64px;font-size:8.6px;line-height:8.6px;color:#505050;"><span style="display:inline-block;transform:scaleX(0.88);transform-origin:0 0">$</span></div>
<div class="a" style="left:808.70px;top:310.55px;font-size:8.0px;line-height:8.0px;width:31.10px;text-align:right;color:#181818;">-</div>
<div class="a" style="left:0.00px;top:322.17px;font-size:8px;line-height:8px;width:12.90px;text-align:right;color:#959595;font-style:italic;">17</div>
<div class="a" style="left:17.00px;top:322.10px;font-size:8.2px;line-height:8.2px;color:#111;">-</div>
<div class="a" style="left:313.40px;top:321.96px;font-size:8.6px;line-height:8.6px;color:#505050;"><span style="display:inline-block;transform:scaleX(0.88);transform-origin:0 0">$</span></div>
<div class="a" style="left:308.50px;top:321.87px;font-size:8.0px;line-height:8.0px;width:33.70px;text-align:right;color:#181818;">-</div>
<div class="a" style="left:359.50px;top:321.96px;font-size:8.6px;line-height:8.6px;color:#505050;"><span style="display:inline-block;transform:scaleX(0.88);transform-origin:0 0">$</span></div>
<div class="a" style="left:354.60px;top:321.87px;font-size:8.0px;line-height:8.0px;width:31.30px;text-align:right;color:#181818;">-</div>
<div class="a" style="left:403.20px;top:321.96px;font-size:8.6px;line-height:8.6px;color:#505050;"><span style="display:inline-block;transform:scaleX(0.88);transform-origin:0 0">$</span></div>
<div class="a" style="left:398.30px;top:321.87px;font-size:8.0px;line-height:8.0px;width:30.80px;text-align:right;color:#181818;">-</div>
<div class="a" style="left:446.40px;top:321.96px;font-size:8.6px;line-height:8.6px;color:#505050;"><span style="display:inline-block;transform:scaleX(0.88);transform-origin:0 0">$</span></div>
<div class="a" style="left:441.50px;top:321.87px;font-size:8.0px;line-height:8.0px;width:41.60px;text-align:right;color:#181818;">-</div>
<div class="a" style="left:500.40px;top:321.96px;font-size:8.6px;line-height:8.6px;color:#505050;"><span style="display:inline-block;transform:scaleX(0.88);transform-origin:0 0">$</span></div>
<div class="a" style="left:495.50px;top:321.87px;font-size:8.0px;line-height:8.0px;width:39.60px;text-align:right;color:#181818;">-</div>
<div class="a" style="left:552.40px;top:321.96px;font-size:8.6px;line-height:8.6px;color:#505050;"><span style="display:inline-block;transform:scaleX(0.88);transform-origin:0 0">$</span></div>
<div class="a" style="left:547.50px;top:321.87px;font-size:8.0px;line-height:8.0px;width:31.30px;text-align:right;color:#181818;">-</div>
<div class="a" style="left:596.10px;top:321.96px;font-size:8.6px;line-height:8.6px;color:#505050;"><span style="display:inline-block;transform:scaleX(0.88);transform-origin:0 0">$</span></div>
<div class="a" style="left:591.20px;top:321.87px;font-size:8.0px;line-height:8.0px;width:30.90px;text-align:right;color:#181818;">-</div>
<div class="a" style="left:639.40px;top:321.96px;font-size:8.6px;line-height:8.6px;color:#505050;"><span style="display:inline-block;transform:scaleX(0.88);transform-origin:0 0">$</span></div>
<div class="a" style="left:634.50px;top:321.87px;font-size:8.0px;line-height:8.0px;width:31.60px;text-align:right;color:#181818;">-</div>
<div class="a" style="left:683.40px;top:321.96px;font-size:8.6px;line-height:8.6px;color:#505050;"><span style="display:inline-block;transform:scaleX(0.88);transform-origin:0 0">$</span></div>
<div class="a" style="left:678.50px;top:321.87px;font-size:8.0px;line-height:8.0px;width:30.60px;text-align:right;color:#181818;">-</div>
<div class="a" style="left:726.40px;top:321.96px;font-size:8.6px;line-height:8.6px;color:#505050;"><span style="display:inline-block;transform:scaleX(0.88);transform-origin:0 0">$</span></div>
<div class="a" style="left:721.50px;top:321.87px;font-size:8.0px;line-height:8.0px;width:30.80px;text-align:right;color:#181818;">-</div>
<div class="a" style="left:769.60px;top:321.96px;font-size:8.6px;line-height:8.6px;color:#505050;"><span style="display:inline-block;transform:scaleX(0.88);transform-origin:0 0">$</span></div>
<div class="a" style="left:764.70px;top:321.87px;font-size:8.0px;line-height:8.0px;width:31.60px;text-align:right;color:#181818;">-</div>
<div class="a" style="left:813.60px;top:321.96px;font-size:8.6px;line-height:8.6px;color:#505050;"><span style="display:inline-block;transform:scaleX(0.88);transform-origin:0 0">$</span></div>
<div class="a" style="left:808.70px;top:321.87px;font-size:8.0px;line-height:8.0px;width:31.10px;text-align:right;color:#181818;">-</div>
<div class="a" style="left:0.00px;top:333.49px;font-size:8px;line-height:8px;width:12.90px;text-align:right;color:#959595;font-style:italic;">18</div>
<div class="a" style="left:17.00px;top:333.42px;font-size:8.2px;line-height:8.2px;color:#111;">-</div>
<div class="a" style="left:313.40px;top:333.28px;font-size:8.6px;line-height:8.6px;color:#505050;"><span style="display:inline-block;transform:scaleX(0.88);transform-origin:0 0">$</span></div>
<div class="a" style="left:308.50px;top:333.19px;font-size:8.0px;line-height:8.0px;width:33.70px;text-align:right;color:#181818;">-</div>
<div class="a" style="left:359.50px;top:333.28px;font-size:8.6px;line-height:8.6px;color:#505050;"><span style="display:inline-block;transform:scaleX(0.88);transform-origin:0 0">$</span></div>
<div class="a" style="left:354.60px;top:333.19px;font-size:8.0px;line-height:8.0px;width:31.30px;text-align:right;color:#181818;">-</div>
<div class="a" style="left:403.20px;top:333.28px;font-size:8.6px;line-height:8.6px;color:#505050;"><span style="display:inline-block;transform:scaleX(0.88);transform-origin:0 0">$</span></div>
<div class="a" style="left:398.30px;top:333.19px;font-size:8.0px;line-height:8.0px;width:30.80px;text-align:right;color:#181818;">-</div>
<div class="a" style="left:446.40px;top:333.28px;font-size:8.6px;line-height:8.6px;color:#505050;"><span style="display:inline-block;transform:scaleX(0.88);transform-origin:0 0">$</span></div>
<div class="a" style="left:441.50px;top:333.19px;font-size:8.0px;line-height:8.0px;width:41.60px;text-align:right;color:#181818;">-</div>
<div class="a" style="left:500.40px;top:333.28px;font-size:8.6px;line-height:8.6px;color:#505050;"><span style="display:inline-block;transform:scaleX(0.88);transform-origin:0 0">$</span></div>
<div class="a" style="left:495.50px;top:333.19px;font-size:8.0px;line-height:8.0px;width:39.60px;text-align:right;color:#181818;">-</div>
<div class="a" style="left:552.40px;top:333.28px;font-size:8.6px;line-height:8.6px;color:#505050;"><span style="display:inline-block;transform:scaleX(0.88);transform-origin:0 0">$</span></div>
<div class="a" style="left:547.50px;top:333.19px;font-size:8.0px;line-height:8.0px;width:31.30px;text-align:right;color:#181818;">-</div>
<div class="a" style="left:596.10px;top:333.28px;font-size:8.6px;line-height:8.6px;color:#505050;"><span style="display:inline-block;transform:scaleX(0.88);transform-origin:0 0">$</span></div>
<div class="a" style="left:591.20px;top:333.19px;font-size:8.0px;line-height:8.0px;width:30.90px;text-align:right;color:#181818;">-</div>
<div class="a" style="left:639.40px;top:333.28px;font-size:8.6px;line-height:8.6px;color:#505050;"><span style="display:inline-block;transform:scaleX(0.88);transform-origin:0 0">$</span></div>
<div class="a" style="left:634.50px;top:333.19px;font-size:8.0px;line-height:8.0px;width:31.60px;text-align:right;color:#181818;">-</div>
<div class="a" style="left:683.40px;top:333.28px;font-size:8.6px;line-height:8.6px;color:#505050;"><span style="display:inline-block;transform:scaleX(0.88);transform-origin:0 0">$</span></div>
<div class="a" style="left:678.50px;top:333.19px;font-size:8.0px;line-height:8.0px;width:30.60px;text-align:right;color:#181818;">-</div>
<div class="a" style="left:726.40px;top:333.28px;font-size:8.6px;line-height:8.6px;color:#505050;"><span style="display:inline-block;transform:scaleX(0.88);transform-origin:0 0">$</span></div>
<div class="a" style="left:721.50px;top:333.19px;font-size:8.0px;line-height:8.0px;width:30.80px;text-align:right;color:#181818;">-</div>
<div class="a" style="left:769.60px;top:333.28px;font-size:8.6px;line-height:8.6px;color:#505050;"><span style="display:inline-block;transform:scaleX(0.88);transform-origin:0 0">$</span></div>
<div class="a" style="left:764.70px;top:333.19px;font-size:8.0px;line-height:8.0px;width:31.60px;text-align:right;color:#181818;">-</div>
<div class="a" style="left:813.60px;top:333.28px;font-size:8.6px;line-height:8.6px;color:#505050;"><span style="display:inline-block;transform:scaleX(0.88);transform-origin:0 0">$</span></div>
<div class="a" style="left:808.70px;top:333.19px;font-size:8.0px;line-height:8.0px;width:31.10px;text-align:right;color:#181818;">-</div>
<div class="a" style="left:0.00px;top:344.81px;font-size:8px;line-height:8px;width:12.90px;text-align:right;color:#959595;font-style:italic;">19</div>
<div class="a" style="left:17.00px;top:344.74px;font-size:8.2px;line-height:8.2px;color:#111;">-</div>
<div class="a" style="left:313.40px;top:344.60px;font-size:8.6px;line-height:8.6px;color:#505050;"><span style="display:inline-block;transform:scaleX(0.88);transform-origin:0 0">$</span></div>
<div class="a" style="left:308.50px;top:344.51px;font-size:8.0px;line-height:8.0px;width:33.70px;text-align:right;color:#181818;">-</div>
<div class="a" style="left:359.50px;top:344.60px;font-size:8.6px;line-height:8.6px;color:#505050;"><span style="display:inline-block;transform:scaleX(0.88);transform-origin:0 0">$</span></div>
<div class="a" style="left:354.60px;top:344.51px;font-size:8.0px;line-height:8.0px;width:31.30px;text-align:right;color:#181818;">-</div>
<div class="a" style="left:403.20px;top:344.60px;font-size:8.6px;line-height:8.6px;color:#505050;"><span style="display:inline-block;transform:scaleX(0.88);transform-origin:0 0">$</span></div>
<div class="a" style="left:398.30px;top:344.51px;font-size:8.0px;line-height:8.0px;width:30.80px;text-align:right;color:#181818;">-</div>
<div class="a" style="left:446.40px;top:344.60px;font-size:8.6px;line-height:8.6px;color:#505050;"><span style="display:inline-block;transform:scaleX(0.88);transform-origin:0 0">$</span></div>
<div class="a" style="left:441.50px;top:344.51px;font-size:8.0px;line-height:8.0px;width:41.60px;text-align:right;color:#181818;">-</div>
<div class="a" style="left:500.40px;top:344.60px;font-size:8.6px;line-height:8.6px;color:#505050;"><span style="display:inline-block;transform:scaleX(0.88);transform-origin:0 0">$</span></div>
<div class="a" style="left:495.50px;top:344.51px;font-size:8.0px;line-height:8.0px;width:39.60px;text-align:right;color:#181818;">-</div>
<div class="a" style="left:552.40px;top:344.60px;font-size:8.6px;line-height:8.6px;color:#505050;"><span style="display:inline-block;transform:scaleX(0.88);transform-origin:0 0">$</span></div>
<div class="a" style="left:547.50px;top:344.51px;font-size:8.0px;line-height:8.0px;width:31.30px;text-align:right;color:#181818;">-</div>
<div class="a" style="left:596.10px;top:344.60px;font-size:8.6px;line-height:8.6px;color:#505050;"><span style="display:inline-block;transform:scaleX(0.88);transform-origin:0 0">$</span></div>
<div class="a" style="left:591.20px;top:344.51px;font-size:8.0px;line-height:8.0px;width:30.90px;text-align:right;color:#181818;">-</div>
<div class="a" style="left:639.40px;top:344.60px;font-size:8.6px;line-height:8.6px;color:#505050;"><span style="display:inline-block;transform:scaleX(0.88);transform-origin:0 0">$</span></div>
<div class="a" style="left:634.50px;top:344.51px;font-size:8.0px;line-height:8.0px;width:31.60px;text-align:right;color:#181818;">-</div>
<div class="a" style="left:683.40px;top:344.60px;font-size:8.6px;line-height:8.6px;color:#505050;"><span style="display:inline-block;transform:scaleX(0.88);transform-origin:0 0">$</span></div>
<div class="a" style="left:678.50px;top:344.51px;font-size:8.0px;line-height:8.0px;width:30.60px;text-align:right;color:#181818;">-</div>
<div class="a" style="left:726.40px;top:344.60px;font-size:8.6px;line-height:8.6px;color:#505050;"><span style="display:inline-block;transform:scaleX(0.88);transform-origin:0 0">$</span></div>
<div class="a" style="left:721.50px;top:344.51px;font-size:8.0px;line-height:8.0px;width:30.80px;text-align:right;color:#181818;">-</div>
<div class="a" style="left:769.60px;top:344.60px;font-size:8.6px;line-height:8.6px;color:#505050;"><span style="display:inline-block;transform:scaleX(0.88);transform-origin:0 0">$</span></div>
<div class="a" style="left:764.70px;top:344.51px;font-size:8.0px;line-height:8.0px;width:31.60px;text-align:right;color:#181818;">-</div>
<div class="a" style="left:813.60px;top:344.60px;font-size:8.6px;line-height:8.6px;color:#505050;"><span style="display:inline-block;transform:scaleX(0.88);transform-origin:0 0">$</span></div>
<div class="a" style="left:808.70px;top:344.51px;font-size:8.0px;line-height:8.0px;width:31.10px;text-align:right;color:#181818;">-</div>
<div class="a" style="left:0.00px;top:356.13px;font-size:8px;line-height:8px;width:12.90px;text-align:right;color:#959595;font-style:italic;">20</div>
<div class="a" style="left:17.00px;top:356.06px;font-size:8.2px;line-height:8.2px;color:#111;">-</div>
<div class="a" style="left:313.40px;top:355.92px;font-size:8.6px;line-height:8.6px;color:#505050;"><span style="display:inline-block;transform:scaleX(0.88);transform-origin:0 0">$</span></div>
<div class="a" style="left:308.50px;top:355.83px;font-size:8.0px;line-height:8.0px;width:33.70px;text-align:right;color:#181818;">-</div>
<div class="a" style="left:359.50px;top:355.92px;font-size:8.6px;line-height:8.6px;color:#505050;"><span style="display:inline-block;transform:scaleX(0.88);transform-origin:0 0">$</span></div>
<div class="a" style="left:354.60px;top:355.83px;font-size:8.0px;line-height:8.0px;width:31.30px;text-align:right;color:#181818;">-</div>
<div class="a" style="left:403.20px;top:355.92px;font-size:8.6px;line-height:8.6px;color:#505050;"><span style="display:inline-block;transform:scaleX(0.88);transform-origin:0 0">$</span></div>
<div class="a" style="left:398.30px;top:355.83px;font-size:8.0px;line-height:8.0px;width:30.80px;text-align:right;color:#181818;">-</div>
<div class="a" style="left:446.40px;top:355.92px;font-size:8.6px;line-height:8.6px;color:#505050;"><span style="display:inline-block;transform:scaleX(0.88);transform-origin:0 0">$</span></div>
<div class="a" style="left:441.50px;top:355.83px;font-size:8.0px;line-height:8.0px;width:41.60px;text-align:right;color:#181818;">-</div>
<div class="a" style="left:500.40px;top:355.92px;font-size:8.6px;line-height:8.6px;color:#505050;"><span style="display:inline-block;transform:scaleX(0.88);transform-origin:0 0">$</span></div>
<div class="a" style="left:495.50px;top:355.83px;font-size:8.0px;line-height:8.0px;width:39.60px;text-align:right;color:#181818;">-</div>
<div class="a" style="left:552.40px;top:355.92px;font-size:8.6px;line-height:8.6px;color:#505050;"><span style="display:inline-block;transform:scaleX(0.88);transform-origin:0 0">$</span></div>
<div class="a" style="left:547.50px;top:355.83px;font-size:8.0px;line-height:8.0px;width:31.30px;text-align:right;color:#181818;">-</div>
<div class="a" style="left:596.10px;top:355.92px;font-size:8.6px;line-height:8.6px;color:#505050;"><span style="display:inline-block;transform:scaleX(0.88);transform-origin:0 0">$</span></div>
<div class="a" style="left:591.20px;top:355.83px;font-size:8.0px;line-height:8.0px;width:30.90px;text-align:right;color:#181818;">-</div>
<div class="a" style="left:639.40px;top:355.92px;font-size:8.6px;line-height:8.6px;color:#505050;"><span style="display:inline-block;transform:scaleX(0.88);transform-origin:0 0">$</span></div>
<div class="a" style="left:634.50px;top:355.83px;font-size:8.0px;line-height:8.0px;width:31.60px;text-align:right;color:#181818;">-</div>
<div class="a" style="left:683.40px;top:355.92px;font-size:8.6px;line-height:8.6px;color:#505050;"><span style="display:inline-block;transform:scaleX(0.88);transform-origin:0 0">$</span></div>
<div class="a" style="left:678.50px;top:355.83px;font-size:8.0px;line-height:8.0px;width:30.60px;text-align:right;color:#181818;">-</div>
<div class="a" style="left:726.40px;top:355.92px;font-size:8.6px;line-height:8.6px;color:#505050;"><span style="display:inline-block;transform:scaleX(0.88);transform-origin:0 0">$</span></div>
<div class="a" style="left:721.50px;top:355.83px;font-size:8.0px;line-height:8.0px;width:30.80px;text-align:right;color:#181818;">-</div>
<div class="a" style="left:769.60px;top:355.92px;font-size:8.6px;line-height:8.6px;color:#505050;"><span style="display:inline-block;transform:scaleX(0.88);transform-origin:0 0">$</span></div>
<div class="a" style="left:764.70px;top:355.83px;font-size:8.0px;line-height:8.0px;width:31.60px;text-align:right;color:#181818;">-</div>
<div class="a" style="left:813.60px;top:355.92px;font-size:8.6px;line-height:8.6px;color:#505050;"><span style="display:inline-block;transform:scaleX(0.88);transform-origin:0 0">$</span></div>
<div class="a" style="left:808.70px;top:355.83px;font-size:8.0px;line-height:8.0px;width:31.10px;text-align:right;color:#181818;">-</div>
<div class="a" style="left:17.00px;top:377.84px;font-size:8.5px;line-height:8.5px;font-weight:bold;color:#1a1a1a;"><span style="display:inline-block;transform:scaleX(0.86);transform-origin:0 0">Variable Expenses</span></div>
<div class="a" style="left:0.00px;top:390.09px;font-size:8px;line-height:8px;width:12.90px;text-align:right;color:#959595;font-style:italic;">2</div>
<div class="a" style="left:17.00px;top:390.02px;font-size:8.2px;line-height:8.2px;color:#111;">Vehicle Maintenance</div>
<div class="a" style="left:313.40px;top:389.88px;font-size:8.6px;line-height:8.6px;color:#505050;"><span style="display:inline-block;transform:scaleX(0.88);transform-origin:0 0">$</span></div>
<div class="a" style="left:308.50px;top:389.76px;font-size:8.5px;line-height:8.5px;width:42.30px;text-align:right;color:#181818;"><span style="display:inline-block;transform:scaleX(0.94);transform-origin:100% 0">4,764</span></div>
<div class="a" style="left:359.50px;top:389.88px;font-size:8.6px;line-height:8.6px;color:#505050;"><span style="display:inline-block;transform:scaleX(0.88);transform-origin:0 0">$</span></div>
<div class="a" style="left:354.60px;top:389.76px;font-size:8.5px;line-height:8.5px;width:39.90px;text-align:right;color:#181818;"><span style="display:inline-block;transform:scaleX(0.94);transform-origin:100% 0">4,859</span></div>
<div class="a" style="left:403.20px;top:389.88px;font-size:8.6px;line-height:8.6px;color:#505050;"><span style="display:inline-block;transform:scaleX(0.88);transform-origin:0 0">$</span></div>
<div class="a" style="left:398.30px;top:389.76px;font-size:8.5px;line-height:8.5px;width:39.40px;text-align:right;color:#181818;"><span style="display:inline-block;transform:scaleX(0.94);transform-origin:100% 0">4,957</span></div>
<div class="a" style="left:446.40px;top:389.88px;font-size:8.6px;line-height:8.6px;color:#505050;"><span style="display:inline-block;transform:scaleX(0.88);transform-origin:0 0">$</span></div>
<div class="a" style="left:441.50px;top:389.76px;font-size:8.5px;line-height:8.5px;width:50.20px;text-align:right;color:#181818;"><span style="display:inline-block;transform:scaleX(0.94);transform-origin:100% 0">5,056</span></div>
<div class="a" style="left:500.40px;top:389.88px;font-size:8.6px;line-height:8.6px;color:#505050;"><span style="display:inline-block;transform:scaleX(0.88);transform-origin:0 0">$</span></div>
<div class="a" style="left:495.50px;top:389.76px;font-size:8.5px;line-height:8.5px;width:48.20px;text-align:right;color:#181818;"><span style="display:inline-block;transform:scaleX(0.94);transform-origin:100% 0">5,157</span></div>
<div class="a" style="left:552.40px;top:389.88px;font-size:8.6px;line-height:8.6px;color:#505050;"><span style="display:inline-block;transform:scaleX(0.88);transform-origin:0 0">$</span></div>
<div class="a" style="left:547.50px;top:389.76px;font-size:8.5px;line-height:8.5px;width:39.90px;text-align:right;color:#181818;"><span style="display:inline-block;transform:scaleX(0.94);transform-origin:100% 0">5,260</span></div>
<div class="a" style="left:596.10px;top:389.88px;font-size:8.6px;line-height:8.6px;color:#505050;"><span style="display:inline-block;transform:scaleX(0.88);transform-origin:0 0">$</span></div>
<div class="a" style="left:591.20px;top:389.76px;font-size:8.5px;line-height:8.5px;width:39.50px;text-align:right;color:#181818;"><span style="display:inline-block;transform:scaleX(0.94);transform-origin:100% 0">5,446</span></div>
<div class="a" style="left:639.40px;top:389.88px;font-size:8.6px;line-height:8.6px;color:#505050;"><span style="display:inline-block;transform:scaleX(0.88);transform-origin:0 0">$</span></div>
<div class="a" style="left:634.50px;top:389.76px;font-size:8.5px;line-height:8.5px;width:40.20px;text-align:right;color:#181818;"><span style="display:inline-block;transform:scaleX(0.94);transform-origin:100% 0">5,555</span></div>
<div class="a" style="left:683.40px;top:389.88px;font-size:8.6px;line-height:8.6px;color:#505050;"><span style="display:inline-block;transform:scaleX(0.88);transform-origin:0 0">$</span></div>
<div class="a" style="left:678.50px;top:389.76px;font-size:8.5px;line-height:8.5px;width:39.20px;text-align:right;color:#181818;"><span style="display:inline-block;transform:scaleX(0.94);transform-origin:100% 0">5,666</span></div>
<div class="a" style="left:726.40px;top:389.88px;font-size:8.6px;line-height:8.6px;color:#505050;"><span style="display:inline-block;transform:scaleX(0.88);transform-origin:0 0">$</span></div>
<div class="a" style="left:721.50px;top:389.76px;font-size:8.5px;line-height:8.5px;width:39.40px;text-align:right;color:#181818;"><span style="display:inline-block;transform:scaleX(0.94);transform-origin:100% 0">5,779</span></div>
<div class="a" style="left:769.60px;top:389.88px;font-size:8.6px;line-height:8.6px;color:#505050;"><span style="display:inline-block;transform:scaleX(0.88);transform-origin:0 0">$</span></div>
<div class="a" style="left:764.70px;top:389.76px;font-size:8.5px;line-height:8.5px;width:40.20px;text-align:right;color:#181818;"><span style="display:inline-block;transform:scaleX(0.94);transform-origin:100% 0">5,895</span></div>
<div class="a" style="left:813.60px;top:389.88px;font-size:8.6px;line-height:8.6px;color:#505050;"><span style="display:inline-block;transform:scaleX(0.88);transform-origin:0 0">$</span></div>
<div class="a" style="left:808.70px;top:389.76px;font-size:8.5px;line-height:8.5px;width:39.70px;text-align:right;color:#181818;"><span style="display:inline-block;transform:scaleX(0.94);transform-origin:100% 0">6,013</span></div>
<div class="a" style="left:0.00px;top:401.41px;font-size:8px;line-height:8px;width:12.90px;text-align:right;color:#959595;font-style:italic;">3</div>
<div class="a" style="left:17.00px;top:401.34px;font-size:8.2px;line-height:8.2px;color:#111;">Customer Support Call Center Costs</div>
<div class="a" style="left:313.40px;top:401.20px;font-size:8.6px;line-height:8.6px;color:#505050;"><span style="display:inline-block;transform:scaleX(0.88);transform-origin:0 0">$</span></div>
<div class="a" style="left:308.50px;top:401.11px;font-size:8.0px;line-height:8.0px;width:33.70px;text-align:right;color:#181818;">-</div>
<div class="a" style="left:359.50px;top:401.20px;font-size:8.6px;line-height:8.6px;color:#505050;"><span style="display:inline-block;transform:scaleX(0.88);transform-origin:0 0">$</span></div>
<div class="a" style="left:354.60px;top:401.08px;font-size:8.5px;line-height:8.5px;width:39.90px;text-align:right;color:#181818;"><span style="display:inline-block;transform:scaleX(0.94);transform-origin:100% 0">4,859</span></div>
<div class="a" style="left:403.20px;top:401.20px;font-size:8.6px;line-height:8.6px;color:#505050;"><span style="display:inline-block;transform:scaleX(0.88);transform-origin:0 0">$</span></div>
<div class="a" style="left:398.30px;top:401.08px;font-size:8.5px;line-height:8.5px;width:39.40px;text-align:right;color:#181818;"><span style="display:inline-block;transform:scaleX(0.94);transform-origin:100% 0">4,957</span></div>
<div class="a" style="left:446.40px;top:401.20px;font-size:8.6px;line-height:8.6px;color:#505050;"><span style="display:inline-block;transform:scaleX(0.88);transform-origin:0 0">$</span></div>
<div class="a" style="left:441.50px;top:401.08px;font-size:8.5px;line-height:8.5px;width:50.20px;text-align:right;color:#181818;"><span style="display:inline-block;transform:scaleX(0.94);transform-origin:100% 0">5,056</span></div>
<div class="a" style="left:500.40px;top:401.20px;font-size:8.6px;line-height:8.6px;color:#505050;"><span style="display:inline-block;transform:scaleX(0.88);transform-origin:0 0">$</span></div>
<div class="a" style="left:495.50px;top:401.08px;font-size:8.5px;line-height:8.5px;width:48.20px;text-align:right;color:#181818;"><span style="display:inline-block;transform:scaleX(0.94);transform-origin:100% 0">5,157</span></div>
<div class="a" style="left:552.40px;top:401.20px;font-size:8.6px;line-height:8.6px;color:#505050;"><span style="display:inline-block;transform:scaleX(0.88);transform-origin:0 0">$</span></div>
<div class="a" style="left:547.50px;top:401.08px;font-size:8.5px;line-height:8.5px;width:39.90px;text-align:right;color:#181818;"><span style="display:inline-block;transform:scaleX(0.94);transform-origin:100% 0">5,260</span></div>
<div class="a" style="left:596.10px;top:401.20px;font-size:8.6px;line-height:8.6px;color:#505050;"><span style="display:inline-block;transform:scaleX(0.88);transform-origin:0 0">$</span></div>
<div class="a" style="left:591.20px;top:401.08px;font-size:8.5px;line-height:8.5px;width:39.50px;text-align:right;color:#181818;"><span style="display:inline-block;transform:scaleX(0.94);transform-origin:100% 0">5,446</span></div>
<div class="a" style="left:639.40px;top:401.20px;font-size:8.6px;line-height:8.6px;color:#505050;"><span style="display:inline-block;transform:scaleX(0.88);transform-origin:0 0">$</span></div>
<div class="a" style="left:634.50px;top:401.08px;font-size:8.5px;line-height:8.5px;width:40.20px;text-align:right;color:#181818;"><span style="display:inline-block;transform:scaleX(0.94);transform-origin:100% 0">5,555</span></div>
<div class="a" style="left:683.40px;top:401.20px;font-size:8.6px;line-height:8.6px;color:#505050;"><span style="display:inline-block;transform:scaleX(0.88);transform-origin:0 0">$</span></div>
<div class="a" style="left:678.50px;top:401.08px;font-size:8.5px;line-height:8.5px;width:39.20px;text-align:right;color:#181818;"><span style="display:inline-block;transform:scaleX(0.94);transform-origin:100% 0">5,666</span></div>
<div class="a" style="left:726.40px;top:401.20px;font-size:8.6px;line-height:8.6px;color:#505050;"><span style="display:inline-block;transform:scaleX(0.88);transform-origin:0 0">$</span></div>
<div class="a" style="left:721.50px;top:401.08px;font-size:8.5px;line-height:8.5px;width:39.40px;text-align:right;color:#181818;"><span style="display:inline-block;transform:scaleX(0.94);transform-origin:100% 0">5,779</span></div>
<div class="a" style="left:769.60px;top:401.20px;font-size:8.6px;line-height:8.6px;color:#505050;"><span style="display:inline-block;transform:scaleX(0.88);transform-origin:0 0">$</span></div>
<div class="a" style="left:764.70px;top:401.08px;font-size:8.5px;line-height:8.5px;width:40.20px;text-align:right;color:#181818;"><span style="display:inline-block;transform:scaleX(0.94);transform-origin:100% 0">5,895</span></div>
<div class="a" style="left:813.60px;top:401.20px;font-size:8.6px;line-height:8.6px;color:#505050;"><span style="display:inline-block;transform:scaleX(0.88);transform-origin:0 0">$</span></div>
<div class="a" style="left:808.70px;top:401.08px;font-size:8.5px;line-height:8.5px;width:39.70px;text-align:right;color:#181818;"><span style="display:inline-block;transform:scaleX(0.94);transform-origin:100% 0">6,013</span></div>
<div class="a" style="left:0.00px;top:412.73px;font-size:8px;line-height:8px;width:12.90px;text-align:right;color:#959595;font-style:italic;">4</div>
<div class="a" style="left:17.00px;top:412.66px;font-size:8.2px;line-height:8.2px;color:#111;">Others</div>
<div class="a" style="left:313.40px;top:412.52px;font-size:8.6px;line-height:8.6px;color:#505050;"><span style="display:inline-block;transform:scaleX(0.88);transform-origin:0 0">$</span></div>
<div class="a" style="left:308.50px;top:412.43px;font-size:8.0px;line-height:8.0px;width:33.70px;text-align:right;color:#181818;">-</div>
<div class="a" style="left:359.50px;top:412.52px;font-size:8.6px;line-height:8.6px;color:#505050;"><span style="display:inline-block;transform:scaleX(0.88);transform-origin:0 0">$</span></div>
<div class="a" style="left:354.60px;top:412.40px;font-size:8.5px;line-height:8.5px;width:39.90px;text-align:right;color:#181818;"><span style="display:inline-block;transform:scaleX(0.94);transform-origin:100% 0">4,859</span></div>
<div class="a" style="left:403.20px;top:412.52px;font-size:8.6px;line-height:8.6px;color:#505050;"><span style="display:inline-block;transform:scaleX(0.88);transform-origin:0 0">$</span></div>
<div class="a" style="left:398.30px;top:412.40px;font-size:8.5px;line-height:8.5px;width:39.40px;text-align:right;color:#181818;"><span style="display:inline-block;transform:scaleX(0.94);transform-origin:100% 0">4,957</span></div>
<div class="a" style="left:446.40px;top:412.52px;font-size:8.6px;line-height:8.6px;color:#505050;"><span style="display:inline-block;transform:scaleX(0.88);transform-origin:0 0">$</span></div>
<div class="a" style="left:441.50px;top:412.40px;font-size:8.5px;line-height:8.5px;width:50.20px;text-align:right;color:#181818;"><span style="display:inline-block;transform:scaleX(0.94);transform-origin:100% 0">5,056</span></div>
<div class="a" style="left:500.40px;top:412.52px;font-size:8.6px;line-height:8.6px;color:#505050;"><span style="display:inline-block;transform:scaleX(0.88);transform-origin:0 0">$</span></div>
<div class="a" style="left:495.50px;top:412.40px;font-size:8.5px;line-height:8.5px;width:48.20px;text-align:right;color:#181818;"><span style="display:inline-block;transform:scaleX(0.94);transform-origin:100% 0">5,157</span></div>
<div class="a" style="left:552.40px;top:412.52px;font-size:8.6px;line-height:8.6px;color:#505050;"><span style="display:inline-block;transform:scaleX(0.88);transform-origin:0 0">$</span></div>
<div class="a" style="left:547.50px;top:412.40px;font-size:8.5px;line-height:8.5px;width:39.90px;text-align:right;color:#181818;"><span style="display:inline-block;transform:scaleX(0.94);transform-origin:100% 0">5,260</span></div>
<div class="a" style="left:596.10px;top:412.52px;font-size:8.6px;line-height:8.6px;color:#505050;"><span style="display:inline-block;transform:scaleX(0.88);transform-origin:0 0">$</span></div>
<div class="a" style="left:591.20px;top:412.40px;font-size:8.5px;line-height:8.5px;width:39.50px;text-align:right;color:#181818;"><span style="display:inline-block;transform:scaleX(0.94);transform-origin:100% 0">5,446</span></div>
<div class="a" style="left:639.40px;top:412.52px;font-size:8.6px;line-height:8.6px;color:#505050;"><span style="display:inline-block;transform:scaleX(0.88);transform-origin:0 0">$</span></div>
<div class="a" style="left:634.50px;top:412.40px;font-size:8.5px;line-height:8.5px;width:40.20px;text-align:right;color:#181818;"><span style="display:inline-block;transform:scaleX(0.94);transform-origin:100% 0">5,555</span></div>
<div class="a" style="left:683.40px;top:412.52px;font-size:8.6px;line-height:8.6px;color:#505050;"><span style="display:inline-block;transform:scaleX(0.88);transform-origin:0 0">$</span></div>
<div class="a" style="left:678.50px;top:412.40px;font-size:8.5px;line-height:8.5px;width:39.20px;text-align:right;color:#181818;"><span style="display:inline-block;transform:scaleX(0.94);transform-origin:100% 0">5,666</span></div>
<div class="a" style="left:726.40px;top:412.52px;font-size:8.6px;line-height:8.6px;color:#505050;"><span style="display:inline-block;transform:scaleX(0.88);transform-origin:0 0">$</span></div>
<div class="a" style="left:721.50px;top:412.40px;font-size:8.5px;line-height:8.5px;width:39.40px;text-align:right;color:#181818;"><span style="display:inline-block;transform:scaleX(0.94);transform-origin:100% 0">5,779</span></div>
<div class="a" style="left:769.60px;top:412.52px;font-size:8.6px;line-height:8.6px;color:#505050;"><span style="display:inline-block;transform:scaleX(0.88);transform-origin:0 0">$</span></div>
<div class="a" style="left:764.70px;top:412.40px;font-size:8.5px;line-height:8.5px;width:40.20px;text-align:right;color:#181818;"><span style="display:inline-block;transform:scaleX(0.94);transform-origin:100% 0">5,895</span></div>
<div class="a" style="left:813.60px;top:412.52px;font-size:8.6px;line-height:8.6px;color:#505050;"><span style="display:inline-block;transform:scaleX(0.88);transform-origin:0 0">$</span></div>
<div class="a" style="left:808.70px;top:412.40px;font-size:8.5px;line-height:8.5px;width:39.70px;text-align:right;color:#181818;"><span style="display:inline-block;transform:scaleX(0.94);transform-origin:100% 0">6,013</span></div>
<div class="a" style="left:0.00px;top:424.05px;font-size:8px;line-height:8px;width:12.90px;text-align:right;color:#959595;font-style:italic;">5</div>
<div class="a" style="left:17.00px;top:423.98px;font-size:8.2px;line-height:8.2px;color:#111;">Others</div>
<div class="a" style="left:313.40px;top:423.84px;font-size:8.6px;line-height:8.6px;color:#505050;"><span style="display:inline-block;transform:scaleX(0.88);transform-origin:0 0">$</span></div>
<div class="a" style="left:308.50px;top:423.75px;font-size:8.0px;line-height:8.0px;width:33.70px;text-align:right;color:#181818;">-</div>
<div class="a" style="left:359.50px;top:423.84px;font-size:8.6px;line-height:8.6px;color:#505050;"><span style="display:inline-block;transform:scaleX(0.88);transform-origin:0 0">$</span></div>
<div class="a" style="left:354.60px;top:423.75px;font-size:8.0px;line-height:8.0px;width:31.30px;text-align:right;color:#181818;">-</div>
<div class="a" style="left:403.20px;top:423.84px;font-size:8.6px;line-height:8.6px;color:#505050;"><span style="display:inline-block;transform:scaleX(0.88);transform-origin:0 0">$</span></div>
<div class="a" style="left:398.30px;top:423.75px;font-size:8.0px;line-height:8.0px;width:30.80px;text-align:right;color:#181818;">-</div>
<div class="a" style="left:446.40px;top:423.84px;font-size:8.6px;line-height:8.6px;color:#505050;"><span style="display:inline-block;transform:scaleX(0.88);transform-origin:0 0">$</span></div>
<div class="a" style="left:441.50px;top:423.75px;font-size:8.0px;line-height:8.0px;width:41.60px;text-align:right;color:#181818;">-</div>
<div class="a" style="left:500.40px;top:423.84px;font-size:8.6px;line-height:8.6px;color:#505050;"><span style="display:inline-block;transform:scaleX(0.88);transform-origin:0 0">$</span></div>
<div class="a" style="left:495.50px;top:423.75px;font-size:8.0px;line-height:8.0px;width:39.60px;text-align:right;color:#181818;">-</div>
<div class="a" style="left:552.40px;top:423.84px;font-size:8.6px;line-height:8.6px;color:#505050;"><span style="display:inline-block;transform:scaleX(0.88);transform-origin:0 0">$</span></div>
<div class="a" style="left:547.50px;top:423.75px;font-size:8.0px;line-height:8.0px;width:31.30px;text-align:right;color:#181818;">-</div>
<div class="a" style="left:596.10px;top:423.84px;font-size:8.6px;line-height:8.6px;color:#505050;"><span style="display:inline-block;transform:scaleX(0.88);transform-origin:0 0">$</span></div>
<div class="a" style="left:591.20px;top:423.75px;font-size:8.0px;line-height:8.0px;width:30.90px;text-align:right;color:#181818;">-</div>
<div class="a" style="left:639.40px;top:423.84px;font-size:8.6px;line-height:8.6px;color:#505050;"><span style="display:inline-block;transform:scaleX(0.88);transform-origin:0 0">$</span></div>
<div class="a" style="left:634.50px;top:423.75px;font-size:8.0px;line-height:8.0px;width:31.60px;text-align:right;color:#181818;">-</div>
<div class="a" style="left:683.40px;top:423.84px;font-size:8.6px;line-height:8.6px;color:#505050;"><span style="display:inline-block;transform:scaleX(0.88);transform-origin:0 0">$</span></div>
<div class="a" style="left:678.50px;top:423.75px;font-size:8.0px;line-height:8.0px;width:30.60px;text-align:right;color:#181818;">-</div>
<div class="a" style="left:726.40px;top:423.84px;font-size:8.6px;line-height:8.6px;color:#505050;"><span style="display:inline-block;transform:scaleX(0.88);transform-origin:0 0">$</span></div>
<div class="a" style="left:721.50px;top:423.75px;font-size:8.0px;line-height:8.0px;width:30.80px;text-align:right;color:#181818;">-</div>
<div class="a" style="left:769.60px;top:423.84px;font-size:8.6px;line-height:8.6px;color:#505050;"><span style="display:inline-block;transform:scaleX(0.88);transform-origin:0 0">$</span></div>
<div class="a" style="left:764.70px;top:423.75px;font-size:8.0px;line-height:8.0px;width:31.60px;text-align:right;color:#181818;">-</div>
<div class="a" style="left:813.60px;top:423.84px;font-size:8.6px;line-height:8.6px;color:#505050;"><span style="display:inline-block;transform:scaleX(0.88);transform-origin:0 0">$</span></div>
<div class="a" style="left:808.70px;top:423.75px;font-size:8.0px;line-height:8.0px;width:31.10px;text-align:right;color:#181818;">-</div>
<div class="a" style="left:0.00px;top:435.37px;font-size:8px;line-height:8px;width:12.90px;text-align:right;color:#959595;font-style:italic;">6</div>
<div class="a" style="left:17.00px;top:435.30px;font-size:8.2px;line-height:8.2px;color:#111;">Others</div>
<div class="a" style="left:313.40px;top:435.16px;font-size:8.6px;line-height:8.6px;color:#505050;"><span style="display:inline-block;transform:scaleX(0.88);transform-origin:0 0">$</span></div>
<div class="a" style="left:308.50px;top:435.07px;font-size:8.0px;line-height:8.0px;width:33.70px;text-align:right;color:#181818;">-</div>
<div class="a" style="left:359.50px;top:435.16px;font-size:8.6px;line-height:8.6px;color:#505050;"><span style="display:inline-block;transform:scaleX(0.88);transform-origin:0 0">$</span></div>
<div class="a" style="left:354.60px;top:435.07px;font-size:8.0px;line-height:8.0px;width:31.30px;text-align:right;color:#181818;">-</div>
<div class="a" style="left:403.20px;top:435.16px;font-size:8.6px;line-height:8.6px;color:#505050;"><span style="display:inline-block;transform:scaleX(0.88);transform-origin:0 0">$</span></div>
<div class="a" style="left:398.30px;top:435.07px;font-size:8.0px;line-height:8.0px;width:30.80px;text-align:right;color:#181818;">-</div>
<div class="a" style="left:446.40px;top:435.16px;font-size:8.6px;line-height:8.6px;color:#505050;"><span style="display:inline-block;transform:scaleX(0.88);transform-origin:0 0">$</span></div>
<div class="a" style="left:441.50px;top:435.07px;font-size:8.0px;line-height:8.0px;width:41.60px;text-align:right;color:#181818;">-</div>
<div class="a" style="left:500.40px;top:435.16px;font-size:8.6px;line-height:8.6px;color:#505050;"><span style="display:inline-block;transform:scaleX(0.88);transform-origin:0 0">$</span></div>
<div class="a" style="left:495.50px;top:435.07px;font-size:8.0px;line-height:8.0px;width:39.60px;text-align:right;color:#181818;">-</div>
<div class="a" style="left:552.40px;top:435.16px;font-size:8.6px;line-height:8.6px;color:#505050;"><span style="display:inline-block;transform:scaleX(0.88);transform-origin:0 0">$</span></div>
<div class="a" style="left:547.50px;top:435.07px;font-size:8.0px;line-height:8.0px;width:31.30px;text-align:right;color:#181818;">-</div>
<div class="a" style="left:596.10px;top:435.16px;font-size:8.6px;line-height:8.6px;color:#505050;"><span style="display:inline-block;transform:scaleX(0.88);transform-origin:0 0">$</span></div>
<div class="a" style="left:591.20px;top:435.07px;font-size:8.0px;line-height:8.0px;width:30.90px;text-align:right;color:#181818;">-</div>
<div class="a" style="left:639.40px;top:435.16px;font-size:8.6px;line-height:8.6px;color:#505050;"><span style="display:inline-block;transform:scaleX(0.88);transform-origin:0 0">$</span></div>
<div class="a" style="left:634.50px;top:435.07px;font-size:8.0px;line-height:8.0px;width:31.60px;text-align:right;color:#181818;">-</div>
<div class="a" style="left:683.40px;top:435.16px;font-size:8.6px;line-height:8.6px;color:#505050;"><span style="display:inline-block;transform:scaleX(0.88);transform-origin:0 0">$</span></div>
<div class="a" style="left:678.50px;top:435.07px;font-size:8.0px;line-height:8.0px;width:30.60px;text-align:right;color:#181818;">-</div>
<div class="a" style="left:726.40px;top:435.16px;font-size:8.6px;line-height:8.6px;color:#505050;"><span style="display:inline-block;transform:scaleX(0.88);transform-origin:0 0">$</span></div>
<div class="a" style="left:721.50px;top:435.07px;font-size:8.0px;line-height:8.0px;width:30.80px;text-align:right;color:#181818;">-</div>
<div class="a" style="left:769.60px;top:435.16px;font-size:8.6px;line-height:8.6px;color:#505050;"><span style="display:inline-block;transform:scaleX(0.88);transform-origin:0 0">$</span></div>
<div class="a" style="left:764.70px;top:435.07px;font-size:8.0px;line-height:8.0px;width:31.60px;text-align:right;color:#181818;">-</div>
<div class="a" style="left:813.60px;top:435.16px;font-size:8.6px;line-height:8.6px;color:#505050;"><span style="display:inline-block;transform:scaleX(0.88);transform-origin:0 0">$</span></div>
<div class="a" style="left:808.70px;top:435.07px;font-size:8.0px;line-height:8.0px;width:31.10px;text-align:right;color:#181818;">-</div>
<div class="a" style="left:0.00px;top:446.69px;font-size:8px;line-height:8px;width:12.90px;text-align:right;color:#959595;font-style:italic;">7</div>
<div class="a" style="left:17.00px;top:446.62px;font-size:8.2px;line-height:8.2px;color:#111;">Others</div>
<div class="a" style="left:313.40px;top:446.48px;font-size:8.6px;line-height:8.6px;color:#505050;"><span style="display:inline-block;transform:scaleX(0.88);transform-origin:0 0">$</span></div>
<div class="a" style="left:308.50px;top:446.39px;font-size:8.0px;line-height:8.0px;width:33.70px;text-align:right;color:#181818;">-</div>
<div class="a" style="left:359.50px;top:446.48px;font-size:8.6px;line-height:8.6px;color:#505050;"><span style="display:inline-block;transform:scaleX(0.88);transform-origin:0 0">$</span></div>
<div class="a" style="left:354.60px;top:446.39px;font-size:8.0px;line-height:8.0px;width:31.30px;text-align:right;color:#181818;">-</div>
<div class="a" style="left:403.20px;top:446.48px;font-size:8.6px;line-height:8.6px;color:#505050;"><span style="display:inline-block;transform:scaleX(0.88);transform-origin:0 0">$</span></div>
<div class="a" style="left:398.30px;top:446.39px;font-size:8.0px;line-height:8.0px;width:30.80px;text-align:right;color:#181818;">-</div>
<div class="a" style="left:446.40px;top:446.48px;font-size:8.6px;line-height:8.6px;color:#505050;"><span style="display:inline-block;transform:scaleX(0.88);transform-origin:0 0">$</span></div>
<div class="a" style="left:441.50px;top:446.39px;font-size:8.0px;line-height:8.0px;width:41.60px;text-align:right;color:#181818;">-</div>
<div class="a" style="left:500.40px;top:446.48px;font-size:8.6px;line-height:8.6px;color:#505050;"><span style="display:inline-block;transform:scaleX(0.88);transform-origin:0 0">$</span></div>
<div class="a" style="left:495.50px;top:446.39px;font-size:8.0px;line-height:8.0px;width:39.60px;text-align:right;color:#181818;">-</div>
<div class="a" style="left:552.40px;top:446.48px;font-size:8.6px;line-height:8.6px;color:#505050;"><span style="display:inline-block;transform:scaleX(0.88);transform-origin:0 0">$</span></div>
<div class="a" style="left:547.50px;top:446.39px;font-size:8.0px;line-height:8.0px;width:31.30px;text-align:right;color:#181818;">-</div>
<div class="a" style="left:596.10px;top:446.48px;font-size:8.6px;line-height:8.6px;color:#505050;"><span style="display:inline-block;transform:scaleX(0.88);transform-origin:0 0">$</span></div>
<div class="a" style="left:591.20px;top:446.39px;font-size:8.0px;line-height:8.0px;width:30.90px;text-align:right;color:#181818;">-</div>
<div class="a" style="left:639.40px;top:446.48px;font-size:8.6px;line-height:8.6px;color:#505050;"><span style="display:inline-block;transform:scaleX(0.88);transform-origin:0 0">$</span></div>
<div class="a" style="left:634.50px;top:446.39px;font-size:8.0px;line-height:8.0px;width:31.60px;text-align:right;color:#181818;">-</div>
<div class="a" style="left:683.40px;top:446.48px;font-size:8.6px;line-height:8.6px;color:#505050;"><span style="display:inline-block;transform:scaleX(0.88);transform-origin:0 0">$</span></div>
<div class="a" style="left:678.50px;top:446.39px;font-size:8.0px;line-height:8.0px;width:30.60px;text-align:right;color:#181818;">-</div>
<div class="a" style="left:726.40px;top:446.48px;font-size:8.6px;line-height:8.6px;color:#505050;"><span style="display:inline-block;transform:scaleX(0.88);transform-origin:0 0">$</span></div>
<div class="a" style="left:721.50px;top:446.39px;font-size:8.0px;line-height:8.0px;width:30.80px;text-align:right;color:#181818;">-</div>
<div class="a" style="left:769.60px;top:446.48px;font-size:8.6px;line-height:8.6px;color:#505050;"><span style="display:inline-block;transform:scaleX(0.88);transform-origin:0 0">$</span></div>
<div class="a" style="left:764.70px;top:446.39px;font-size:8.0px;line-height:8.0px;width:31.60px;text-align:right;color:#181818;">-</div>
<div class="a" style="left:813.60px;top:446.48px;font-size:8.6px;line-height:8.6px;color:#505050;"><span style="display:inline-block;transform:scaleX(0.88);transform-origin:0 0">$</span></div>
<div class="a" style="left:808.70px;top:446.39px;font-size:8.0px;line-height:8.0px;width:31.10px;text-align:right;color:#181818;">-</div>
<div class="a" style="left:0.00px;top:458.01px;font-size:8px;line-height:8px;width:12.90px;text-align:right;color:#959595;font-style:italic;">8</div>
<div class="a" style="left:17.00px;top:457.94px;font-size:8.2px;line-height:8.2px;color:#111;">Others</div>
<div class="a" style="left:313.40px;top:457.80px;font-size:8.6px;line-height:8.6px;color:#505050;"><span style="display:inline-block;transform:scaleX(0.88);transform-origin:0 0">$</span></div>
<div class="a" style="left:308.50px;top:457.71px;font-size:8.0px;line-height:8.0px;width:33.70px;text-align:right;color:#181818;">-</div>
<div class="a" style="left:359.50px;top:457.80px;font-size:8.6px;line-height:8.6px;color:#505050;"><span style="display:inline-block;transform:scaleX(0.88);transform-origin:0 0">$</span></div>
<div class="a" style="left:354.60px;top:457.71px;font-size:8.0px;line-height:8.0px;width:31.30px;text-align:right;color:#181818;">-</div>
<div class="a" style="left:403.20px;top:457.80px;font-size:8.6px;line-height:8.6px;color:#505050;"><span style="display:inline-block;transform:scaleX(0.88);transform-origin:0 0">$</span></div>
<div class="a" style="left:398.30px;top:457.71px;font-size:8.0px;line-height:8.0px;width:30.80px;text-align:right;color:#181818;">-</div>
<div class="a" style="left:446.40px;top:457.80px;font-size:8.6px;line-height:8.6px;color:#505050;"><span style="display:inline-block;transform:scaleX(0.88);transform-origin:0 0">$</span></div>
<div class="a" style="left:441.50px;top:457.71px;font-size:8.0px;line-height:8.0px;width:41.60px;text-align:right;color:#181818;">-</div>
<div class="a" style="left:500.40px;top:457.80px;font-size:8.6px;line-height:8.6px;color:#505050;"><span style="display:inline-block;transform:scaleX(0.88);transform-origin:0 0">$</span></div>
<div class="a" style="left:495.50px;top:457.71px;font-size:8.0px;line-height:8.0px;width:39.60px;text-align:right;color:#181818;">-</div>
<div class="a" style="left:552.40px;top:457.80px;font-size:8.6px;line-height:8.6px;color:#505050;"><span style="display:inline-block;transform:scaleX(0.88);transform-origin:0 0">$</span></div>
<div class="a" style="left:547.50px;top:457.71px;font-size:8.0px;line-height:8.0px;width:31.30px;text-align:right;color:#181818;">-</div>
<div class="a" style="left:596.10px;top:457.80px;font-size:8.6px;line-height:8.6px;color:#505050;"><span style="display:inline-block;transform:scaleX(0.88);transform-origin:0 0">$</span></div>
<div class="a" style="left:591.20px;top:457.71px;font-size:8.0px;line-height:8.0px;width:30.90px;text-align:right;color:#181818;">-</div>
<div class="a" style="left:639.40px;top:457.80px;font-size:8.6px;line-height:8.6px;color:#505050;"><span style="display:inline-block;transform:scaleX(0.88);transform-origin:0 0">$</span></div>
<div class="a" style="left:634.50px;top:457.71px;font-size:8.0px;line-height:8.0px;width:31.60px;text-align:right;color:#181818;">-</div>
<div class="a" style="left:683.40px;top:457.80px;font-size:8.6px;line-height:8.6px;color:#505050;"><span style="display:inline-block;transform:scaleX(0.88);transform-origin:0 0">$</span></div>
<div class="a" style="left:678.50px;top:457.71px;font-size:8.0px;line-height:8.0px;width:30.60px;text-align:right;color:#181818;">-</div>
<div class="a" style="left:726.40px;top:457.80px;font-size:8.6px;line-height:8.6px;color:#505050;"><span style="display:inline-block;transform:scaleX(0.88);transform-origin:0 0">$</span></div>
<div class="a" style="left:721.50px;top:457.71px;font-size:8.0px;line-height:8.0px;width:30.80px;text-align:right;color:#181818;">-</div>
<div class="a" style="left:769.60px;top:457.80px;font-size:8.6px;line-height:8.6px;color:#505050;"><span style="display:inline-block;transform:scaleX(0.88);transform-origin:0 0">$</span></div>
<div class="a" style="left:764.70px;top:457.71px;font-size:8.0px;line-height:8.0px;width:31.60px;text-align:right;color:#181818;">-</div>
<div class="a" style="left:813.60px;top:457.80px;font-size:8.6px;line-height:8.6px;color:#505050;"><span style="display:inline-block;transform:scaleX(0.88);transform-origin:0 0">$</span></div>
<div class="a" style="left:808.70px;top:457.71px;font-size:8.0px;line-height:8.0px;width:31.10px;text-align:right;color:#181818;">-</div>
<div class="a" style="left:0.00px;top:469.33px;font-size:8px;line-height:8px;width:12.90px;text-align:right;color:#959595;font-style:italic;">9</div>
<div class="a" style="left:17.00px;top:469.26px;font-size:8.2px;line-height:8.2px;color:#111;">Others</div>
<div class="a" style="left:313.40px;top:469.12px;font-size:8.6px;line-height:8.6px;color:#505050;"><span style="display:inline-block;transform:scaleX(0.88);transform-origin:0 0">$</span></div>
<div class="a" style="left:308.50px;top:469.03px;font-size:8.0px;line-height:8.0px;width:33.70px;text-align:right;color:#181818;">-</div>
<div class="a" style="left:359.50px;top:469.12px;font-size:8.6px;line-height:8.6px;color:#505050;"><span style="display:inline-block;transform:scaleX(0.88);transform-origin:0 0">$</span></div>
<div class="a" style="left:354.60px;top:469.03px;font-size:8.0px;line-height:8.0px;width:31.30px;text-align:right;color:#181818;">-</div>
<div class="a" style="left:403.20px;top:469.12px;font-size:8.6px;line-height:8.6px;color:#505050;"><span style="display:inline-block;transform:scaleX(0.88);transform-origin:0 0">$</span></div>
<div class="a" style="left:398.30px;top:469.03px;font-size:8.0px;line-height:8.0px;width:30.80px;text-align:right;color:#181818;">-</div>
<div class="a" style="left:446.40px;top:469.12px;font-size:8.6px;line-height:8.6px;color:#505050;"><span style="display:inline-block;transform:scaleX(0.88);transform-origin:0 0">$</span></div>
<div class="a" style="left:441.50px;top:469.03px;font-size:8.0px;line-height:8.0px;width:41.60px;text-align:right;color:#181818;">-</div>
<div class="a" style="left:500.40px;top:469.12px;font-size:8.6px;line-height:8.6px;color:#505050;"><span style="display:inline-block;transform:scaleX(0.88);transform-origin:0 0">$</span></div>
<div class="a" style="left:495.50px;top:469.03px;font-size:8.0px;line-height:8.0px;width:39.60px;text-align:right;color:#181818;">-</div>
<div class="a" style="left:552.40px;top:469.12px;font-size:8.6px;line-height:8.6px;color:#505050;"><span style="display:inline-block;transform:scaleX(0.88);transform-origin:0 0">$</span></div>
<div class="a" style="left:547.50px;top:469.03px;font-size:8.0px;line-height:8.0px;width:31.30px;text-align:right;color:#181818;">-</div>
<div class="a" style="left:596.10px;top:469.12px;font-size:8.6px;line-height:8.6px;color:#505050;"><span style="display:inline-block;transform:scaleX(0.88);transform-origin:0 0">$</span></div>
<div class="a" style="left:591.20px;top:469.03px;font-size:8.0px;line-height:8.0px;width:30.90px;text-align:right;color:#181818;">-</div>
<div class="a" style="left:639.40px;top:469.12px;font-size:8.6px;line-height:8.6px;color:#505050;"><span style="display:inline-block;transform:scaleX(0.88);transform-origin:0 0">$</span></div>
<div class="a" style="left:634.50px;top:469.03px;font-size:8.0px;line-height:8.0px;width:31.60px;text-align:right;color:#181818;">-</div>
<div class="a" style="left:683.40px;top:469.12px;font-size:8.6px;line-height:8.6px;color:#505050;"><span style="display:inline-block;transform:scaleX(0.88);transform-origin:0 0">$</span></div>
<div class="a" style="left:678.50px;top:469.03px;font-size:8.0px;line-height:8.0px;width:30.60px;text-align:right;color:#181818;">-</div>
<div class="a" style="left:726.40px;top:469.12px;font-size:8.6px;line-height:8.6px;color:#505050;"><span style="display:inline-block;transform:scaleX(0.88);transform-origin:0 0">$</span></div>
<div class="a" style="left:721.50px;top:469.03px;font-size:8.0px;line-height:8.0px;width:30.80px;text-align:right;color:#181818;">-</div>
<div class="a" style="left:769.60px;top:469.12px;font-size:8.6px;line-height:8.6px;color:#505050;"><span style="display:inline-block;transform:scaleX(0.88);transform-origin:0 0">$</span></div>
<div class="a" style="left:764.70px;top:469.03px;font-size:8.0px;line-height:8.0px;width:31.60px;text-align:right;color:#181818;">-</div>
<div class="a" style="left:813.60px;top:469.12px;font-size:8.6px;line-height:8.6px;color:#505050;"><span style="display:inline-block;transform:scaleX(0.88);transform-origin:0 0">$</span></div>
<div class="a" style="left:808.70px;top:469.03px;font-size:8.0px;line-height:8.0px;width:31.10px;text-align:right;color:#181818;">-</div>
<div class="a" style="left:0.00px;top:480.65px;font-size:8px;line-height:8px;width:12.90px;text-align:right;color:#959595;font-style:italic;">10</div>
<div class="a" style="left:17.00px;top:480.58px;font-size:8.2px;line-height:8.2px;color:#111;">Others</div>
<div class="a" style="left:313.40px;top:480.44px;font-size:8.6px;line-height:8.6px;color:#505050;"><span style="display:inline-block;transform:scaleX(0.88);transform-origin:0 0">$</span></div>
<div class="a" style="left:308.50px;top:480.35px;font-size:8.0px;line-height:8.0px;width:33.70px;text-align:right;color:#181818;">-</div>
<div class="a" style="left:359.50px;top:480.44px;font-size:8.6px;line-height:8.6px;color:#505050;"><span style="display:inline-block;transform:scaleX(0.88);transform-origin:0 0">$</span></div>
<div class="a" style="left:354.60px;top:480.35px;font-size:8.0px;line-height:8.0px;width:31.30px;text-align:right;color:#181818;">-</div>
<div class="a" style="left:403.20px;top:480.44px;font-size:8.6px;line-height:8.6px;color:#505050;"><span style="display:inline-block;transform:scaleX(0.88);transform-origin:0 0">$</span></div>
<div class="a" style="left:398.30px;top:480.35px;font-size:8.0px;line-height:8.0px;width:30.80px;text-align:right;color:#181818;">-</div>
<div class="a" style="left:446.40px;top:480.44px;font-size:8.6px;line-height:8.6px;color:#505050;"><span style="display:inline-block;transform:scaleX(0.88);transform-origin:0 0">$</span></div>
<div class="a" style="left:441.50px;top:480.35px;font-size:8.0px;line-height:8.0px;width:41.60px;text-align:right;color:#181818;">-</div>
<div class="a" style="left:500.40px;top:480.44px;font-size:8.6px;line-height:8.6px;color:#505050;"><span style="display:inline-block;transform:scaleX(0.88);transform-origin:0 0">$</span></div>
<div class="a" style="left:495.50px;top:480.35px;font-size:8.0px;line-height:8.0px;width:39.60px;text-align:right;color:#181818;">-</div>
<div class="a" style="left:552.40px;top:480.44px;font-size:8.6px;line-height:8.6px;color:#505050;"><span style="display:inline-block;transform:scaleX(0.88);transform-origin:0 0">$</span></div>
<div class="a" style="left:547.50px;top:480.35px;font-size:8.0px;line-height:8.0px;width:31.30px;text-align:right;color:#181818;">-</div>
<div class="a" style="left:596.10px;top:480.44px;font-size:8.6px;line-height:8.6px;color:#505050;"><span style="display:inline-block;transform:scaleX(0.88);transform-origin:0 0">$</span></div>
<div class="a" style="left:591.20px;top:480.35px;font-size:8.0px;line-height:8.0px;width:30.90px;text-align:right;color:#181818;">-</div>
<div class="a" style="left:639.40px;top:480.44px;font-size:8.6px;line-height:8.6px;color:#505050;"><span style="display:inline-block;transform:scaleX(0.88);transform-origin:0 0">$</span></div>
<div class="a" style="left:634.50px;top:480.35px;font-size:8.0px;line-height:8.0px;width:31.60px;text-align:right;color:#181818;">-</div>
<div class="a" style="left:683.40px;top:480.44px;font-size:8.6px;line-height:8.6px;color:#505050;"><span style="display:inline-block;transform:scaleX(0.88);transform-origin:0 0">$</span></div>
<div class="a" style="left:678.50px;top:480.35px;font-size:8.0px;line-height:8.0px;width:30.60px;text-align:right;color:#181818;">-</div>
<div class="a" style="left:726.40px;top:480.44px;font-size:8.6px;line-height:8.6px;color:#505050;"><span style="display:inline-block;transform:scaleX(0.88);transform-origin:0 0">$</span></div>
<div class="a" style="left:721.50px;top:480.35px;font-size:8.0px;line-height:8.0px;width:30.80px;text-align:right;color:#181818;">-</div>
<div class="a" style="left:769.60px;top:480.44px;font-size:8.6px;line-height:8.6px;color:#505050;"><span style="display:inline-block;transform:scaleX(0.88);transform-origin:0 0">$</span></div>
<div class="a" style="left:764.70px;top:480.35px;font-size:8.0px;line-height:8.0px;width:31.60px;text-align:right;color:#181818;">-</div>
<div class="a" style="left:813.60px;top:480.44px;font-size:8.6px;line-height:8.6px;color:#505050;"><span style="display:inline-block;transform:scaleX(0.88);transform-origin:0 0">$</span></div>
<div class="a" style="left:808.70px;top:480.35px;font-size:8.0px;line-height:8.0px;width:31.10px;text-align:right;color:#181818;">-</div>
<div class="a" style="left:0.00px;top:491.97px;font-size:8px;line-height:8px;width:12.90px;text-align:right;color:#959595;font-style:italic;">11</div>
<div class="a" style="left:17.00px;top:491.90px;font-size:8.2px;line-height:8.2px;color:#111;">Others</div>
<div class="a" style="left:313.40px;top:491.76px;font-size:8.6px;line-height:8.6px;color:#505050;"><span style="display:inline-block;transform:scaleX(0.88);transform-origin:0 0">$</span></div>
<div class="a" style="left:308.50px;top:491.67px;font-size:8.0px;line-height:8.0px;width:33.70px;text-align:right;color:#181818;">-</div>
<div class="a" style="left:359.50px;top:491.76px;font-size:8.6px;line-height:8.6px;color:#505050;"><span style="display:inline-block;transform:scaleX(0.88);transform-origin:0 0">$</span></div>
<div class="a" style="left:354.60px;top:491.67px;font-size:8.0px;line-height:8.0px;width:31.30px;text-align:right;color:#181818;">-</div>
<div class="a" style="left:403.20px;top:491.76px;font-size:8.6px;line-height:8.6px;color:#505050;"><span style="display:inline-block;transform:scaleX(0.88);transform-origin:0 0">$</span></div>
<div class="a" style="left:398.30px;top:491.67px;font-size:8.0px;line-height:8.0px;width:30.80px;text-align:right;color:#181818;">-</div>
<div class="a" style="left:446.40px;top:491.76px;font-size:8.6px;line-height:8.6px;color:#505050;"><span style="display:inline-block;transform:scaleX(0.88);transform-origin:0 0">$</span></div>
<div class="a" style="left:441.50px;top:491.67px;font-size:8.0px;line-height:8.0px;width:41.60px;text-align:right;color:#181818;">-</div>
<div class="a" style="left:500.40px;top:491.76px;font-size:8.6px;line-height:8.6px;color:#505050;"><span style="display:inline-block;transform:scaleX(0.88);transform-origin:0 0">$</span></div>
<div class="a" style="left:495.50px;top:491.67px;font-size:8.0px;line-height:8.0px;width:39.60px;text-align:right;color:#181818;">-</div>
<div class="a" style="left:552.40px;top:491.76px;font-size:8.6px;line-height:8.6px;color:#505050;"><span style="display:inline-block;transform:scaleX(0.88);transform-origin:0 0">$</span></div>
<div class="a" style="left:547.50px;top:491.67px;font-size:8.0px;line-height:8.0px;width:31.30px;text-align:right;color:#181818;">-</div>
<div class="a" style="left:596.10px;top:491.76px;font-size:8.6px;line-height:8.6px;color:#505050;"><span style="display:inline-block;transform:scaleX(0.88);transform-origin:0 0">$</span></div>
<div class="a" style="left:591.20px;top:491.67px;font-size:8.0px;line-height:8.0px;width:30.90px;text-align:right;color:#181818;">-</div>
<div class="a" style="left:639.40px;top:491.76px;font-size:8.6px;line-height:8.6px;color:#505050;"><span style="display:inline-block;transform:scaleX(0.88);transform-origin:0 0">$</span></div>
<div class="a" style="left:634.50px;top:491.67px;font-size:8.0px;line-height:8.0px;width:31.60px;text-align:right;color:#181818;">-</div>
<div class="a" style="left:683.40px;top:491.76px;font-size:8.6px;line-height:8.6px;color:#505050;"><span style="display:inline-block;transform:scaleX(0.88);transform-origin:0 0">$</span></div>
<div class="a" style="left:678.50px;top:491.67px;font-size:8.0px;line-height:8.0px;width:30.60px;text-align:right;color:#181818;">-</div>
<div class="a" style="left:726.40px;top:491.76px;font-size:8.6px;line-height:8.6px;color:#505050;"><span style="display:inline-block;transform:scaleX(0.88);transform-origin:0 0">$</span></div>
<div class="a" style="left:721.50px;top:491.67px;font-size:8.0px;line-height:8.0px;width:30.80px;text-align:right;color:#181818;">-</div>
<div class="a" style="left:769.60px;top:491.76px;font-size:8.6px;line-height:8.6px;color:#505050;"><span style="display:inline-block;transform:scaleX(0.88);transform-origin:0 0">$</span></div>
<div class="a" style="left:764.70px;top:491.67px;font-size:8.0px;line-height:8.0px;width:31.60px;text-align:right;color:#181818;">-</div>
<div class="a" style="left:813.60px;top:491.76px;font-size:8.6px;line-height:8.6px;color:#505050;"><span style="display:inline-block;transform:scaleX(0.88);transform-origin:0 0">$</span></div>
<div class="a" style="left:808.70px;top:491.67px;font-size:8.0px;line-height:8.0px;width:31.10px;text-align:right;color:#181818;">-</div>
<div class="r" style="left:14.6px;top:500.1px;width:835.40px;height:1.3px;background:#8c8c8c"></div>
<div class="r" style="left:14.6px;top:511.7px;width:835.40px;height:1.1px;background:#333"></div>
<div class="a" style="left:17.00px;top:502.36px;font-size:8.5px;line-height:8.5px;font-weight:bold;color:#1a1a1a;"><span style="display:inline-block;transform:scaleX(0.86);transform-origin:0 0">Total</span></div>
<div class="a" style="left:313.40px;top:503.25px;font-size:8.4px;line-height:8.4px;font-weight:bold;color:#222;"><span style="display:inline-block;transform:scaleX(0.88);transform-origin:0 0">$</span></div>
<div class="a" style="left:308.50px;top:503.13px;font-size:8.3px;line-height:8.3px;width:42.30px;text-align:right;font-weight:bold;color:#0a0a0a;"><span style="display:inline-block;transform:scaleX(0.94);transform-origin:100% 0">8,714</span></div>
<div class="a" style="left:359.50px;top:503.25px;font-size:8.4px;line-height:8.4px;font-weight:bold;color:#222;"><span style="display:inline-block;transform:scaleX(0.88);transform-origin:0 0">$</span></div>
<div class="a" style="left:354.60px;top:503.13px;font-size:8.3px;line-height:8.3px;width:39.90px;text-align:right;font-weight:bold;color:#0a0a0a;"><span style="display:inline-block;transform:scaleX(0.94);transform-origin:100% 0">18,528</span></div>
<div class="a" style="left:403.20px;top:503.25px;font-size:8.4px;line-height:8.4px;font-weight:bold;color:#222;"><span style="display:inline-block;transform:scaleX(0.88);transform-origin:0 0">$</span></div>
<div class="a" style="left:398.30px;top:503.13px;font-size:8.3px;line-height:8.3px;width:39.40px;text-align:right;font-weight:bold;color:#0a0a0a;"><span style="display:inline-block;transform:scaleX(0.94);transform-origin:100% 0">18,820</span></div>
<div class="a" style="left:446.40px;top:503.25px;font-size:8.4px;line-height:8.4px;font-weight:bold;color:#222;"><span style="display:inline-block;transform:scaleX(0.88);transform-origin:0 0">$</span></div>
<div class="a" style="left:441.50px;top:503.13px;font-size:8.3px;line-height:8.3px;width:50.20px;text-align:right;font-weight:bold;color:#0a0a0a;"><span style="display:inline-block;transform:scaleX(0.94);transform-origin:100% 0">19,117</span></div>
<div class="a" style="left:500.40px;top:503.25px;font-size:8.4px;line-height:8.4px;font-weight:bold;color:#222;"><span style="display:inline-block;transform:scaleX(0.88);transform-origin:0 0">$</span></div>
<div class="a" style="left:495.50px;top:503.13px;font-size:8.3px;line-height:8.3px;width:48.20px;text-align:right;font-weight:bold;color:#0a0a0a;"><span style="display:inline-block;transform:scaleX(0.94);transform-origin:100% 0">19,421</span></div>
<div class="a" style="left:552.40px;top:503.25px;font-size:8.4px;line-height:8.4px;font-weight:bold;color:#222;"><span style="display:inline-block;transform:scaleX(0.88);transform-origin:0 0">$</span></div>
<div class="a" style="left:547.50px;top:503.13px;font-size:8.3px;line-height:8.3px;width:39.90px;text-align:right;font-weight:bold;color:#0a0a0a;"><span style="display:inline-block;transform:scaleX(0.94);transform-origin:100% 0">19,730</span></div>
<div class="a" style="left:596.10px;top:503.25px;font-size:8.4px;line-height:8.4px;font-weight:bold;color:#222;"><span style="display:inline-block;transform:scaleX(0.88);transform-origin:0 0">$</span></div>
<div class="a" style="left:591.20px;top:503.13px;font-size:8.3px;line-height:8.3px;width:39.50px;text-align:right;font-weight:bold;color:#0a0a0a;"><span style="display:inline-block;transform:scaleX(0.94);transform-origin:100% 0">20,327</span></div>
<div class="a" style="left:639.40px;top:503.25px;font-size:8.4px;line-height:8.4px;font-weight:bold;color:#222;"><span style="display:inline-block;transform:scaleX(0.88);transform-origin:0 0">$</span></div>
<div class="a" style="left:634.50px;top:503.13px;font-size:8.3px;line-height:8.3px;width:40.20px;text-align:right;font-weight:bold;color:#0a0a0a;"><span style="display:inline-block;transform:scaleX(0.94);transform-origin:100% 0">20,653</span></div>
<div class="a" style="left:683.40px;top:503.25px;font-size:8.4px;line-height:8.4px;font-weight:bold;color:#222;"><span style="display:inline-block;transform:scaleX(0.88);transform-origin:0 0">$</span></div>
<div class="a" style="left:678.50px;top:503.13px;font-size:8.3px;line-height:8.3px;width:39.20px;text-align:right;font-weight:bold;color:#0a0a0a;"><span style="display:inline-block;transform:scaleX(0.94);transform-origin:100% 0">20,987</span></div>
<div class="a" style="left:726.40px;top:503.25px;font-size:8.4px;line-height:8.4px;font-weight:bold;color:#222;"><span style="display:inline-block;transform:scaleX(0.88);transform-origin:0 0">$</span></div>
<div class="a" style="left:721.50px;top:503.13px;font-size:8.3px;line-height:8.3px;width:39.40px;text-align:right;font-weight:bold;color:#0a0a0a;"><span style="display:inline-block;transform:scaleX(0.94);transform-origin:100% 0">21,327</span></div>
<div class="a" style="left:769.60px;top:503.25px;font-size:8.4px;line-height:8.4px;font-weight:bold;color:#222;"><span style="display:inline-block;transform:scaleX(0.88);transform-origin:0 0">$</span></div>
<div class="a" style="left:764.70px;top:503.13px;font-size:8.3px;line-height:8.3px;width:40.20px;text-align:right;font-weight:bold;color:#0a0a0a;"><span style="display:inline-block;transform:scaleX(0.94);transform-origin:100% 0">21,673</span></div>
<div class="a" style="left:813.60px;top:503.25px;font-size:8.4px;line-height:8.4px;font-weight:bold;color:#222;"><span style="display:inline-block;transform:scaleX(0.88);transform-origin:0 0">$</span></div>
<div class="a" style="left:808.70px;top:503.13px;font-size:8.3px;line-height:8.3px;width:39.70px;text-align:right;font-weight:bold;color:#0a0a0a;"><span style="display:inline-block;transform:scaleX(0.94);transform-origin:100% 0">22,027</span></div>
<div class="a" style="left:17.00px;top:525.00px;font-size:8.5px;line-height:8.5px;font-weight:bold;color:#1a1a1a;"><span style="display:inline-block;transform:scaleX(0.86);transform-origin:0 0">Department-Wise Distribution</span></div>
<div class="a" style="left:17.00px;top:537.18px;font-size:8.2px;line-height:8.2px;color:#111;">Operations</div>
<div class="a" style="left:313.40px;top:537.04px;font-size:8.6px;line-height:8.6px;color:#505050;"><span style="display:inline-block;transform:scaleX(0.88);transform-origin:0 0">$</span></div>
<div class="a" style="left:308.50px;top:536.92px;font-size:8.5px;line-height:8.5px;width:42.30px;text-align:right;color:#181818;"><span style="display:inline-block;transform:scaleX(0.94);transform-origin:100% 0">1,000</span></div>
<div class="a" style="left:359.50px;top:537.04px;font-size:8.6px;line-height:8.6px;color:#505050;"><span style="display:inline-block;transform:scaleX(0.88);transform-origin:0 0">$</span></div>
<div class="a" style="left:354.60px;top:536.92px;font-size:8.5px;line-height:8.5px;width:39.90px;text-align:right;color:#181818;"><span style="display:inline-block;transform:scaleX(0.94);transform-origin:100% 0">1,000</span></div>
<div class="a" style="left:403.20px;top:537.04px;font-size:8.6px;line-height:8.6px;color:#505050;"><span style="display:inline-block;transform:scaleX(0.88);transform-origin:0 0">$</span></div>
<div class="a" style="left:398.30px;top:536.92px;font-size:8.5px;line-height:8.5px;width:39.40px;text-align:right;color:#181818;"><span style="display:inline-block;transform:scaleX(0.94);transform-origin:100% 0">1,000</span></div>
<div class="a" style="left:446.40px;top:537.04px;font-size:8.6px;line-height:8.6px;color:#505050;"><span style="display:inline-block;transform:scaleX(0.88);transform-origin:0 0">$</span></div>
<div class="a" style="left:441.50px;top:536.92px;font-size:8.5px;line-height:8.5px;width:50.20px;text-align:right;color:#181818;"><span style="display:inline-block;transform:scaleX(0.94);transform-origin:100% 0">1,000</span></div>
<div class="a" style="left:500.40px;top:537.04px;font-size:8.6px;line-height:8.6px;color:#505050;"><span style="display:inline-block;transform:scaleX(0.88);transform-origin:0 0">$</span></div>
<div class="a" style="left:495.50px;top:536.92px;font-size:8.5px;line-height:8.5px;width:48.20px;text-align:right;color:#181818;"><span style="display:inline-block;transform:scaleX(0.94);transform-origin:100% 0">1,000</span></div>
<div class="a" style="left:552.40px;top:537.04px;font-size:8.6px;line-height:8.6px;color:#505050;"><span style="display:inline-block;transform:scaleX(0.88);transform-origin:0 0">$</span></div>
<div class="a" style="left:547.50px;top:536.92px;font-size:8.5px;line-height:8.5px;width:39.90px;text-align:right;color:#181818;"><span style="display:inline-block;transform:scaleX(0.94);transform-origin:100% 0">1,000</span></div>
<div class="a" style="left:596.10px;top:537.04px;font-size:8.6px;line-height:8.6px;color:#505050;"><span style="display:inline-block;transform:scaleX(0.88);transform-origin:0 0">$</span></div>
<div class="a" style="left:591.20px;top:536.92px;font-size:8.5px;line-height:8.5px;width:39.50px;text-align:right;color:#181818;"><span style="display:inline-block;transform:scaleX(0.94);transform-origin:100% 0">1,010</span></div>
<div class="a" style="left:639.40px;top:537.04px;font-size:8.6px;line-height:8.6px;color:#505050;"><span style="display:inline-block;transform:scaleX(0.88);transform-origin:0 0">$</span></div>
<div class="a" style="left:634.50px;top:536.92px;font-size:8.5px;line-height:8.5px;width:40.20px;text-align:right;color:#181818;"><span style="display:inline-block;transform:scaleX(0.94);transform-origin:100% 0">1,010</span></div>
<div class="a" style="left:683.40px;top:537.04px;font-size:8.6px;line-height:8.6px;color:#505050;"><span style="display:inline-block;transform:scaleX(0.88);transform-origin:0 0">$</span></div>
<div class="a" style="left:678.50px;top:536.92px;font-size:8.5px;line-height:8.5px;width:39.20px;text-align:right;color:#181818;"><span style="display:inline-block;transform:scaleX(0.94);transform-origin:100% 0">1,010</span></div>
<div class="a" style="left:726.40px;top:537.04px;font-size:8.6px;line-height:8.6px;color:#505050;"><span style="display:inline-block;transform:scaleX(0.88);transform-origin:0 0">$</span></div>
<div class="a" style="left:721.50px;top:536.92px;font-size:8.5px;line-height:8.5px;width:39.40px;text-align:right;color:#181818;"><span style="display:inline-block;transform:scaleX(0.94);transform-origin:100% 0">1,010</span></div>
<div class="a" style="left:769.60px;top:537.04px;font-size:8.6px;line-height:8.6px;color:#505050;"><span style="display:inline-block;transform:scaleX(0.88);transform-origin:0 0">$</span></div>
<div class="a" style="left:764.70px;top:536.92px;font-size:8.5px;line-height:8.5px;width:40.20px;text-align:right;color:#181818;"><span style="display:inline-block;transform:scaleX(0.94);transform-origin:100% 0">1,010</span></div>
<div class="a" style="left:813.60px;top:537.04px;font-size:8.6px;line-height:8.6px;color:#505050;"><span style="display:inline-block;transform:scaleX(0.88);transform-origin:0 0">$</span></div>
<div class="a" style="left:808.70px;top:536.92px;font-size:8.5px;line-height:8.5px;width:39.70px;text-align:right;color:#181818;"><span style="display:inline-block;transform:scaleX(0.94);transform-origin:100% 0">1,010</span></div>
<div class="a" style="left:17.00px;top:548.50px;font-size:8.2px;line-height:8.2px;color:#111;">Customer Service and Support</div>
<div class="a" style="left:313.40px;top:548.36px;font-size:8.6px;line-height:8.6px;color:#505050;"><span style="display:inline-block;transform:scaleX(0.88);transform-origin:0 0">$</span></div>
<div class="a" style="left:308.50px;top:548.24px;font-size:8.5px;line-height:8.5px;width:42.30px;text-align:right;color:#181818;"><span style="display:inline-block;transform:scaleX(0.94);transform-origin:100% 0">500</span></div>
<div class="a" style="left:359.50px;top:548.36px;font-size:8.6px;line-height:8.6px;color:#505050;"><span style="display:inline-block;transform:scaleX(0.88);transform-origin:0 0">$</span></div>
<div class="a" style="left:354.60px;top:548.24px;font-size:8.5px;line-height:8.5px;width:39.90px;text-align:right;color:#181818;"><span style="display:inline-block;transform:scaleX(0.94);transform-origin:100% 0">5,359</span></div>
<div class="a" style="left:403.20px;top:548.36px;font-size:8.6px;line-height:8.6px;color:#505050;"><span style="display:inline-block;transform:scaleX(0.88);transform-origin:0 0">$</span></div>
<div class="a" style="left:398.30px;top:548.24px;font-size:8.5px;line-height:8.5px;width:39.40px;text-align:right;color:#181818;"><span style="display:inline-block;transform:scaleX(0.94);transform-origin:100% 0">5,457</span></div>
<div class="a" style="left:446.40px;top:548.36px;font-size:8.6px;line-height:8.6px;color:#505050;"><span style="display:inline-block;transform:scaleX(0.88);transform-origin:0 0">$</span></div>
<div class="a" style="left:441.50px;top:548.24px;font-size:8.5px;line-height:8.5px;width:50.20px;text-align:right;color:#181818;"><span style="display:inline-block;transform:scaleX(0.94);transform-origin:100% 0">5,556</span></div>
<div class="a" style="left:500.40px;top:548.36px;font-size:8.6px;line-height:8.6px;color:#505050;"><span style="display:inline-block;transform:scaleX(0.88);transform-origin:0 0">$</span></div>
<div class="a" style="left:495.50px;top:548.24px;font-size:8.5px;line-height:8.5px;width:48.20px;text-align:right;color:#181818;"><span style="display:inline-block;transform:scaleX(0.94);transform-origin:100% 0">5,657</span></div>
<div class="a" style="left:552.40px;top:548.36px;font-size:8.6px;line-height:8.6px;color:#505050;"><span style="display:inline-block;transform:scaleX(0.88);transform-origin:0 0">$</span></div>
<div class="a" style="left:547.50px;top:548.24px;font-size:8.5px;line-height:8.5px;width:39.90px;text-align:right;color:#181818;"><span style="display:inline-block;transform:scaleX(0.94);transform-origin:100% 0">5,760</span></div>
<div class="a" style="left:596.10px;top:548.36px;font-size:8.6px;line-height:8.6px;color:#505050;"><span style="display:inline-block;transform:scaleX(0.88);transform-origin:0 0">$</span></div>
<div class="a" style="left:591.20px;top:548.24px;font-size:8.5px;line-height:8.5px;width:39.50px;text-align:right;color:#181818;"><span style="display:inline-block;transform:scaleX(0.94);transform-origin:100% 0">5,951</span></div>
<div class="a" style="left:639.40px;top:548.36px;font-size:8.6px;line-height:8.6px;color:#505050;"><span style="display:inline-block;transform:scaleX(0.88);transform-origin:0 0">$</span></div>
<div class="a" style="left:634.50px;top:548.24px;font-size:8.5px;line-height:8.5px;width:40.20px;text-align:right;color:#181818;"><span style="display:inline-block;transform:scaleX(0.94);transform-origin:100% 0">6,060</span></div>
<div class="a" style="left:683.40px;top:548.36px;font-size:8.6px;line-height:8.6px;color:#505050;"><span style="display:inline-block;transform:scaleX(0.88);transform-origin:0 0">$</span></div>
<div class="a" style="left:678.50px;top:548.24px;font-size:8.5px;line-height:8.5px;width:39.20px;text-align:right;color:#181818;"><span style="display:inline-block;transform:scaleX(0.94);transform-origin:100% 0">6,171</span></div>
<div class="a" style="left:726.40px;top:548.36px;font-size:8.6px;line-height:8.6px;color:#505050;"><span style="display:inline-block;transform:scaleX(0.88);transform-origin:0 0">$</span></div>
<div class="a" style="left:721.50px;top:548.24px;font-size:8.5px;line-height:8.5px;width:39.40px;text-align:right;color:#181818;"><span style="display:inline-block;transform:scaleX(0.94);transform-origin:100% 0">6,284</span></div>
<div class="a" style="left:769.60px;top:548.36px;font-size:8.6px;line-height:8.6px;color:#505050;"><span style="display:inline-block;transform:scaleX(0.88);transform-origin:0 0">$</span></div>
<div class="a" style="left:764.70px;top:548.24px;font-size:8.5px;line-height:8.5px;width:40.20px;text-align:right;color:#181818;"><span style="display:inline-block;transform:scaleX(0.94);transform-origin:100% 0">6,400</span></div>
<div class="a" style="left:813.60px;top:548.36px;font-size:8.6px;line-height:8.6px;color:#505050;"><span style="display:inline-block;transform:scaleX(0.88);transform-origin:0 0">$</span></div>
<div class="a" style="left:808.70px;top:548.24px;font-size:8.5px;line-height:8.5px;width:39.70px;text-align:right;color:#181818;"><span style="display:inline-block;transform:scaleX(0.94);transform-origin:100% 0">6,518</span></div>
<div class="a" style="left:17.00px;top:559.82px;font-size:8.2px;line-height:8.2px;color:#111;">Marketing and Sales</div>
<div class="a" style="left:313.40px;top:559.68px;font-size:8.6px;line-height:8.6px;color:#505050;"><span style="display:inline-block;transform:scaleX(0.88);transform-origin:0 0">$</span></div>
<div class="a" style="left:308.50px;top:559.56px;font-size:8.5px;line-height:8.5px;width:42.30px;text-align:right;color:#181818;"><span style="display:inline-block;transform:scaleX(0.94);transform-origin:100% 0">500</span></div>
<div class="a" style="left:359.50px;top:559.68px;font-size:8.6px;line-height:8.6px;color:#505050;"><span style="display:inline-block;transform:scaleX(0.88);transform-origin:0 0">$</span></div>
<div class="a" style="left:354.60px;top:559.56px;font-size:8.5px;line-height:8.5px;width:39.90px;text-align:right;color:#181818;"><span style="display:inline-block;transform:scaleX(0.94);transform-origin:100% 0">500</span></div>
<div class="a" style="left:403.20px;top:559.68px;font-size:8.6px;line-height:8.6px;color:#505050;"><span style="display:inline-block;transform:scaleX(0.88);transform-origin:0 0">$</span></div>
<div class="a" style="left:398.30px;top:559.56px;font-size:8.5px;line-height:8.5px;width:39.40px;text-align:right;color:#181818;"><span style="display:inline-block;transform:scaleX(0.94);transform-origin:100% 0">500</span></div>
<div class="a" style="left:446.40px;top:559.68px;font-size:8.6px;line-height:8.6px;color:#505050;"><span style="display:inline-block;transform:scaleX(0.88);transform-origin:0 0">$</span></div>
<div class="a" style="left:441.50px;top:559.56px;font-size:8.5px;line-height:8.5px;width:50.20px;text-align:right;color:#181818;"><span style="display:inline-block;transform:scaleX(0.94);transform-origin:100% 0">500</span></div>
<div class="a" style="left:500.40px;top:559.68px;font-size:8.6px;line-height:8.6px;color:#505050;"><span style="display:inline-block;transform:scaleX(0.88);transform-origin:0 0">$</span></div>
<div class="a" style="left:495.50px;top:559.56px;font-size:8.5px;line-height:8.5px;width:48.20px;text-align:right;color:#181818;"><span style="display:inline-block;transform:scaleX(0.94);transform-origin:100% 0">500</span></div>
<div class="a" style="left:552.40px;top:559.68px;font-size:8.6px;line-height:8.6px;color:#505050;"><span style="display:inline-block;transform:scaleX(0.88);transform-origin:0 0">$</span></div>
<div class="a" style="left:547.50px;top:559.56px;font-size:8.5px;line-height:8.5px;width:39.90px;text-align:right;color:#181818;"><span style="display:inline-block;transform:scaleX(0.94);transform-origin:100% 0">500</span></div>
<div class="a" style="left:596.10px;top:559.68px;font-size:8.6px;line-height:8.6px;color:#505050;"><span style="display:inline-block;transform:scaleX(0.88);transform-origin:0 0">$</span></div>
<div class="a" style="left:591.20px;top:559.56px;font-size:8.5px;line-height:8.5px;width:39.50px;text-align:right;color:#181818;"><span style="display:inline-block;transform:scaleX(0.94);transform-origin:100% 0">505</span></div>
<div class="a" style="left:639.40px;top:559.68px;font-size:8.6px;line-height:8.6px;color:#505050;"><span style="display:inline-block;transform:scaleX(0.88);transform-origin:0 0">$</span></div>
<div class="a" style="left:634.50px;top:559.56px;font-size:8.5px;line-height:8.5px;width:40.20px;text-align:right;color:#181818;"><span style="display:inline-block;transform:scaleX(0.94);transform-origin:100% 0">505</span></div>
<div class="a" style="left:683.40px;top:559.68px;font-size:8.6px;line-height:8.6px;color:#505050;"><span style="display:inline-block;transform:scaleX(0.88);transform-origin:0 0">$</span></div>
<div class="a" style="left:678.50px;top:559.56px;font-size:8.5px;line-height:8.5px;width:39.20px;text-align:right;color:#181818;"><span style="display:inline-block;transform:scaleX(0.94);transform-origin:100% 0">505</span></div>
<div class="a" style="left:726.40px;top:559.68px;font-size:8.6px;line-height:8.6px;color:#505050;"><span style="display:inline-block;transform:scaleX(0.88);transform-origin:0 0">$</span></div>
<div class="a" style="left:721.50px;top:559.56px;font-size:8.5px;line-height:8.5px;width:39.40px;text-align:right;color:#181818;"><span style="display:inline-block;transform:scaleX(0.94);transform-origin:100% 0">505</span></div>
<div class="a" style="left:769.60px;top:559.68px;font-size:8.6px;line-height:8.6px;color:#505050;"><span style="display:inline-block;transform:scaleX(0.88);transform-origin:0 0">$</span></div>
<div class="a" style="left:764.70px;top:559.56px;font-size:8.5px;line-height:8.5px;width:40.20px;text-align:right;color:#181818;"><span style="display:inline-block;transform:scaleX(0.94);transform-origin:100% 0">505</span></div>
<div class="a" style="left:813.60px;top:559.68px;font-size:8.6px;line-height:8.6px;color:#505050;"><span style="display:inline-block;transform:scaleX(0.88);transform-origin:0 0">$</span></div>
<div class="a" style="left:808.70px;top:559.56px;font-size:8.5px;line-height:8.5px;width:39.70px;text-align:right;color:#181818;"><span style="display:inline-block;transform:scaleX(0.94);transform-origin:100% 0">505</span></div>
<div class="a" style="left:17.00px;top:571.14px;font-size:8.2px;line-height:8.2px;color:#111;">Finance and Accounting</div>
<div class="a" style="left:313.40px;top:571.00px;font-size:8.6px;line-height:8.6px;color:#505050;"><span style="display:inline-block;transform:scaleX(0.88);transform-origin:0 0">$</span></div>
<div class="a" style="left:308.50px;top:570.88px;font-size:8.5px;line-height:8.5px;width:42.30px;text-align:right;color:#181818;"><span style="display:inline-block;transform:scaleX(0.94);transform-origin:100% 0">200</span></div>
<div class="a" style="left:359.50px;top:571.00px;font-size:8.6px;line-height:8.6px;color:#505050;"><span style="display:inline-block;transform:scaleX(0.88);transform-origin:0 0">$</span></div>
<div class="a" style="left:354.60px;top:570.88px;font-size:8.5px;line-height:8.5px;width:39.90px;text-align:right;color:#181818;"><span style="display:inline-block;transform:scaleX(0.94);transform-origin:100% 0">5,059</span></div>
<div class="a" style="left:403.20px;top:571.00px;font-size:8.6px;line-height:8.6px;color:#505050;"><span style="display:inline-block;transform:scaleX(0.88);transform-origin:0 0">$</span></div>
<div class="a" style="left:398.30px;top:570.88px;font-size:8.5px;line-height:8.5px;width:39.40px;text-align:right;color:#181818;"><span style="display:inline-block;transform:scaleX(0.94);transform-origin:100% 0">5,157</span></div>
<div class="a" style="left:446.40px;top:571.00px;font-size:8.6px;line-height:8.6px;color:#505050;"><span style="display:inline-block;transform:scaleX(0.88);transform-origin:0 0">$</span></div>
<div class="a" style="left:441.50px;top:570.88px;font-size:8.5px;line-height:8.5px;width:50.20px;text-align:right;color:#181818;"><span style="display:inline-block;transform:scaleX(0.94);transform-origin:100% 0">5,256</span></div>
<div class="a" style="left:500.40px;top:571.00px;font-size:8.6px;line-height:8.6px;color:#505050;"><span style="display:inline-block;transform:scaleX(0.88);transform-origin:0 0">$</span></div>
<div class="a" style="left:495.50px;top:570.88px;font-size:8.5px;line-height:8.5px;width:48.20px;text-align:right;color:#181818;"><span style="display:inline-block;transform:scaleX(0.94);transform-origin:100% 0">5,357</span></div>
<div class="a" style="left:552.40px;top:571.00px;font-size:8.6px;line-height:8.6px;color:#505050;"><span style="display:inline-block;transform:scaleX(0.88);transform-origin:0 0">$</span></div>
<div class="a" style="left:547.50px;top:570.88px;font-size:8.5px;line-height:8.5px;width:39.90px;text-align:right;color:#181818;"><span style="display:inline-block;transform:scaleX(0.94);transform-origin:100% 0">5,460</span></div>
<div class="a" style="left:596.10px;top:571.00px;font-size:8.6px;line-height:8.6px;color:#505050;"><span style="display:inline-block;transform:scaleX(0.88);transform-origin:0 0">$</span></div>
<div class="a" style="left:591.20px;top:570.88px;font-size:8.5px;line-height:8.5px;width:39.50px;text-align:right;color:#181818;"><span style="display:inline-block;transform:scaleX(0.94);transform-origin:100% 0">5,648</span></div>
<div class="a" style="left:639.40px;top:571.00px;font-size:8.6px;line-height:8.6px;color:#505050;"><span style="display:inline-block;transform:scaleX(0.88);transform-origin:0 0">$</span></div>
<div class="a" style="left:634.50px;top:570.88px;font-size:8.5px;line-height:8.5px;width:40.20px;text-align:right;color:#181818;"><span style="display:inline-block;transform:scaleX(0.94);transform-origin:100% 0">5,757</span></div>
<div class="a" style="left:683.40px;top:571.00px;font-size:8.6px;line-height:8.6px;color:#505050;"><span style="display:inline-block;transform:scaleX(0.88);transform-origin:0 0">$</span></div>
<div class="a" style="left:678.50px;top:570.88px;font-size:8.5px;line-height:8.5px;width:39.20px;text-align:right;color:#181818;"><span style="display:inline-block;transform:scaleX(0.94);transform-origin:100% 0">5,868</span></div>
<div class="a" style="left:726.40px;top:571.00px;font-size:8.6px;line-height:8.6px;color:#505050;"><span style="display:inline-block;transform:scaleX(0.88);transform-origin:0 0">$</span></div>
<div class="a" style="left:721.50px;top:570.88px;font-size:8.5px;line-height:8.5px;width:39.40px;text-align:right;color:#181818;"><span style="display:inline-block;transform:scaleX(0.94);transform-origin:100% 0">5,981</span></div>
<div class="a" style="left:769.60px;top:571.00px;font-size:8.6px;line-height:8.6px;color:#505050;"><span style="display:inline-block;transform:scaleX(0.88);transform-origin:0 0">$</span></div>
<div class="a" style="left:764.70px;top:570.88px;font-size:8.5px;line-height:8.5px;width:40.20px;text-align:right;color:#181818;"><span style="display:inline-block;transform:scaleX(0.94);transform-origin:100% 0">6,097</span></div>
<div class="a" style="left:813.60px;top:571.00px;font-size:8.6px;line-height:8.6px;color:#505050;"><span style="display:inline-block;transform:scaleX(0.88);transform-origin:0 0">$</span></div>
<div class="a" style="left:808.70px;top:570.88px;font-size:8.5px;line-height:8.5px;width:39.70px;text-align:right;color:#181818;"><span style="display:inline-block;transform:scaleX(0.94);transform-origin:100% 0">6,215</span></div>
<div class="a" style="left:17.00px;top:582.46px;font-size:8.2px;line-height:8.2px;color:#111;">Information Technology (IT)</div>
<div class="a" style="left:313.40px;top:582.32px;font-size:8.6px;line-height:8.6px;color:#505050;"><span style="display:inline-block;transform:scaleX(0.88);transform-origin:0 0">$</span></div>
<div class="a" style="left:308.50px;top:582.20px;font-size:8.5px;line-height:8.5px;width:42.30px;text-align:right;color:#181818;"><span style="display:inline-block;transform:scaleX(0.94);transform-origin:100% 0">200</span></div>
<div class="a" style="left:359.50px;top:582.32px;font-size:8.6px;line-height:8.6px;color:#505050;"><span style="display:inline-block;transform:scaleX(0.88);transform-origin:0 0">$</span></div>
<div class="a" style="left:354.60px;top:582.20px;font-size:8.5px;line-height:8.5px;width:39.90px;text-align:right;color:#181818;"><span style="display:inline-block;transform:scaleX(0.94);transform-origin:100% 0">200</span></div>
<div class="a" style="left:403.20px;top:582.32px;font-size:8.6px;line-height:8.6px;color:#505050;"><span style="display:inline-block;transform:scaleX(0.88);transform-origin:0 0">$</span></div>
<div class="a" style="left:398.30px;top:582.20px;font-size:8.5px;line-height:8.5px;width:39.40px;text-align:right;color:#181818;"><span style="display:inline-block;transform:scaleX(0.94);transform-origin:100% 0">200</span></div>
<div class="a" style="left:446.40px;top:582.32px;font-size:8.6px;line-height:8.6px;color:#505050;"><span style="display:inline-block;transform:scaleX(0.88);transform-origin:0 0">$</span></div>
<div class="a" style="left:441.50px;top:582.20px;font-size:8.5px;line-height:8.5px;width:50.20px;text-align:right;color:#181818;"><span style="display:inline-block;transform:scaleX(0.94);transform-origin:100% 0">200</span></div>
<div class="a" style="left:500.40px;top:582.32px;font-size:8.6px;line-height:8.6px;color:#505050;"><span style="display:inline-block;transform:scaleX(0.88);transform-origin:0 0">$</span></div>
<div class="a" style="left:495.50px;top:582.20px;font-size:8.5px;line-height:8.5px;width:48.20px;text-align:right;color:#181818;"><span style="display:inline-block;transform:scaleX(0.94);transform-origin:100% 0">200</span></div>
<div class="a" style="left:552.40px;top:582.32px;font-size:8.6px;line-height:8.6px;color:#505050;"><span style="display:inline-block;transform:scaleX(0.88);transform-origin:0 0">$</span></div>
<div class="a" style="left:547.50px;top:582.20px;font-size:8.5px;line-height:8.5px;width:39.90px;text-align:right;color:#181818;"><span style="display:inline-block;transform:scaleX(0.94);transform-origin:100% 0">200</span></div>
<div class="a" style="left:596.10px;top:582.32px;font-size:8.6px;line-height:8.6px;color:#505050;"><span style="display:inline-block;transform:scaleX(0.88);transform-origin:0 0">$</span></div>
<div class="a" style="left:591.20px;top:582.20px;font-size:8.5px;line-height:8.5px;width:39.50px;text-align:right;color:#181818;"><span style="display:inline-block;transform:scaleX(0.94);transform-origin:100% 0">202</span></div>
<div class="a" style="left:639.40px;top:582.32px;font-size:8.6px;line-height:8.6px;color:#505050;"><span style="display:inline-block;transform:scaleX(0.88);transform-origin:0 0">$</span></div>
<div class="a" style="left:634.50px;top:582.20px;font-size:8.5px;line-height:8.5px;width:40.20px;text-align:right;color:#181818;"><span style="display:inline-block;transform:scaleX(0.94);transform-origin:100% 0">202</span></div>
<div class="a" style="left:683.40px;top:582.32px;font-size:8.6px;line-height:8.6px;color:#505050;"><span style="display:inline-block;transform:scaleX(0.88);transform-origin:0 0">$</span></div>
<div class="a" style="left:678.50px;top:582.20px;font-size:8.5px;line-height:8.5px;width:39.20px;text-align:right;color:#181818;"><span style="display:inline-block;transform:scaleX(0.94);transform-origin:100% 0">202</span></div>
<div class="a" style="left:726.40px;top:582.32px;font-size:8.6px;line-height:8.6px;color:#505050;"><span style="display:inline-block;transform:scaleX(0.88);transform-origin:0 0">$</span></div>
<div class="a" style="left:721.50px;top:582.20px;font-size:8.5px;line-height:8.5px;width:39.40px;text-align:right;color:#181818;"><span style="display:inline-block;transform:scaleX(0.94);transform-origin:100% 0">202</span></div>
<div class="a" style="left:769.60px;top:582.32px;font-size:8.6px;line-height:8.6px;color:#505050;"><span style="display:inline-block;transform:scaleX(0.88);transform-origin:0 0">$</span></div>
<div class="a" style="left:764.70px;top:582.20px;font-size:8.5px;line-height:8.5px;width:40.20px;text-align:right;color:#181818;"><span style="display:inline-block;transform:scaleX(0.94);transform-origin:100% 0">202</span></div>
<div class="a" style="left:813.60px;top:582.32px;font-size:8.6px;line-height:8.6px;color:#505050;"><span style="display:inline-block;transform:scaleX(0.88);transform-origin:0 0">$</span></div>
<div class="a" style="left:808.70px;top:582.20px;font-size:8.5px;line-height:8.5px;width:39.70px;text-align:right;color:#181818;"><span style="display:inline-block;transform:scaleX(0.94);transform-origin:100% 0">202</span></div>
<div class="a" style="left:17.00px;top:593.78px;font-size:8.2px;line-height:8.2px;color:#111;">Compliance and Regulatory Affairs</div>
<div class="a" style="left:313.40px;top:593.64px;font-size:8.6px;line-height:8.6px;color:#505050;"><span style="display:inline-block;transform:scaleX(0.88);transform-origin:0 0">$</span></div>
<div class="a" style="left:308.50px;top:593.52px;font-size:8.5px;line-height:8.5px;width:42.30px;text-align:right;color:#181818;"><span style="display:inline-block;transform:scaleX(0.94);transform-origin:100% 0">300</span></div>
<div class="a" style="left:359.50px;top:593.64px;font-size:8.6px;line-height:8.6px;color:#505050;"><span style="display:inline-block;transform:scaleX(0.88);transform-origin:0 0">$</span></div>
<div class="a" style="left:354.60px;top:593.52px;font-size:8.5px;line-height:8.5px;width:39.90px;text-align:right;color:#181818;"><span style="display:inline-block;transform:scaleX(0.94);transform-origin:100% 0">300</span></div>
<div class="a" style="left:403.20px;top:593.64px;font-size:8.6px;line-height:8.6px;color:#505050;"><span style="display:inline-block;transform:scaleX(0.88);transform-origin:0 0">$</span></div>
<div class="a" style="left:398.30px;top:593.52px;font-size:8.5px;line-height:8.5px;width:39.40px;text-align:right;color:#181818;"><span style="display:inline-block;transform:scaleX(0.94);transform-origin:100% 0">300</span></div>
<div class="a" style="left:446.40px;top:593.64px;font-size:8.6px;line-height:8.6px;color:#505050;"><span style="display:inline-block;transform:scaleX(0.88);transform-origin:0 0">$</span></div>
<div class="a" style="left:441.50px;top:593.52px;font-size:8.5px;line-height:8.5px;width:50.20px;text-align:right;color:#181818;"><span style="display:inline-block;transform:scaleX(0.94);transform-origin:100% 0">300</span></div>
<div class="a" style="left:500.40px;top:593.64px;font-size:8.6px;line-height:8.6px;color:#505050;"><span style="display:inline-block;transform:scaleX(0.88);transform-origin:0 0">$</span></div>
<div class="a" style="left:495.50px;top:593.52px;font-size:8.5px;line-height:8.5px;width:48.20px;text-align:right;color:#181818;"><span style="display:inline-block;transform:scaleX(0.94);transform-origin:100% 0">300</span></div>
<div class="a" style="left:552.40px;top:593.64px;font-size:8.6px;line-height:8.6px;color:#505050;"><span style="display:inline-block;transform:scaleX(0.88);transform-origin:0 0">$</span></div>
<div class="a" style="left:547.50px;top:593.52px;font-size:8.5px;line-height:8.5px;width:39.90px;text-align:right;color:#181818;"><span style="display:inline-block;transform:scaleX(0.94);transform-origin:100% 0">300</span></div>
<div class="a" style="left:596.10px;top:593.64px;font-size:8.6px;line-height:8.6px;color:#505050;"><span style="display:inline-block;transform:scaleX(0.88);transform-origin:0 0">$</span></div>
<div class="a" style="left:591.20px;top:593.52px;font-size:8.5px;line-height:8.5px;width:39.50px;text-align:right;color:#181818;"><span style="display:inline-block;transform:scaleX(0.94);transform-origin:100% 0">303</span></div>
<div class="a" style="left:639.40px;top:593.64px;font-size:8.6px;line-height:8.6px;color:#505050;"><span style="display:inline-block;transform:scaleX(0.88);transform-origin:0 0">$</span></div>
<div class="a" style="left:634.50px;top:593.52px;font-size:8.5px;line-height:8.5px;width:40.20px;text-align:right;color:#181818;"><span style="display:inline-block;transform:scaleX(0.94);transform-origin:100% 0">303</span></div>
<div class="a" style="left:683.40px;top:593.64px;font-size:8.6px;line-height:8.6px;color:#505050;"><span style="display:inline-block;transform:scaleX(0.88);transform-origin:0 0">$</span></div>
<div class="a" style="left:678.50px;top:593.52px;font-size:8.5px;line-height:8.5px;width:39.20px;text-align:right;color:#181818;"><span style="display:inline-block;transform:scaleX(0.94);transform-origin:100% 0">303</span></div>
<div class="a" style="left:726.40px;top:593.64px;font-size:8.6px;line-height:8.6px;color:#505050;"><span style="display:inline-block;transform:scaleX(0.88);transform-origin:0 0">$</span></div>
<div class="a" style="left:721.50px;top:593.52px;font-size:8.5px;line-height:8.5px;width:39.40px;text-align:right;color:#181818;"><span style="display:inline-block;transform:scaleX(0.94);transform-origin:100% 0">303</span></div>
<div class="a" style="left:769.60px;top:593.64px;font-size:8.6px;line-height:8.6px;color:#505050;"><span style="display:inline-block;transform:scaleX(0.88);transform-origin:0 0">$</span></div>
<div class="a" style="left:764.70px;top:593.52px;font-size:8.5px;line-height:8.5px;width:40.20px;text-align:right;color:#181818;"><span style="display:inline-block;transform:scaleX(0.94);transform-origin:100% 0">303</span></div>
<div class="a" style="left:813.60px;top:593.64px;font-size:8.6px;line-height:8.6px;color:#505050;"><span style="display:inline-block;transform:scaleX(0.88);transform-origin:0 0">$</span></div>
<div class="a" style="left:808.70px;top:593.52px;font-size:8.5px;line-height:8.5px;width:39.70px;text-align:right;color:#181818;"><span style="display:inline-block;transform:scaleX(0.94);transform-origin:100% 0">303</span></div>
<div class="a" style="left:17.00px;top:605.10px;font-size:8.2px;line-height:8.2px;color:#111;">Human Resources (HR)</div>
<div class="a" style="left:313.40px;top:604.96px;font-size:8.6px;line-height:8.6px;color:#505050;"><span style="display:inline-block;transform:scaleX(0.88);transform-origin:0 0">$</span></div>
<div class="a" style="left:308.50px;top:604.84px;font-size:8.5px;line-height:8.5px;width:42.30px;text-align:right;color:#181818;"><span style="display:inline-block;transform:scaleX(0.94);transform-origin:100% 0">300</span></div>
<div class="a" style="left:359.50px;top:604.96px;font-size:8.6px;line-height:8.6px;color:#505050;"><span style="display:inline-block;transform:scaleX(0.88);transform-origin:0 0">$</span></div>
<div class="a" style="left:354.60px;top:604.84px;font-size:8.5px;line-height:8.5px;width:39.90px;text-align:right;color:#181818;"><span style="display:inline-block;transform:scaleX(0.94);transform-origin:100% 0">300</span></div>
<div class="a" style="left:403.20px;top:604.96px;font-size:8.6px;line-height:8.6px;color:#505050;"><span style="display:inline-block;transform:scaleX(0.88);transform-origin:0 0">$</span></div>
<div class="a" style="left:398.30px;top:604.84px;font-size:8.5px;line-height:8.5px;width:39.40px;text-align:right;color:#181818;"><span style="display:inline-block;transform:scaleX(0.94);transform-origin:100% 0">300</span></div>
<div class="a" style="left:446.40px;top:604.96px;font-size:8.6px;line-height:8.6px;color:#505050;"><span style="display:inline-block;transform:scaleX(0.88);transform-origin:0 0">$</span></div>
<div class="a" style="left:441.50px;top:604.84px;font-size:8.5px;line-height:8.5px;width:50.20px;text-align:right;color:#181818;"><span style="display:inline-block;transform:scaleX(0.94);transform-origin:100% 0">300</span></div>
<div class="a" style="left:500.40px;top:604.96px;font-size:8.6px;line-height:8.6px;color:#505050;"><span style="display:inline-block;transform:scaleX(0.88);transform-origin:0 0">$</span></div>
<div class="a" style="left:495.50px;top:604.84px;font-size:8.5px;line-height:8.5px;width:48.20px;text-align:right;color:#181818;"><span style="display:inline-block;transform:scaleX(0.94);transform-origin:100% 0">300</span></div>
<div class="a" style="left:552.40px;top:604.96px;font-size:8.6px;line-height:8.6px;color:#505050;"><span style="display:inline-block;transform:scaleX(0.88);transform-origin:0 0">$</span></div>
<div class="a" style="left:547.50px;top:604.84px;font-size:8.5px;line-height:8.5px;width:39.90px;text-align:right;color:#181818;"><span style="display:inline-block;transform:scaleX(0.94);transform-origin:100% 0">300</span></div>
<div class="a" style="left:596.10px;top:604.96px;font-size:8.6px;line-height:8.6px;color:#505050;"><span style="display:inline-block;transform:scaleX(0.88);transform-origin:0 0">$</span></div>
<div class="a" style="left:591.20px;top:604.84px;font-size:8.5px;line-height:8.5px;width:39.50px;text-align:right;color:#181818;"><span style="display:inline-block;transform:scaleX(0.94);transform-origin:100% 0">303</span></div>
<div class="a" style="left:639.40px;top:604.96px;font-size:8.6px;line-height:8.6px;color:#505050;"><span style="display:inline-block;transform:scaleX(0.88);transform-origin:0 0">$</span></div>
<div class="a" style="left:634.50px;top:604.84px;font-size:8.5px;line-height:8.5px;width:40.20px;text-align:right;color:#181818;"><span style="display:inline-block;transform:scaleX(0.94);transform-origin:100% 0">303</span></div>
<div class="a" style="left:683.40px;top:604.96px;font-size:8.6px;line-height:8.6px;color:#505050;"><span style="display:inline-block;transform:scaleX(0.88);transform-origin:0 0">$</span></div>
<div class="a" style="left:678.50px;top:604.84px;font-size:8.5px;line-height:8.5px;width:39.20px;text-align:right;color:#181818;"><span style="display:inline-block;transform:scaleX(0.94);transform-origin:100% 0">303</span></div>
<div class="a" style="left:726.40px;top:604.96px;font-size:8.6px;line-height:8.6px;color:#505050;"><span style="display:inline-block;transform:scaleX(0.88);transform-origin:0 0">$</span></div>
<div class="a" style="left:721.50px;top:604.84px;font-size:8.5px;line-height:8.5px;width:39.40px;text-align:right;color:#181818;"><span style="display:inline-block;transform:scaleX(0.94);transform-origin:100% 0">303</span></div>
<div class="a" style="left:769.60px;top:604.96px;font-size:8.6px;line-height:8.6px;color:#505050;"><span style="display:inline-block;transform:scaleX(0.88);transform-origin:0 0">$</span></div>
<div class="a" style="left:764.70px;top:604.84px;font-size:8.5px;line-height:8.5px;width:40.20px;text-align:right;color:#181818;"><span style="display:inline-block;transform:scaleX(0.94);transform-origin:100% 0">303</span></div>
<div class="a" style="left:813.60px;top:604.96px;font-size:8.6px;line-height:8.6px;color:#505050;"><span style="display:inline-block;transform:scaleX(0.88);transform-origin:0 0">$</span></div>
<div class="a" style="left:808.70px;top:604.84px;font-size:8.5px;line-height:8.5px;width:39.70px;text-align:right;color:#181818;"><span style="display:inline-block;transform:scaleX(0.94);transform-origin:100% 0">303</span></div>
</body></html>
